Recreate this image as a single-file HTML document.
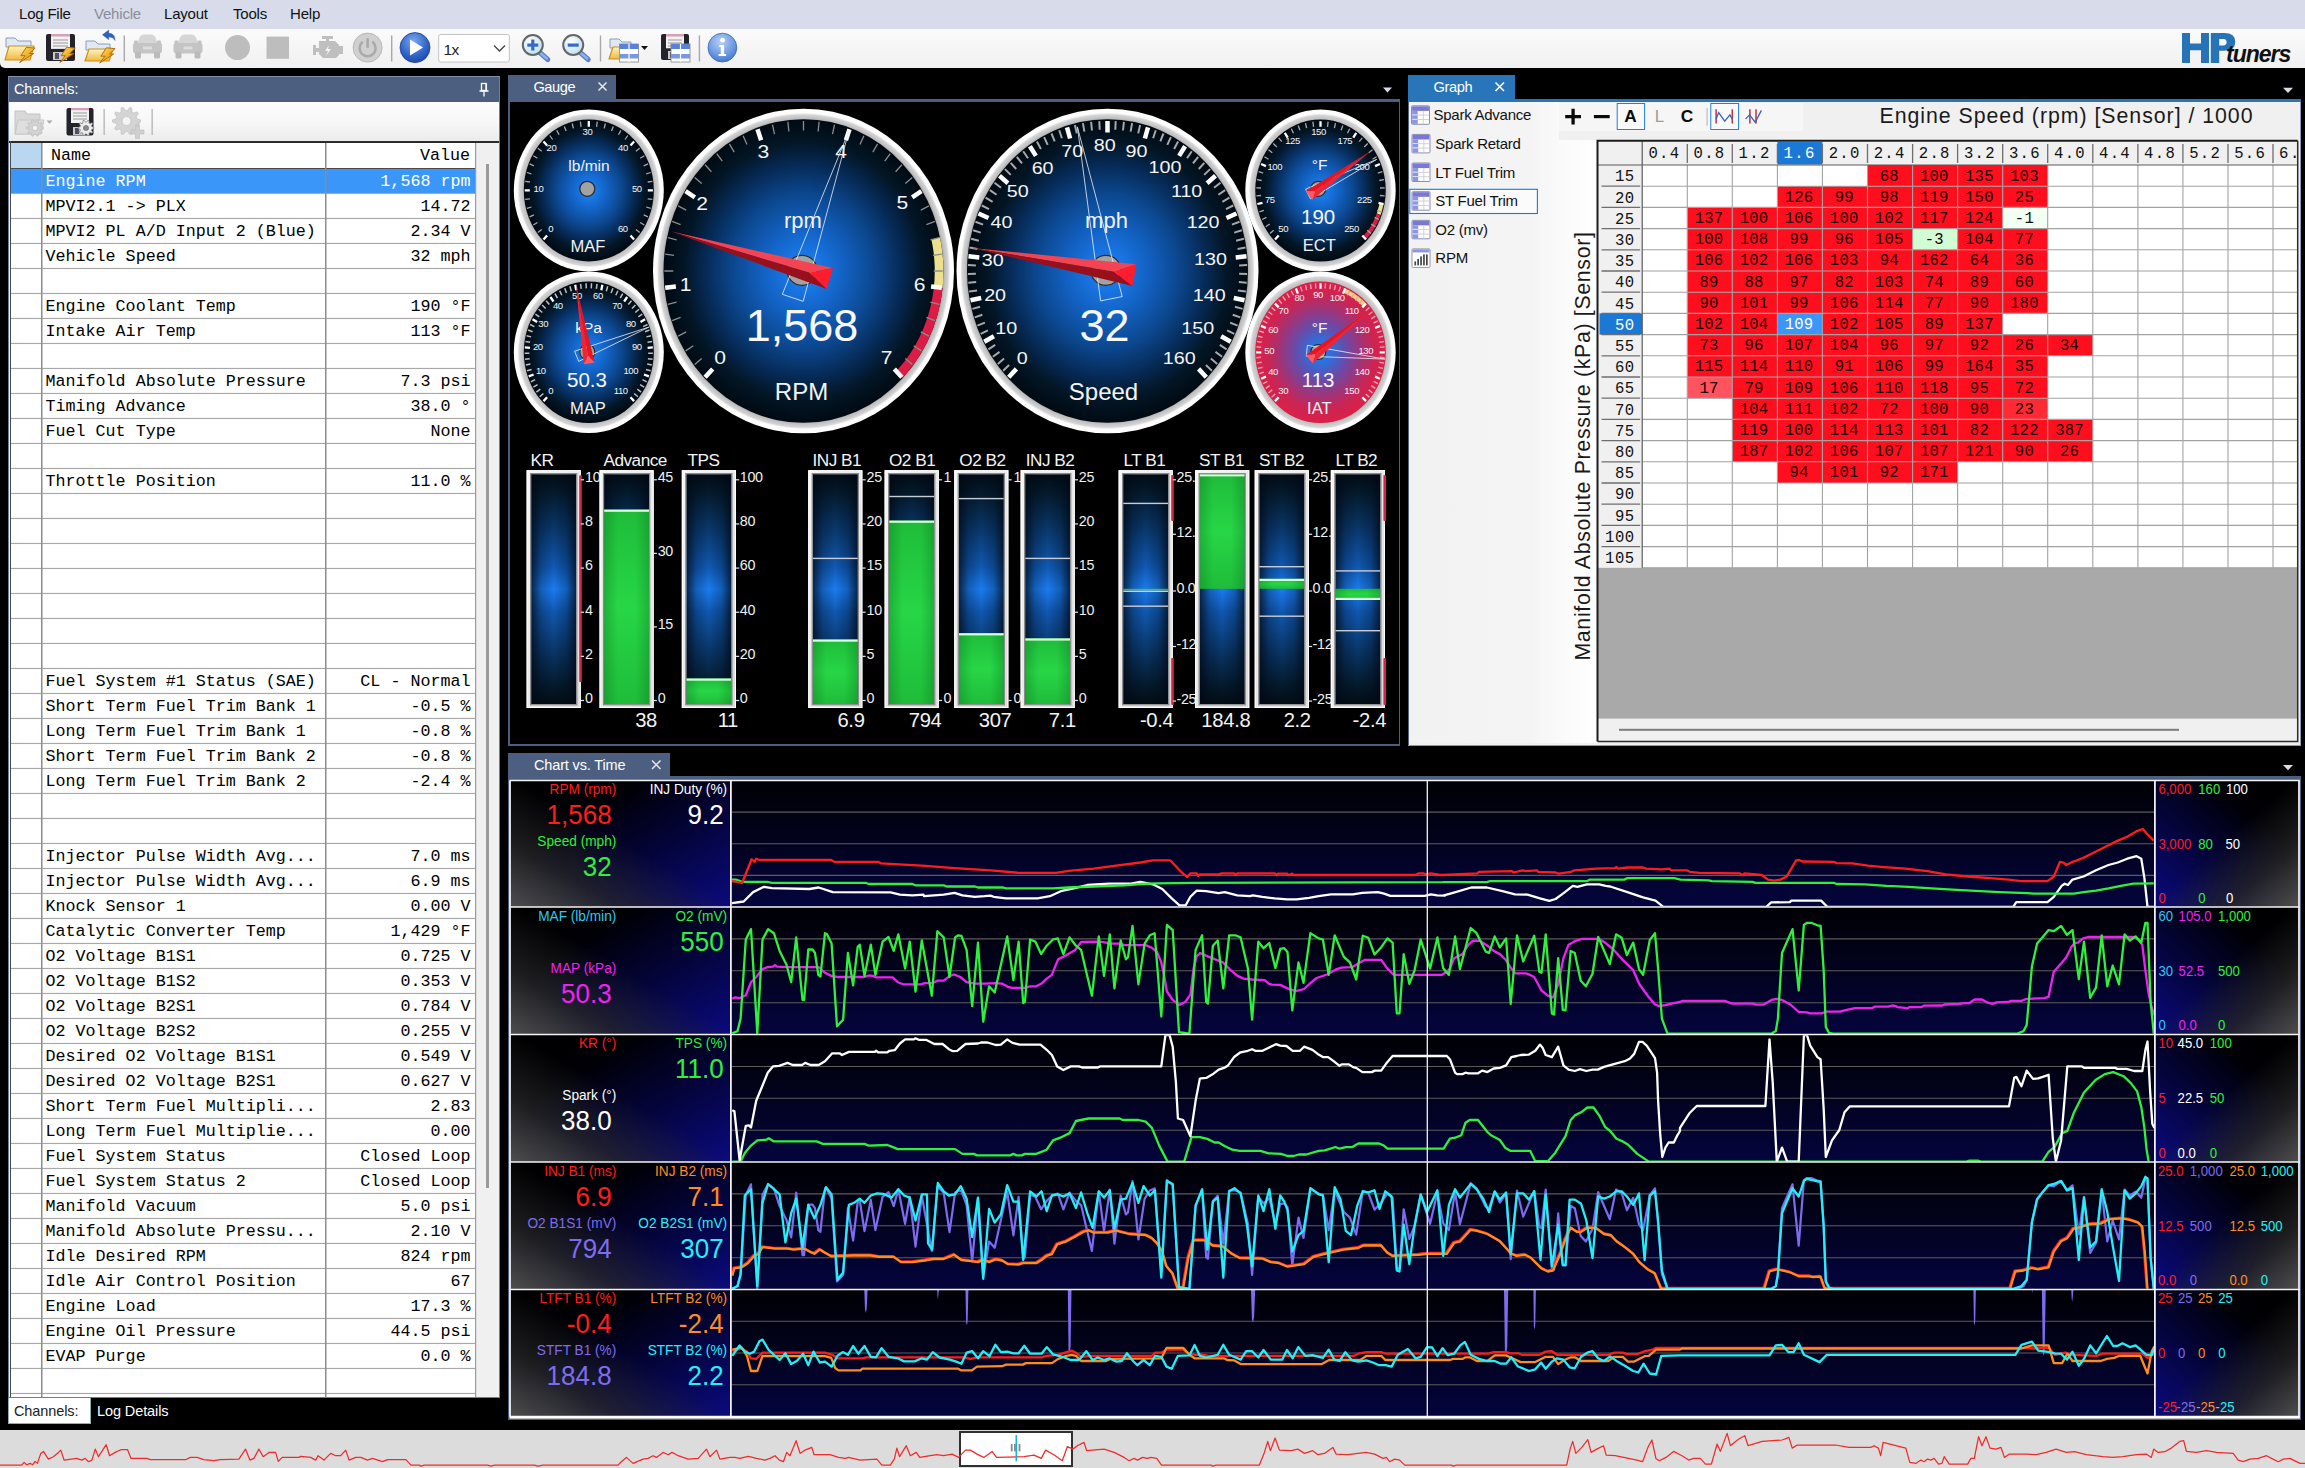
<!DOCTYPE html>
<html><head><meta charset='utf-8'><title>VCM Scanner</title><style>
*{box-sizing:border-box;margin:0;padding:0}
html,body{width:2305px;height:1468px;overflow:hidden;background:#000;}
body{position:relative;font-family:"Liberation Sans",sans-serif;color:#000;}
.abs{position:absolute}
.t{position:absolute;white-space:nowrap;line-height:1}
.mono{font-family:"Liberation Mono",monospace}
svg{position:absolute;left:0;top:0;overflow:visible}
</style></head><body>
<div class="abs" style="left:0;top:0;width:2305px;height:29px;background:#d8dcea"></div>
<div class="t" style="left:19px;top:6px;font-size:15px;color:#111;letter-spacing:-0.2px">Log File</div>
<div class="t" style="left:94px;top:6px;font-size:15px;color:#8a8d98;letter-spacing:-0.2px">Vehicle</div>
<div class="t" style="left:164px;top:6px;font-size:15px;color:#111;letter-spacing:-0.2px">Layout</div>
<div class="t" style="left:233px;top:6px;font-size:15px;color:#111;letter-spacing:-0.2px">Tools</div>
<div class="t" style="left:290px;top:6px;font-size:15px;color:#111;letter-spacing:-0.2px">Help</div>
<div class="abs" style="left:0;top:29px;width:2305px;height:38.6px;background:linear-gradient(#fbfbfb,#f0f0f0);border-bottom-left-radius:5px"></div>
<svg width="2305" height="70" viewBox="0 0 2305 70"><defs>
<linearGradient id="fold" x1="0" y1="0" x2="0" y2="1"><stop offset="0" stop-color="#fff3c0"/><stop offset="1" stop-color="#f0b840"/></linearGradient>
<linearGradient id="bolt" x1="0" y1="0" x2="1" y2="1"><stop offset="0" stop-color="#ffe060"/><stop offset="1" stop-color="#e08000"/></linearGradient>
<radialGradient id="bluebtn" cx="0.45" cy="0.3" r="0.8"><stop offset="0" stop-color="#7aa8f0"/><stop offset="0.6" stop-color="#2f62c8"/><stop offset="1" stop-color="#1c3f98"/></radialGradient>
<radialGradient id="infobtn" cx="0.45" cy="0.3" r="0.8"><stop offset="0" stop-color="#b8d0f8"/><stop offset="0.6" stop-color="#6a98e0"/><stop offset="1" stop-color="#3868c0"/></radialGradient>
<radialGradient id="lens" cx="0.4" cy="0.35" r="0.7"><stop offset="0" stop-color="#ffffff"/><stop offset="1" stop-color="#b8e0f4"/></radialGradient>
</defs><path d="M6,38 h9 l3,3 h13 v6 h-25 z" fill="#dfe9f5" stroke="#8aa0b8" stroke-width="1"/><path d="M9,46 h25 l-4,14 h-25 z" fill="url(#fold)" stroke="#c89020" stroke-width="1.2" stroke-linejoin="round"/><path d="M26.3,47.3 L35.1,48.099999999999994 L29.5,53.5 L33.7,53.5 L19.7,62.5 L25.1,55.699999999999996 L20.900000000000002,55.699999999999996 Z" fill="url(#bolt)" stroke="#b06400" stroke-width="0.9" stroke-linejoin="round"/><rect x="46" y="34" width="29" height="27" rx="2" fill="#23232b"/><rect x="51" y="34" width="19" height="14.9" fill="#f2f2f2"/><rect x="51" y="34" width="19" height="2.5" fill="#d8a0b8"/><path d="M53,40 h15 M53,43 h15 M53,46 h15" stroke="#999" stroke-width="1"/><rect x="53" y="52" width="14" height="8" fill="#c8c8d0"/><rect x="55" y="53" width="4" height="6" fill="#50505a"/><path d="M66.5,47.3 L75.3,48.099999999999994 L69.7,53.5 L73.9,53.5 L59.9,62.5 L65.3,55.699999999999996 L61.1,55.699999999999996 Z" fill="url(#bolt)" stroke="#b06400" stroke-width="0.9" stroke-linejoin="round"/><path d="M86,41 h9 l3,3 h12 v6 h-24 z" fill="#dfe9f5" stroke="#8aa0b8" stroke-width="1"/><path d="M89,49 h24 l-4,12 h-24 z" fill="url(#fold)" stroke="#c89020" stroke-width="1.2" stroke-linejoin="round"/><path d="M106.3,47.8 L115.1,48.599999999999994 L109.5,54.0 L113.7,54.0 L99.7,63.0 L105.1,56.199999999999996 L100.89999999999999,56.199999999999996 Z" fill="url(#bolt)" stroke="#b06400" stroke-width="0.9" stroke-linejoin="round"/><path d="M102.5,34.8 l6.2,-4.6 v3 q6.4,0.2 6.3,7.2 q-2,-3.6 -6.3,-3.6 v2.8 z" fill="#2b62bc" stroke="#20509c" stroke-width="0.5"/><rect x="123.6" y="35.5" width="1.4" height="26" fill="#a8a8a8"/><rect x="391.0" y="35.5" width="1.4" height="26" fill="#a8a8a8"/><rect x="599.8" y="35.5" width="1.4" height="26" fill="#a8a8a8"/><rect x="698.6999999999999" y="35.5" width="1.4" height="26" fill="#a8a8a8"/><path d="M138,42.5 q1,-7 5,-8 h9 q4,1 5,8 z" fill="#d6d6d6"/><rect x="133" y="42.5" width="29" height="11" rx="3" fill="#c4c4c4"/><rect x="134" y="40.5" width="4" height="3" rx="1" fill="#c4c4c4"/><rect x="157" y="40.5" width="4" height="3" rx="1" fill="#c4c4c4"/><rect x="135" y="51.5" width="6" height="7" rx="1.5" fill="#bbb"/><rect x="154" y="51.5" width="6" height="7" rx="1.5" fill="#bbb"/><rect x="143" y="46.5" width="9" height="3" fill="#dcdcdc"/><path d="M178.5,42.5 q1,-7 5,-8 h9 q4,1 5,8 z" fill="#d6d6d6"/><rect x="173.5" y="42.5" width="29" height="11" rx="3" fill="#c4c4c4"/><rect x="174.5" y="40.5" width="4" height="3" rx="1" fill="#c4c4c4"/><rect x="197.5" y="40.5" width="4" height="3" rx="1" fill="#c4c4c4"/><rect x="175.5" y="51.5" width="6" height="7" rx="1.5" fill="#bbb"/><rect x="194.5" y="51.5" width="6" height="7" rx="1.5" fill="#bbb"/><rect x="183.5" y="46.5" width="9" height="3" fill="#dcdcdc"/><circle cx="237.5" cy="47.6" r="12.5" fill="#bdbdbd"/><rect x="266.5" y="36.6" width="22.5" height="22.2" fill="#bdbdbd"/><g fill="#bfbfbf"><rect x="322" y="36" width="11" height="3"/><rect x="326" y="38" width="3" height="4"/><path d="M319,41 h16 l4,4 v10 l-3,3 h-13 l-4,-4 z"/><rect x="313" y="45" width="3" height="10"/><rect x="315" y="48" width="5" height="4"/><rect x="339" y="46" width="4" height="8"/></g><path d="M329,45 l-4,6 h3 l-2,5 l5,-7 h-3 z" fill="#f2f2f2"/><circle cx="367.6" cy="47.6" r="14.5" fill="#d0d0d0" stroke="#b8b8b8"/><path d="M362,42.5 a8,8 0 1 0 11.2,0" fill="none" stroke="#aaa" stroke-width="2.6" stroke-linecap="round"/><rect x="366.3" y="38" width="2.6" height="10" rx="1" fill="#aaa"/><circle cx="415" cy="47.6" r="15" fill="url(#bluebtn)" stroke="#1c3f98" stroke-width="0.8"/><path d="M410,39.5 l13,8 l-13,8 z" fill="#fff"/><rect x="438.7" y="34.5" width="70.6" height="27.5" rx="2" fill="#fff" stroke="#c4c4c4"/><path d="M494,45.5 l5.5,5.5 l5.5,-5.5" fill="none" stroke="#444" stroke-width="1.3"/><path d="M539.8,52.5 l8,7" stroke="#5a80c8" stroke-width="5" stroke-linecap="round"/><path d="M540.8,53.5 l6,5" stroke="#8fb0ec" stroke-width="2.5" stroke-linecap="round"/><circle cx="532.8" cy="45" r="10" fill="url(#lens)" stroke="#666" stroke-width="2"/><rect x="527.3" y="43.5" width="11" height="3.2" fill="#3a68c8"/><rect x="531.1999999999999" y="39.5" width="3.2" height="11" fill="#3a68c8"/><path d="M580.2,52.5 l8,7" stroke="#5a80c8" stroke-width="5" stroke-linecap="round"/><path d="M581.2,53.5 l6,5" stroke="#8fb0ec" stroke-width="2.5" stroke-linecap="round"/><circle cx="573.2" cy="45" r="10" fill="url(#lens)" stroke="#666" stroke-width="2"/><rect x="567.7" y="43.5" width="11" height="3.2" fill="#3a68c8"/><path d="M610,39 h9 l3,3 h9 v6 h-21 z" fill="#dfe9f5" stroke="#8aa0b8" stroke-width="1"/><path d="M613,47 h21 l-4,12 h-21 z" fill="url(#fold)" stroke="#c89020" stroke-width="1.2" stroke-linejoin="round"/><rect x="619.5" y="44" width="19" height="18" fill="#fff" stroke="#888" stroke-width="0.8"/><rect x="619.5" y="44" width="19" height="5" fill="#5a80d8"/><rect x="619.5" y="54" width="19" height="4.5" fill="#7898e0"/><path d="M629.0,44 v18" stroke="#fff" stroke-width="1.2"/><path d="M641,46 h7 l-3.5,4 z" fill="#111"/><rect x="661" y="34" width="28" height="26" rx="2" fill="#23232b"/><rect x="666" y="34" width="18" height="14.3" fill="#f2f2f2"/><rect x="666" y="34" width="18" height="2.5" fill="#d8a0b8"/><path d="M668,40 h14 M668,43 h14 M668,46 h14" stroke="#999" stroke-width="1"/><rect x="668" y="51" width="13" height="8" fill="#c8c8d0"/><rect x="670" y="52" width="4" height="6" fill="#50505a"/><rect x="671" y="44" width="19" height="18" fill="#fff" stroke="#888" stroke-width="0.8"/><rect x="671" y="44" width="19" height="5" fill="#5a80d8"/><rect x="671" y="54" width="19" height="4.5" fill="#7898e0"/><path d="M680.5,44 v18" stroke="#fff" stroke-width="1.2"/><circle cx="722.4" cy="47.6" r="14.4" fill="url(#infobtn)" stroke="#3a64b8" stroke-width="0.8"/><circle cx="722.6" cy="40.2" r="2.4" fill="#fff"/><path d="M719.5,45 h4.6 v9 h2 v2 h-7.5 v-2 h2.2 v-7 h-1.6 z" fill="#fff"/></svg>
<div class="t" style="left:443.5px;top:42px;font-size:15.5px;color:#222;letter-spacing:-0.6px">1x</div>
<svg width="2305" height="70"><g fill="#2773b7"><path d="M2182,32.9 h8 v10.7 h11 v-10.7 h8 v30.2 h-8 v-12.9 h-11 v12.9 h-8 z"/><path fill-rule="evenodd" d="M2210.8,32.9 h13.6 q10.9,0 10.9,8.9 q0,8.9 -10.9,8.9 h-5.2 v12.4 h-8.4 z M2219.2,39.1 v6.3 h4.2 q3.2,0 3.2,-3.15 q0,-3.15 -3.2,-3.15 z"/></g></svg>
<div class="t" style="left:2226px;top:43.2px;font-size:23px;font-weight:bold;font-style:italic;color:#111;letter-spacing:-1px">tuners</div>
<div class="abs" style="left:8px;top:76px;width:492px;height:1322px;background:#f0f0f0;border:1px solid #6c7ea0;border-top-color:#7f90b0"></div>
<div class="abs" style="left:9px;top:77px;width:490px;height:25px;background:#4d5f80"></div>
<div class="t" style="left:14px;top:82px;font-size:14.5px;color:#fff;letter-spacing:-0.1px">Channels:</div>
<svg width="2305" height="1468"><g stroke="#fff" stroke-width="1.3" fill="none"><rect x="481.5" y="83.5" width="4.6" height="7"/><path d="M486.4,83.5 v7.5 M479.5,91 h9 M484,91 v5.5"/></g></svg>
<div class="abs" style="left:9px;top:102px;width:490px;height:39px;background:linear-gradient(#fdfdfd,#f6f6f6 60%,#ebebeb)"></div>
<svg width="2305" height="1468"><path d="M15,111 h10 l2,3 h13 v20 h-25 z" fill="#d8d8d8" stroke="#c4c4c4"/><path d="M18,120 h26 l-3,14 h-26 z" fill="#dedede" stroke="#c8c8c8"/><polygon points="43.5,127.3 43.5,128.7 41.1,129.5 40.8,130.4 42.3,132.4 41.5,133.5 39.1,132.8 38.3,133.4 38.3,135.8 37.0,136.3 35.5,134.3 34.5,134.3 33.0,136.3 31.8,135.9 31.7,133.4 30.9,132.8 28.5,133.5 27.8,132.5 29.2,130.4 28.9,129.5 26.5,128.7 26.5,127.3 28.9,126.5 29.2,125.6 27.7,123.6 28.5,122.5 30.9,123.2 31.7,122.6 31.7,120.2 33.0,119.7 34.5,121.7 35.5,121.7 37.0,119.7 38.2,120.1 38.3,122.6 39.1,123.2 41.5,122.5 42.2,123.5 40.8,125.6 41.1,126.5" fill="#d2d2d2" stroke="#bcbcbc" stroke-width="0.7"/><circle cx="35" cy="128" r="2.7" fill="#f4f4f4" stroke="#bcbcbc" stroke-width="0.7"/><path d="M46.5,120.5 h6 l-3,3.2 z" fill="#aaa"/><rect x="66.5" y="108" width="27" height="27.5" rx="2" fill="#23232b"/><rect x="71" y="108" width="18" height="15" fill="#f2f2f2"/><rect x="71" y="108" width="18" height="2.2" fill="#d8a0b8"/><path d="M73,113 h14 M73,116 h14 M73,119 h14" stroke="#999" stroke-width="1"/><rect x="73" y="127" width="11" height="8" fill="#c8c8d0"/><rect x="75" y="128" width="4" height="6" fill="#50505a"/><polygon points="94.0,127.4 94.0,128.6 91.8,129.4 91.5,130.3 92.8,132.2 92.1,133.2 89.9,132.5 89.1,133.0 89.1,135.4 87.9,135.8 86.5,133.9 85.5,133.9 84.1,135.8 82.9,135.4 82.9,133.1 82.2,132.5 79.9,133.2 79.2,132.2 80.5,130.3 80.2,129.4 78.0,128.6 78.0,127.4 80.2,126.6 80.5,125.7 79.2,123.8 79.9,122.8 82.1,123.5 82.9,123.0 82.9,120.6 84.1,120.2 85.5,122.1 86.5,122.1 87.9,120.2 89.1,120.6 89.1,122.9 89.8,123.5 92.1,122.8 92.8,123.8 91.5,125.7 91.8,126.6" fill="#ececec" stroke="#777" stroke-width="0.7"/><circle cx="86" cy="128" r="2.6" fill="#888" stroke="#777" stroke-width="0.7"/><rect x="103.5" y="109" width="1.3" height="26" fill="#b4b4b4"/><rect x="151.5" y="109" width="1.3" height="26" fill="#b4b4b4"/><polygon points="140.5,119.9 140.5,122.1 136.6,123.4 136.1,125.0 138.4,128.3 137.2,130.1 133.2,128.9 131.9,129.8 131.9,133.9 129.8,134.6 127.3,131.3 125.7,131.3 123.3,134.6 121.2,133.9 121.1,129.8 119.8,128.9 115.9,130.1 114.6,128.3 116.9,125.0 116.4,123.4 112.5,122.1 112.5,119.9 116.4,118.6 116.9,117.0 114.6,113.7 115.8,111.9 119.8,113.1 121.1,112.2 121.1,108.1 123.2,107.4 125.7,110.7 127.3,110.7 129.7,107.4 131.8,108.1 131.9,112.2 133.2,113.1 137.1,111.9 138.4,113.7 136.1,117.0 136.6,118.6" fill="#d4d4d4" stroke="#c0c0c0" stroke-width="0.7"/><circle cx="126.5" cy="121" r="4.5" fill="#f4f4f4" stroke="#c0c0c0" stroke-width="0.7"/><path d="M135,126 h4 v-4 h0 M131,130 h4.5 v-4.5 h4 v4.5 h4.5 v4 h-4.5 v4.5 h-4 v-4.5 h-4.5 z" fill="#cfcfcf" stroke="#bdbdbd" stroke-width="0.6"/></svg>
<div class="abs" style="left:9px;top:141px;width:490px;height:2px;background:#2a2a2a"></div>
<div class="abs" style="left:9.6px;top:141px;width:1.3px;height:1256px;background:#4a4a4a"></div>
<div class="abs" style="left:10.8px;top:143px;width:487.2px;height:1254px;background:#fff"></div>
<div class="abs" style="left:476px;top:143px;width:22px;height:1254px;background:#f0f0f0"></div>
<div class="abs" style="left:486.3px;top:164px;width:2.4px;height:1024px;background:#9a9a9a"></div>
<div class="abs" style="left:11px;top:143px;width:30.5px;height:25px;background:#b9d7f0"></div>
<div class="abs" style="left:11px;top:167.5px;width:465px;height:1.6px;background:#4a4a4a"></div>
<div class="t mono" style="left:51px;top:148px;font-size:16.7px;color:#000">Name</div>
<div class="t mono" style="left:326px;top:148px;width:144px;text-align:right;font-size:16.7px;color:#000">Value</div>
<div class="abs" style="left:11px;top:169px;width:465px;height:24px;background:#3a96f8"></div>
<div class="t mono" style="left:45.5px;top:173.5px;font-size:16.7px;color:#fff">Engine RPM</div>
<div class="t mono" style="left:326px;top:173.5px;width:144.5px;text-align:right;font-size:16.7px;color:#fff;white-space:pre">1,568 rpm</div>
<div class="t mono" style="left:45.5px;top:198.5px;font-size:16.7px;color:#000">MPVI2.1 -> PLX</div>
<div class="t mono" style="left:326px;top:198.5px;width:144.5px;text-align:right;font-size:16.7px;color:#000;white-space:pre">14.72</div>
<div class="t mono" style="left:45.5px;top:223.5px;font-size:16.7px;color:#000">MPVI2 PL A/D Input 2 (Blue)</div>
<div class="t mono" style="left:326px;top:223.5px;width:144.5px;text-align:right;font-size:16.7px;color:#000;white-space:pre">2.34 V</div>
<div class="t mono" style="left:45.5px;top:248.5px;font-size:16.7px;color:#000">Vehicle Speed</div>
<div class="t mono" style="left:326px;top:248.5px;width:144.5px;text-align:right;font-size:16.7px;color:#000;white-space:pre">32 mph</div>
<div class="t mono" style="left:45.5px;top:298.5px;font-size:16.7px;color:#000">Engine Coolant Temp</div>
<div class="t mono" style="left:326px;top:298.5px;width:144.5px;text-align:right;font-size:16.7px;color:#000;white-space:pre">190 °F</div>
<div class="t mono" style="left:45.5px;top:323.5px;font-size:16.7px;color:#000">Intake Air Temp</div>
<div class="t mono" style="left:326px;top:323.5px;width:144.5px;text-align:right;font-size:16.7px;color:#000;white-space:pre">113 °F</div>
<div class="t mono" style="left:45.5px;top:373.5px;font-size:16.7px;color:#000">Manifold Absolute Pressure</div>
<div class="t mono" style="left:326px;top:373.5px;width:144.5px;text-align:right;font-size:16.7px;color:#000;white-space:pre">7.3 psi</div>
<div class="t mono" style="left:45.5px;top:398.5px;font-size:16.7px;color:#000">Timing Advance</div>
<div class="t mono" style="left:326px;top:398.5px;width:144.5px;text-align:right;font-size:16.7px;color:#000;white-space:pre">38.0 °</div>
<div class="t mono" style="left:45.5px;top:423.5px;font-size:16.7px;color:#000">Fuel Cut Type</div>
<div class="t mono" style="left:326px;top:423.5px;width:144.5px;text-align:right;font-size:16.7px;color:#000;white-space:pre">None</div>
<div class="t mono" style="left:45.5px;top:473.5px;font-size:16.7px;color:#000">Throttle Position</div>
<div class="t mono" style="left:326px;top:473.5px;width:144.5px;text-align:right;font-size:16.7px;color:#000;white-space:pre">11.0 %</div>
<div class="t mono" style="left:45.5px;top:673.5px;font-size:16.7px;color:#000">Fuel System #1 Status (SAE)</div>
<div class="t mono" style="left:326px;top:673.5px;width:144.5px;text-align:right;font-size:16.7px;color:#000;white-space:pre">CL - Normal</div>
<div class="t mono" style="left:45.5px;top:698.5px;font-size:16.7px;color:#000">Short Term Fuel Trim Bank 1</div>
<div class="t mono" style="left:326px;top:698.5px;width:144.5px;text-align:right;font-size:16.7px;color:#000;white-space:pre">-0.5 %</div>
<div class="t mono" style="left:45.5px;top:723.5px;font-size:16.7px;color:#000">Long Term Fuel Trim Bank 1</div>
<div class="t mono" style="left:326px;top:723.5px;width:144.5px;text-align:right;font-size:16.7px;color:#000;white-space:pre">-0.8 %</div>
<div class="t mono" style="left:45.5px;top:748.5px;font-size:16.7px;color:#000">Short Term Fuel Trim Bank 2</div>
<div class="t mono" style="left:326px;top:748.5px;width:144.5px;text-align:right;font-size:16.7px;color:#000;white-space:pre">-0.8 %</div>
<div class="t mono" style="left:45.5px;top:773.5px;font-size:16.7px;color:#000">Long Term Fuel Trim Bank 2</div>
<div class="t mono" style="left:326px;top:773.5px;width:144.5px;text-align:right;font-size:16.7px;color:#000;white-space:pre">-2.4 %</div>
<div class="t mono" style="left:45.5px;top:848.5px;font-size:16.7px;color:#000">Injector Pulse Width Avg...</div>
<div class="t mono" style="left:326px;top:848.5px;width:144.5px;text-align:right;font-size:16.7px;color:#000;white-space:pre">7.0 ms</div>
<div class="t mono" style="left:45.5px;top:873.5px;font-size:16.7px;color:#000">Injector Pulse Width Avg...</div>
<div class="t mono" style="left:326px;top:873.5px;width:144.5px;text-align:right;font-size:16.7px;color:#000;white-space:pre">6.9 ms</div>
<div class="t mono" style="left:45.5px;top:898.5px;font-size:16.7px;color:#000">Knock Sensor 1</div>
<div class="t mono" style="left:326px;top:898.5px;width:144.5px;text-align:right;font-size:16.7px;color:#000;white-space:pre">0.00 V</div>
<div class="t mono" style="left:45.5px;top:923.5px;font-size:16.7px;color:#000">Catalytic Converter Temp</div>
<div class="t mono" style="left:326px;top:923.5px;width:144.5px;text-align:right;font-size:16.7px;color:#000;white-space:pre">1,429 °F</div>
<div class="t mono" style="left:45.5px;top:948.5px;font-size:16.7px;color:#000">O2 Voltage B1S1</div>
<div class="t mono" style="left:326px;top:948.5px;width:144.5px;text-align:right;font-size:16.7px;color:#000;white-space:pre">0.725 V</div>
<div class="t mono" style="left:45.5px;top:973.5px;font-size:16.7px;color:#000">O2 Voltage B1S2</div>
<div class="t mono" style="left:326px;top:973.5px;width:144.5px;text-align:right;font-size:16.7px;color:#000;white-space:pre">0.353 V</div>
<div class="t mono" style="left:45.5px;top:998.5px;font-size:16.7px;color:#000">O2 Voltage B2S1</div>
<div class="t mono" style="left:326px;top:998.5px;width:144.5px;text-align:right;font-size:16.7px;color:#000;white-space:pre">0.784 V</div>
<div class="t mono" style="left:45.5px;top:1023.5px;font-size:16.7px;color:#000">O2 Voltage B2S2</div>
<div class="t mono" style="left:326px;top:1023.5px;width:144.5px;text-align:right;font-size:16.7px;color:#000;white-space:pre">0.255 V</div>
<div class="t mono" style="left:45.5px;top:1048.5px;font-size:16.7px;color:#000">Desired O2 Voltage B1S1</div>
<div class="t mono" style="left:326px;top:1048.5px;width:144.5px;text-align:right;font-size:16.7px;color:#000;white-space:pre">0.549 V</div>
<div class="t mono" style="left:45.5px;top:1073.5px;font-size:16.7px;color:#000">Desired O2 Voltage B2S1</div>
<div class="t mono" style="left:326px;top:1073.5px;width:144.5px;text-align:right;font-size:16.7px;color:#000;white-space:pre">0.627 V</div>
<div class="t mono" style="left:45.5px;top:1098.5px;font-size:16.7px;color:#000">Short Term Fuel Multipli...</div>
<div class="t mono" style="left:326px;top:1098.5px;width:144.5px;text-align:right;font-size:16.7px;color:#000;white-space:pre">2.83</div>
<div class="t mono" style="left:45.5px;top:1123.5px;font-size:16.7px;color:#000">Long Term Fuel Multiplie...</div>
<div class="t mono" style="left:326px;top:1123.5px;width:144.5px;text-align:right;font-size:16.7px;color:#000;white-space:pre">0.00</div>
<div class="t mono" style="left:45.5px;top:1148.5px;font-size:16.7px;color:#000">Fuel System Status</div>
<div class="t mono" style="left:326px;top:1148.5px;width:144.5px;text-align:right;font-size:16.7px;color:#000;white-space:pre">Closed Loop</div>
<div class="t mono" style="left:45.5px;top:1173.5px;font-size:16.7px;color:#000">Fuel System Status 2</div>
<div class="t mono" style="left:326px;top:1173.5px;width:144.5px;text-align:right;font-size:16.7px;color:#000;white-space:pre">Closed Loop</div>
<div class="t mono" style="left:45.5px;top:1198.5px;font-size:16.7px;color:#000">Manifold Vacuum</div>
<div class="t mono" style="left:326px;top:1198.5px;width:144.5px;text-align:right;font-size:16.7px;color:#000;white-space:pre">5.0 psi</div>
<div class="t mono" style="left:45.5px;top:1223.5px;font-size:16.7px;color:#000">Manifold Absolute Pressu...</div>
<div class="t mono" style="left:326px;top:1223.5px;width:144.5px;text-align:right;font-size:16.7px;color:#000;white-space:pre">2.10 V</div>
<div class="t mono" style="left:45.5px;top:1248.5px;font-size:16.7px;color:#000">Idle Desired RPM</div>
<div class="t mono" style="left:326px;top:1248.5px;width:144.5px;text-align:right;font-size:16.7px;color:#000;white-space:pre">824 rpm</div>
<div class="t mono" style="left:45.5px;top:1273.5px;font-size:16.7px;color:#000">Idle Air Control Position</div>
<div class="t mono" style="left:326px;top:1273.5px;width:144.5px;text-align:right;font-size:16.7px;color:#000;white-space:pre">67</div>
<div class="t mono" style="left:45.5px;top:1298.5px;font-size:16.7px;color:#000">Engine Load</div>
<div class="t mono" style="left:326px;top:1298.5px;width:144.5px;text-align:right;font-size:16.7px;color:#000;white-space:pre">17.3 %</div>
<div class="t mono" style="left:45.5px;top:1323.5px;font-size:16.7px;color:#000">Engine Oil Pressure</div>
<div class="t mono" style="left:326px;top:1323.5px;width:144.5px;text-align:right;font-size:16.7px;color:#000;white-space:pre">44.5 psi</div>
<div class="t mono" style="left:45.5px;top:1348.5px;font-size:16.7px;color:#000">EVAP Purge</div>
<div class="t mono" style="left:326px;top:1348.5px;width:144.5px;text-align:right;font-size:16.7px;color:#000;white-space:pre">0.0 %</div>
<svg width="2305" height="1468"><rect x="11" y="192.9" width="465" height="1.15" fill="#a8a8a8"/><rect x="11" y="217.9" width="465" height="1.15" fill="#a8a8a8"/><rect x="11" y="242.9" width="465" height="1.15" fill="#a8a8a8"/><rect x="11" y="267.9" width="465" height="1.15" fill="#a8a8a8"/><rect x="11" y="292.9" width="465" height="1.15" fill="#a8a8a8"/><rect x="11" y="317.9" width="465" height="1.15" fill="#a8a8a8"/><rect x="11" y="342.9" width="465" height="1.15" fill="#a8a8a8"/><rect x="11" y="367.9" width="465" height="1.15" fill="#a8a8a8"/><rect x="11" y="392.9" width="465" height="1.15" fill="#a8a8a8"/><rect x="11" y="417.9" width="465" height="1.15" fill="#a8a8a8"/><rect x="11" y="442.9" width="465" height="1.15" fill="#a8a8a8"/><rect x="11" y="467.9" width="465" height="1.15" fill="#a8a8a8"/><rect x="11" y="492.9" width="465" height="1.15" fill="#a8a8a8"/><rect x="11" y="517.9" width="465" height="1.15" fill="#a8a8a8"/><rect x="11" y="542.9" width="465" height="1.15" fill="#a8a8a8"/><rect x="11" y="567.9" width="465" height="1.15" fill="#a8a8a8"/><rect x="11" y="592.9" width="465" height="1.15" fill="#a8a8a8"/><rect x="11" y="617.9" width="465" height="1.15" fill="#a8a8a8"/><rect x="11" y="642.9" width="465" height="1.15" fill="#a8a8a8"/><rect x="11" y="667.9" width="465" height="1.15" fill="#a8a8a8"/><rect x="11" y="692.9" width="465" height="1.15" fill="#a8a8a8"/><rect x="11" y="717.9" width="465" height="1.15" fill="#a8a8a8"/><rect x="11" y="742.9" width="465" height="1.15" fill="#a8a8a8"/><rect x="11" y="767.9" width="465" height="1.15" fill="#a8a8a8"/><rect x="11" y="792.9" width="465" height="1.15" fill="#a8a8a8"/><rect x="11" y="817.9" width="465" height="1.15" fill="#a8a8a8"/><rect x="11" y="842.9" width="465" height="1.15" fill="#a8a8a8"/><rect x="11" y="867.9" width="465" height="1.15" fill="#a8a8a8"/><rect x="11" y="892.9" width="465" height="1.15" fill="#a8a8a8"/><rect x="11" y="917.9" width="465" height="1.15" fill="#a8a8a8"/><rect x="11" y="942.9" width="465" height="1.15" fill="#a8a8a8"/><rect x="11" y="967.9" width="465" height="1.15" fill="#a8a8a8"/><rect x="11" y="992.9" width="465" height="1.15" fill="#a8a8a8"/><rect x="11" y="1017.9" width="465" height="1.15" fill="#a8a8a8"/><rect x="11" y="1042.9" width="465" height="1.15" fill="#a8a8a8"/><rect x="11" y="1067.9" width="465" height="1.15" fill="#a8a8a8"/><rect x="11" y="1092.9" width="465" height="1.15" fill="#a8a8a8"/><rect x="11" y="1117.9" width="465" height="1.15" fill="#a8a8a8"/><rect x="11" y="1142.9" width="465" height="1.15" fill="#a8a8a8"/><rect x="11" y="1167.9" width="465" height="1.15" fill="#a8a8a8"/><rect x="11" y="1192.9" width="465" height="1.15" fill="#a8a8a8"/><rect x="11" y="1217.9" width="465" height="1.15" fill="#a8a8a8"/><rect x="11" y="1242.9" width="465" height="1.15" fill="#a8a8a8"/><rect x="11" y="1267.9" width="465" height="1.15" fill="#a8a8a8"/><rect x="11" y="1292.9" width="465" height="1.15" fill="#a8a8a8"/><rect x="11" y="1317.9" width="465" height="1.15" fill="#a8a8a8"/><rect x="11" y="1342.9" width="465" height="1.15" fill="#a8a8a8"/><rect x="11" y="1367.9" width="465" height="1.15" fill="#a8a8a8"/><rect x="11" y="1392.9" width="465" height="1.15" fill="#a8a8a8"/><rect x="41" y="143" width="1.5" height="1254" fill="#8c8c8c"/><rect x="325" y="143" width="1.5" height="1254" fill="#8c8c8c"/><rect x="475" y="143" width="1.2" height="1254" fill="#9c9c9c"/></svg>
<div class="abs" style="left:8px;top:1398px;width:83px;height:26px;background:#fff;border:1px solid #9aa;border-top:none"></div>
<div class="t" style="left:14px;top:1403.5px;font-size:14.5px;color:#222;letter-spacing:-0.1px">Channels:</div>
<div class="t" style="left:97px;top:1403.5px;font-size:14.5px;color:#fff;letter-spacing:-0.1px">Log Details</div>
<div class="abs" style="left:508px;top:75.2px;width:108.3px;height:24.8px;background:#4d5f80"></div>
<div class="t" style="left:533.4px;top:80.2px;font-size:14.6px;color:#fff;letter-spacing:-0.4px">Gauge</div>
<div class="abs" style="left:508px;top:99px;width:892px;height:647px;border:2px solid #4d5f80;border-top-width:3px;border-right-width:1.5px;border-left-width:2px;border-bottom-width:2px"></div>
<svg width="2305" height="1468" font-family="Liberation Sans, sans-serif"><path d="M598.5,82.5 l8,8 M606.5,82.5 l-8,8" stroke="#e8e8e8" stroke-width="1.5"/><path d="M1383,87.5 h9 l-4.5,5 z" fill="#d8dce8"/><defs><radialGradient id="bza"><stop offset="0.864" stop-color="#a0a0a0"/><stop offset="0.877" stop-color="#bebebe"/><stop offset="0.927" stop-color="#d4d4d4"/><stop offset="0.949" stop-color="#fbfbfb"/><stop offset="1" stop-color="#ffffff"/></radialGradient><radialGradient id="fca"><stop offset="0" stop-color="#1c80f4"/><stop offset="0.12" stop-color="#1976e4"/><stop offset="0.3" stop-color="#1260c0"/><stop offset="0.5" stop-color="#0c4890"/><stop offset="0.7" stop-color="#062a56"/><stop offset="0.85" stop-color="#031626"/><stop offset="1" stop-color="#000a12"/></radialGradient><radialGradient id="bzb"><stop offset="0.864" stop-color="#a0a0a0"/><stop offset="0.877" stop-color="#bebebe"/><stop offset="0.927" stop-color="#d4d4d4"/><stop offset="0.949" stop-color="#fbfbfb"/><stop offset="1" stop-color="#ffffff"/></radialGradient><radialGradient id="fcb"><stop offset="0" stop-color="#1c80f4"/><stop offset="0.12" stop-color="#1976e4"/><stop offset="0.3" stop-color="#1260c0"/><stop offset="0.5" stop-color="#0c4890"/><stop offset="0.7" stop-color="#062a56"/><stop offset="0.85" stop-color="#031626"/><stop offset="1" stop-color="#000a12"/></radialGradient><radialGradient id="bzc"><stop offset="0.927" stop-color="#a0a0a0"/><stop offset="0.940" stop-color="#bebebe"/><stop offset="0.962" stop-color="#d4d4d4"/><stop offset="0.973" stop-color="#fbfbfb"/><stop offset="1" stop-color="#ffffff"/></radialGradient><radialGradient id="fcc"><stop offset="0" stop-color="#1c80f4"/><stop offset="0.12" stop-color="#1976e4"/><stop offset="0.3" stop-color="#1260c0"/><stop offset="0.5" stop-color="#0c4890"/><stop offset="0.7" stop-color="#062a56"/><stop offset="0.85" stop-color="#031626"/><stop offset="1" stop-color="#000a12"/></radialGradient><radialGradient id="bzd"><stop offset="0.927" stop-color="#a0a0a0"/><stop offset="0.940" stop-color="#bebebe"/><stop offset="0.962" stop-color="#d4d4d4"/><stop offset="0.974" stop-color="#fbfbfb"/><stop offset="1" stop-color="#ffffff"/></radialGradient><radialGradient id="fcd"><stop offset="0" stop-color="#1c80f4"/><stop offset="0.12" stop-color="#1976e4"/><stop offset="0.3" stop-color="#1260c0"/><stop offset="0.5" stop-color="#0c4890"/><stop offset="0.7" stop-color="#062a56"/><stop offset="0.85" stop-color="#031626"/><stop offset="1" stop-color="#000a12"/></radialGradient><radialGradient id="bze"><stop offset="0.864" stop-color="#a0a0a0"/><stop offset="0.877" stop-color="#bebebe"/><stop offset="0.927" stop-color="#d4d4d4"/><stop offset="0.949" stop-color="#fbfbfb"/><stop offset="1" stop-color="#ffffff"/></radialGradient><radialGradient id="fce"><stop offset="0" stop-color="#1c80f4"/><stop offset="0.12" stop-color="#1976e4"/><stop offset="0.3" stop-color="#1260c0"/><stop offset="0.5" stop-color="#0c4890"/><stop offset="0.7" stop-color="#062a56"/><stop offset="0.85" stop-color="#031626"/><stop offset="1" stop-color="#000a12"/></radialGradient><radialGradient id="bzf"><stop offset="0.864" stop-color="#a0a0a0"/><stop offset="0.877" stop-color="#bebebe"/><stop offset="0.927" stop-color="#d4d4d4"/><stop offset="0.949" stop-color="#fbfbfb"/><stop offset="1" stop-color="#ffffff"/></radialGradient><radialGradient id="fcf"><stop offset="0" stop-color="#1c80f4"/><stop offset="0.15" stop-color="#2c70dc"/><stop offset="0.4" stop-color="#6a4aa8"/><stop offset="0.62" stop-color="#a03478"/><stop offset="0.82" stop-color="#cc2452"/><stop offset="1" stop-color="#dc2048"/></radialGradient></defs><ellipse cx="588.8" cy="190.4" rx="75" ry="81" fill="url(#bza)"/><ellipse cx="588.8" cy="190.4" rx="65" ry="71" fill="url(#fca)"/><path d="M537.9,232.6L541.7,229.5M533.3,225.0L537.4,222.5M529.6,216.9L533.9,214.9M526.9,208.3L531.4,207.0M525.2,199.4L529.9,198.8M525.2,181.4L529.9,182.0M526.9,172.5L531.4,173.8M529.6,163.9L533.9,165.9M533.3,155.8L537.4,158.3M537.9,148.2L541.7,151.3M549.8,135.5L552.6,139.5M556.7,130.4L559.1,134.8M564.3,126.4L566.1,131.1M572.2,123.5L573.4,128.4M580.4,121.7L581.0,126.8M597.2,121.7L596.6,126.8M605.4,123.5L604.2,128.4M613.3,126.4L611.5,131.1M620.9,130.4L618.5,134.8M627.8,135.5L625.0,139.5M639.7,148.2L635.9,151.3M644.3,155.8L640.2,158.3M648.0,163.9L643.7,165.9M650.7,172.5L646.2,173.8M652.4,181.4L647.7,182.0M652.4,199.4L647.7,198.8M650.7,208.3L646.2,207.0M648.0,216.9L643.7,214.9M644.3,225.0L640.2,222.5M639.7,232.6L635.9,229.5" stroke="#a8a8a8" stroke-width="1.3" fill="none"/><path d="M543.5,239.4L547.1,235.4M524.7,190.4L529.8,190.4M543.5,141.4L547.1,145.4M588.8,121.1L588.8,126.7M634.1,141.4L630.5,145.4M652.9,190.4L647.8,190.4M634.1,239.4L630.5,235.4" stroke="#fff" stroke-width="2.3" fill="none"/><text x="550.7" y="228.2" dy="0.36em" text-anchor="middle" font-size="9.5" fill="#f4f4f4" letter-spacing="-0.4">0</text><text x="538.4" y="188.2" dy="0.36em" text-anchor="middle" font-size="9.5" fill="#f4f4f4" letter-spacing="-0.4">10</text><text x="551.5" y="148.0" dy="0.36em" text-anchor="middle" font-size="9.5" fill="#f4f4f4" letter-spacing="-0.4">20</text><text x="587.5" y="132.0" dy="0.36em" text-anchor="middle" font-size="9.5" fill="#f4f4f4" letter-spacing="-0.4">30</text><text x="623.0" y="148.0" dy="0.36em" text-anchor="middle" font-size="9.5" fill="#f4f4f4" letter-spacing="-0.4">40</text><text x="636.8" y="188.2" dy="0.36em" text-anchor="middle" font-size="9.5" fill="#f4f4f4" letter-spacing="-0.4">50</text><text x="622.8" y="228.2" dy="0.36em" text-anchor="middle" font-size="9.5" fill="#f4f4f4" letter-spacing="-0.4">60</text><text x="589" y="165.3" dy="0.36em" text-anchor="middle" font-size="15.5" fill="#f4f4f4">lb/min</text><text x="588" y="245.7" dy="0.36em" text-anchor="middle" font-size="16.5" fill="#f4f4f4">MAF</text><circle cx="587.3" cy="188.8" r="7.5" fill="#a2a2a2" stroke="#2a2a2a" stroke-width="1.2"/><ellipse cx="588.8" cy="352.3" rx="75" ry="80.8" fill="url(#bzb)"/><ellipse cx="588.8" cy="352.3" rx="65" ry="70.8" fill="url(#fcb)"/><path d="M539.7,396.8L543.4,393.5M536.4,392.1L540.3,389.2M533.4,387.1L537.5,384.6M530.9,381.9L535.1,379.7M527.0,370.8L531.6,369.5M525.8,365.1L530.4,364.1M525.0,359.2L529.7,358.7M524.7,353.3L529.4,353.2M525.5,341.5L530.1,342.3M526.6,335.7L531.1,336.9M528.1,330.0L532.6,331.7M530.1,324.5L534.4,326.6M535.4,314.1L539.3,316.9M538.6,309.3L542.3,312.5M542.2,304.9L545.6,308.4M546.1,300.7L549.3,304.5M554.9,293.7L557.4,298.0M559.7,290.7L561.8,295.3M564.7,288.3L566.5,293.0M569.9,286.3L571.3,291.2M580.6,283.8L581.2,288.8M586.1,283.3L586.3,288.4M591.5,283.3L591.3,288.4M597.0,283.8L596.4,288.8M607.7,286.3L606.3,291.2M612.9,288.3L611.1,293.0M617.9,290.7L615.8,295.3M622.7,293.7L620.2,298.0M631.5,300.7L628.3,304.5M635.4,304.9L632.0,308.4M639.0,309.3L635.3,312.5M642.2,314.1L638.3,316.9M647.5,324.5L643.2,326.6M649.5,330.0L645.0,331.7M651.0,335.7L646.5,336.9M652.1,341.5L647.5,342.3M652.9,353.3L648.2,353.2M652.6,359.2L647.9,358.7M651.8,365.1L647.2,364.1M650.6,370.8L646.0,369.5M646.7,381.9L642.5,379.7M644.2,387.1L640.1,384.6M641.2,392.1L637.3,389.2M637.9,396.8L634.2,393.5" stroke="#c0c0c0" stroke-width="1.5" fill="none"/><path d="M543.5,401.1L547.1,397.2M528.7,376.4L533.6,374.5M524.8,347.4L530.0,347.8M532.5,319.2L537.1,321.9M550.4,297.0L553.5,301.5M575.2,284.8L576.3,290.2M602.4,284.8L601.3,290.2M627.2,297.0L624.1,301.5M645.1,319.2L640.5,321.9M652.8,347.4L647.6,347.8M648.9,376.4L644.0,374.5M634.1,401.1L630.5,397.2" stroke="#fff" stroke-width="2.3" fill="none"/><text x="550.7" y="390.4" dy="0.36em" text-anchor="middle" font-size="9.5" fill="#f4f4f4" letter-spacing="-0.4">0</text><text x="540.8" y="370.5" dy="0.36em" text-anchor="middle" font-size="9.5" fill="#f4f4f4" letter-spacing="-0.4">10</text><text x="537.8" y="347.0" dy="0.36em" text-anchor="middle" font-size="9.5" fill="#f4f4f4" letter-spacing="-0.4">20</text><text x="543.2" y="323.4" dy="0.36em" text-anchor="middle" font-size="9.5" fill="#f4f4f4" letter-spacing="-0.4">30</text><text x="557.8" y="305.5" dy="0.36em" text-anchor="middle" font-size="9.5" fill="#f4f4f4" letter-spacing="-0.4">40</text><text x="576.9" y="295.4" dy="0.36em" text-anchor="middle" font-size="9.5" fill="#f4f4f4" letter-spacing="-0.4">50</text><text x="598.0" y="295.4" dy="0.36em" text-anchor="middle" font-size="9.5" fill="#f4f4f4" letter-spacing="-0.4">60</text><text x="617.1" y="305.5" dy="0.36em" text-anchor="middle" font-size="9.5" fill="#f4f4f4" letter-spacing="-0.4">70</text><text x="630.8" y="323.4" dy="0.36em" text-anchor="middle" font-size="9.5" fill="#f4f4f4" letter-spacing="-0.4">80</text><text x="636.8" y="347.0" dy="0.36em" text-anchor="middle" font-size="9.5" fill="#f4f4f4" letter-spacing="-0.4">90</text><text x="630.8" y="370.5" dy="0.36em" text-anchor="middle" font-size="9.5" fill="#f4f4f4" letter-spacing="-0.4">100</text><text x="620.7" y="390.4" dy="0.36em" text-anchor="middle" font-size="9.5" fill="#f4f4f4" letter-spacing="-0.4">110</text><text x="588.5" y="327" dy="0.36em" text-anchor="middle" font-size="15.5" fill="#f4f4f4">kPa</text><text x="588" y="408" dy="0.36em" text-anchor="middle" font-size="16.5" fill="#f4f4f4">MAP</text><text x="587" y="379.4" dy="0.36em" text-anchor="middle" font-size="20.5" fill="#f8f8f8">50.3</text><circle cx="587.3" cy="352" r="7.5" fill="#a2a2a2" stroke="#2a2a2a" stroke-width="1.2"/><polygon points="648.9,327.1 578.7,361.4 574.6,351.2" fill="none" stroke="rgba(235,240,250,0.8)" stroke-width="1"/><polygon points="575.9,284.2 594.6,362.4 588.0,355.9" fill="#e81420"/><polygon points="575.9,284.2 588.0,355.9 583.8,364.3" fill="#f02432"/><polygon points="588.0,355.9 594.6,362.4 583.8,364.3" fill="#ff5a62"/><ellipse cx="803.5" cy="271" rx="150.5" ry="162.3" fill="url(#bzc)"/><ellipse cx="803.5" cy="271" rx="140.0" ry="151.8" fill="url(#fcc)"/><polygon points="940.0,237.4 941.3,244.5 942.3,251.7 943.0,258.9 943.4,266.2 943.4,273.4 943.2,280.7 942.6,287.9 933.9,286.8 934.5,280.1 934.7,273.3 934.7,266.5 934.3,259.7 933.7,252.9 932.7,246.2 931.4,239.5" fill="#ece08c"/><polygon points="942.6,287.9 941.6,295.6 940.2,303.3 938.5,310.9 936.4,318.4 933.9,325.7 931.1,332.9 928.0,340.0 924.5,346.8 920.7,353.5 916.6,359.9 912.2,366.1 907.5,372.1 902.5,377.7 896.3,371.1 901.0,365.8 905.4,360.2 909.5,354.4 913.4,348.4 917.0,342.1 920.2,335.7 923.2,329.1 925.8,322.3 928.1,315.4 930.1,308.4 931.7,301.3 933.0,294.1 933.9,286.8" fill="#dc1c44"/><path d="M694.7,364.6L701.7,358.5M685.6,350.9L693.3,345.7M678.1,336.1L686.2,331.9M672.1,320.6L680.6,317.4M667.8,304.4L676.6,302.2M664.3,271.0L673.3,271.0M665.2,254.2L674.1,255.3M667.8,237.6L676.6,239.8M672.1,221.4L680.6,224.6M678.1,205.9L686.2,210.1M694.7,177.4L701.7,183.5M705.1,164.8L711.4,171.7M716.7,153.6L722.3,161.2M729.4,143.9L734.2,152.1M743.1,135.7L747.0,144.5M772.5,124.6L774.5,134.1M787.9,121.8L788.9,131.5M803.5,120.9L803.5,130.6M819.1,121.8L818.1,131.5M834.5,124.6L832.5,134.1M863.9,135.7L860.0,144.5M877.6,143.9L872.8,152.1M890.3,153.6L884.7,161.2M901.9,164.8L895.6,171.7M912.3,177.4L905.3,183.5M928.9,205.9L920.8,210.1M934.9,221.4L926.4,224.6M939.2,237.6L930.4,239.8M941.8,254.2L932.9,255.3M942.7,271.0L933.7,271.0M939.2,304.4L930.4,302.2M934.9,320.6L926.4,317.4M928.9,336.1L920.8,331.9M921.4,350.9L913.7,345.7M912.3,364.6L905.3,358.5" stroke="#8c8c8c" stroke-width="1.3" fill="none"/><path d="M705.1,377.2L712.7,368.9M665.2,287.8L675.9,286.5M685.6,191.1L694.8,197.3M757.5,129.3L761.1,140.3M849.5,129.3L845.9,140.3M921.4,191.1L912.2,197.3M941.8,287.8L931.1,286.5M901.9,377.2L894.3,368.9" stroke="#fff" stroke-width="4.5" fill="none"/><text transform="translate(720.0,357.7) scale(1.14,1)" dy="0.36em" text-anchor="middle" font-size="18.5" fill="#f4f4f4">0</text><text transform="translate(685.6,284.0) scale(1.14,1)" dy="0.36em" text-anchor="middle" font-size="18.5" fill="#f4f4f4">1</text><text transform="translate(702.0,203.0) scale(1.14,1)" dy="0.36em" text-anchor="middle" font-size="18.5" fill="#f4f4f4">2</text><text transform="translate(763.4,151.4) scale(1.14,1)" dy="0.36em" text-anchor="middle" font-size="18.5" fill="#f4f4f4">3</text><text transform="translate(841.0,151.4) scale(1.14,1)" dy="0.36em" text-anchor="middle" font-size="18.5" fill="#f4f4f4">4</text><text transform="translate(902.3,202.6) scale(1.14,1)" dy="0.36em" text-anchor="middle" font-size="18.5" fill="#f4f4f4">5</text><text transform="translate(919.7,284.5) scale(1.14,1)" dy="0.36em" text-anchor="middle" font-size="18.5" fill="#f4f4f4">6</text><text transform="translate(886.6,357.7) scale(1.14,1)" dy="0.36em" text-anchor="middle" font-size="18.5" fill="#f4f4f4">7</text><text x="803" y="220" dy="0.36em" text-anchor="middle" font-size="22" fill="#f4f4f4">rpm</text><text x="801.5" y="391.7" dy="0.36em" text-anchor="middle" font-size="24" fill="#f4f4f4">RPM</text><text x="802" y="324.6" dy="0.36em" text-anchor="middle" font-size="45" fill="#f8f8f8">1,568</text><circle cx="802" cy="270.3" r="15" fill="#a2a2a2" stroke="#2a2a2a" stroke-width="1.2"/><polygon points="848.7,131.6 803.2,301.3 782.3,294.3" fill="none" stroke="rgba(235,240,250,0.8)" stroke-width="1"/><polygon points="671.5,231.6 832.9,268.0 809.7,272.6" fill="#f24452"/><polygon points="671.5,231.6 809.7,272.6 826.7,289.1" fill="#98101c"/><polygon points="809.7,272.6 832.9,268.0 826.7,289.1" fill="#ff1c2c"/><ellipse cx="1107.5" cy="271" rx="151" ry="162.3" fill="url(#bzd)"/><ellipse cx="1107.5" cy="271" rx="140.5" ry="151.8" fill="url(#fcd)"/><path d="M1003.1,370.7L1009.1,365.0M997.8,363.9L1004.1,358.6M992.9,356.8L999.5,351.9M988.4,349.4L995.2,344.9M980.7,333.9L987.9,330.3M977.4,325.7L984.9,322.6M974.7,317.4L982.3,314.7M972.4,308.9L980.1,306.7M969.1,291.6L977.1,290.4M968.3,282.8L976.2,282.1M967.9,273.9L975.9,273.8M967.9,265.1L975.9,265.4M969.5,247.5L977.4,248.9M971.1,238.8L978.9,240.7M973.1,230.2L980.8,232.6M975.5,221.8L983.1,224.6M981.8,205.5L989.0,209.2M985.6,197.6L992.6,201.8M989.9,190.1L996.6,194.7M994.5,182.8L1001.0,187.8M1004.9,169.1L1010.8,174.9M1010.7,162.8L1016.2,169.0M1016.8,156.8L1022.0,163.4M1023.2,151.3L1028.0,158.2M1036.9,141.5L1040.9,148.9M1044.1,137.2L1047.7,144.9M1051.5,133.5L1054.7,141.3M1059.2,130.2L1061.9,138.2M1074.9,125.0L1076.8,133.4M1082.9,123.2L1084.4,131.7M1091.1,121.9L1092.0,130.5M1099.3,121.1L1099.7,129.7M1115.7,121.1L1115.3,129.7M1123.9,121.9L1123.0,130.5M1132.1,123.2L1130.6,131.7M1140.1,125.0L1138.2,133.4M1155.8,130.2L1153.1,138.2M1163.5,133.5L1160.3,141.3M1170.9,137.2L1167.3,144.9M1178.1,141.5L1174.1,148.9M1191.8,151.3L1187.0,158.2M1198.2,156.8L1193.0,163.4M1204.3,162.8L1198.8,169.0M1210.1,169.1L1204.2,174.9M1220.5,182.8L1214.0,187.8M1225.1,190.1L1218.4,194.7M1229.4,197.6L1222.4,201.8M1233.2,205.5L1226.0,209.2M1239.5,221.8L1231.9,224.6M1241.9,230.2L1234.2,232.6M1243.9,238.8L1236.1,240.7M1245.5,247.5L1237.6,248.9M1247.1,265.1L1239.1,265.4M1247.1,273.9L1239.1,273.8M1246.7,282.8L1238.8,282.1M1245.9,291.6L1237.9,290.4M1242.6,308.9L1234.9,306.7M1240.3,317.4L1232.7,314.7M1237.6,325.7L1230.1,322.6M1234.3,333.9L1227.1,330.3M1226.6,349.4L1219.8,344.9M1222.1,356.8L1215.5,351.9M1217.2,363.9L1210.9,358.6M1211.9,370.7L1205.9,365.0" stroke="#a8a8a8" stroke-width="2" fill="none"/><path d="M1008.7,377.2L1016.4,368.9M984.3,341.8L993.9,336.3M970.5,300.3L981.2,298.0M968.5,256.3L979.3,257.4M978.5,213.5L988.5,218.0M999.5,175.8L1007.9,183.2M1029.9,146.2L1035.9,155.9M1067.0,127.3L1070.1,138.5M1107.5,120.9L1107.5,132.6M1148.0,127.3L1144.9,138.5M1185.1,146.2L1179.1,155.9M1215.5,175.8L1207.1,183.2M1236.5,213.5L1226.5,218.0M1246.5,256.3L1235.7,257.4M1244.5,300.3L1233.8,298.0M1230.7,341.8L1221.1,336.3M1206.3,377.2L1198.6,368.9" stroke="#fff" stroke-width="4.5" fill="none"/><text transform="translate(1022.2,357.7) scale(1.14,1)" dy="0.36em" text-anchor="middle" font-size="17.3" fill="#f4f4f4">0</text><text transform="translate(1006.3,328.1) scale(1.14,1)" dy="0.36em" text-anchor="middle" font-size="17.3" fill="#f4f4f4">10</text><text transform="translate(995.1,294.5) scale(1.14,1)" dy="0.36em" text-anchor="middle" font-size="17.3" fill="#f4f4f4">20</text><text transform="translate(992.8,259.8) scale(1.14,1)" dy="0.36em" text-anchor="middle" font-size="17.3" fill="#f4f4f4">30</text><text transform="translate(1001.4,222.0) scale(1.14,1)" dy="0.36em" text-anchor="middle" font-size="17.3" fill="#f4f4f4">40</text><text transform="translate(1017.8,190.3) scale(1.14,1)" dy="0.36em" text-anchor="middle" font-size="17.3" fill="#f4f4f4">50</text><text transform="translate(1042.6,167.6) scale(1.14,1)" dy="0.36em" text-anchor="middle" font-size="17.3" fill="#f4f4f4">60</text><text transform="translate(1072.3,150.5) scale(1.14,1)" dy="0.36em" text-anchor="middle" font-size="17.3" fill="#f4f4f4">70</text><text transform="translate(1104.7,145.1) scale(1.14,1)" dy="0.36em" text-anchor="middle" font-size="17.3" fill="#f4f4f4">80</text><text transform="translate(1136.4,150.5) scale(1.14,1)" dy="0.36em" text-anchor="middle" font-size="17.3" fill="#f4f4f4">90</text><text transform="translate(1164.9,167.1) scale(1.14,1)" dy="0.36em" text-anchor="middle" font-size="17.3" fill="#f4f4f4">100</text><text transform="translate(1186.6,190.3) scale(1.14,1)" dy="0.36em" text-anchor="middle" font-size="17.3" fill="#f4f4f4">110</text><text transform="translate(1203.1,222.0) scale(1.14,1)" dy="0.36em" text-anchor="middle" font-size="17.3" fill="#f4f4f4">120</text><text transform="translate(1210.5,258.6) scale(1.14,1)" dy="0.36em" text-anchor="middle" font-size="17.3" fill="#f4f4f4">130</text><text transform="translate(1209.3,294.5) scale(1.14,1)" dy="0.36em" text-anchor="middle" font-size="17.3" fill="#f4f4f4">140</text><text transform="translate(1197.7,328.1) scale(1.14,1)" dy="0.36em" text-anchor="middle" font-size="17.3" fill="#f4f4f4">150</text><text transform="translate(1179.2,357.7) scale(1.14,1)" dy="0.36em" text-anchor="middle" font-size="17.3" fill="#f4f4f4">160</text><text x="1106.5" y="220" dy="0.36em" text-anchor="middle" font-size="22" fill="#f4f4f4">mph</text><text x="1103.5" y="391.7" dy="0.36em" text-anchor="middle" font-size="24" fill="#f4f4f4">Speed</text><text x="1104.5" y="324.6" dy="0.36em" text-anchor="middle" font-size="45" fill="#f8f8f8">32</text><circle cx="1105.8" cy="270.3" r="15" fill="#a2a2a2" stroke="#2a2a2a" stroke-width="1.2"/><polygon points="1077.4,126.9 1122.2,296.6 1100.6,300.9" fill="none" stroke="rgba(235,240,250,0.8)" stroke-width="1"/><polygon points="971.8,247.9 1136.2,264.2 1113.7,271.6" fill="#f24452"/><polygon points="971.8,247.9 1113.7,271.6 1132.6,285.9" fill="#98101c"/><polygon points="1113.7,271.6 1136.2,264.2 1132.6,285.9" fill="#ff1c2c"/><ellipse cx="1320.5" cy="190.5" rx="75.2" ry="81" fill="url(#bze)"/><ellipse cx="1320.5" cy="190.5" rx="65.2" ry="71" fill="url(#fce)"/><polygon points="1383.6,204.0 1383.0,206.8 1382.3,209.6 1381.5,212.3 1380.6,215.0 1376.8,213.4 1377.6,210.9 1378.3,208.3 1379.0,205.8 1379.5,203.1" fill="#ece08c"/><polygon points="1380.6,215.0 1379.5,218.0 1378.2,221.0 1376.8,223.9 1375.3,226.7 1373.7,229.4 1371.9,232.1 1370.0,234.6 1368.1,237.1 1366.0,239.5 1363.0,236.3 1365.0,234.1 1366.9,231.8 1368.6,229.4 1370.3,226.9 1371.8,224.4 1373.2,221.7 1374.5,219.0 1375.7,216.2 1376.8,213.4" fill="#dc1c44"/><path d="M1270.0,233.4L1273.7,230.2M1265.7,226.7L1269.7,224.0M1262.1,219.5L1266.4,217.4M1259.4,211.9L1263.9,210.3M1256.4,195.9L1261.1,195.5M1256.3,187.8L1261.0,188.0M1257.0,179.7L1261.7,180.5M1258.6,171.7L1263.2,173.1M1264.4,156.7L1268.5,159.2M1268.5,149.8L1272.3,152.8M1273.3,143.5L1276.8,147.0M1278.7,137.8L1281.8,141.7M1291.3,128.8L1293.5,133.3M1298.2,125.5L1299.9,130.3M1305.5,123.2L1306.6,128.1M1312.9,121.7L1313.5,126.8M1328.1,121.7L1327.5,126.8M1335.5,123.2L1334.4,128.1M1342.8,125.5L1341.1,130.3M1349.7,128.8L1347.5,133.3M1362.3,137.8L1359.2,141.7M1367.7,143.5L1364.2,147.0M1372.5,149.8L1368.7,152.8M1376.6,156.7L1372.5,159.2M1382.4,171.7L1377.8,173.1M1384.0,179.7L1379.3,180.5M1384.7,187.8L1380.0,188.0M1384.6,195.9L1379.9,195.5M1381.6,211.9L1377.1,210.3M1378.9,219.5L1374.6,217.4M1375.3,226.7L1371.3,224.0M1371.0,233.4L1367.3,230.2" stroke="#a8a8a8" stroke-width="1.3" fill="none"/><path d="M1275.0,239.5L1278.7,235.5M1257.4,204.0L1262.5,202.9M1261.1,164.0L1265.9,166.1M1284.8,132.9L1287.7,137.6M1320.5,121.2L1320.5,126.8M1356.2,132.9L1353.3,137.6M1379.9,164.0L1375.1,166.1M1383.6,204.0L1378.5,202.9M1366.0,239.5L1362.3,235.5" stroke="#fff" stroke-width="2.3" fill="none"/><text x="1283.2" y="228.2" dy="0.36em" text-anchor="middle" font-size="9.5" fill="#f4f4f4" letter-spacing="-0.4">50</text><text x="1269.8" y="199.2" dy="0.36em" text-anchor="middle" font-size="9.5" fill="#f4f4f4" letter-spacing="-0.4">75</text><text x="1274.8" y="166.5" dy="0.36em" text-anchor="middle" font-size="9.5" fill="#f4f4f4" letter-spacing="-0.4">100</text><text x="1292.5" y="140.3" dy="0.36em" text-anchor="middle" font-size="9.5" fill="#f4f4f4" letter-spacing="-0.4">125</text><text x="1318.5" y="132.0" dy="0.36em" text-anchor="middle" font-size="9.5" fill="#f4f4f4" letter-spacing="-0.4">150</text><text x="1344.9" y="140.3" dy="0.36em" text-anchor="middle" font-size="9.5" fill="#f4f4f4" letter-spacing="-0.4">175</text><text x="1362.0" y="166.5" dy="0.36em" text-anchor="middle" font-size="9.5" fill="#f4f4f4" letter-spacing="-0.4">200</text><text x="1364.4" y="199.2" dy="0.36em" text-anchor="middle" font-size="9.5" fill="#f4f4f4" letter-spacing="-0.4">225</text><text x="1351.5" y="228.2" dy="0.36em" text-anchor="middle" font-size="9.5" fill="#f4f4f4" letter-spacing="-0.4">250</text><text x="1319.6" y="164.4" dy="0.36em" text-anchor="middle" font-size="15.5" fill="#f4f4f4">°F</text><text x="1319.3" y="245.4" dy="0.36em" text-anchor="middle" font-size="16.5" fill="#f4f4f4">ECT</text><text x="1318.1" y="216.2" dy="0.36em" text-anchor="middle" font-size="20.5" fill="#f8f8f8">190</text><circle cx="1318.3" cy="188.8" r="7.5" fill="#a2a2a2" stroke="#2a2a2a" stroke-width="1.2"/><polygon points="1376.7,159.4 1310.5,198.9 1305.6,189.1" fill="none" stroke="rgba(235,240,250,0.8)" stroke-width="1"/><polygon points="1371.6,150.5 1305.8,191.0 1315.1,191.1" fill="#e81420"/><polygon points="1371.6,150.5 1315.1,191.1 1312.2,200.0" fill="#f02432"/><polygon points="1315.1,191.1 1305.8,191.0 1312.2,200.0" fill="#ff5a62"/><ellipse cx="1320.5" cy="352.3" rx="75.2" ry="80.8" fill="url(#bzf)"/><ellipse cx="1320.5" cy="352.3" rx="65.2" ry="70.8" fill="url(#fcf)"/><polygon points="1345.1,288.5 1348.0,289.8 1350.8,291.4 1353.6,293.0 1356.2,294.9 1358.8,296.8 1361.3,298.9 1363.7,301.1 1366.0,303.5 1363.0,306.6 1360.9,304.4 1358.7,302.3 1356.3,300.4 1353.9,298.6 1351.4,296.9 1348.9,295.3 1346.2,293.9 1343.5,292.6" fill="#e8d47c"/><path d="M1271.6,397.2L1275.2,393.9M1268.5,392.9L1272.3,389.9M1265.7,388.4L1269.7,385.7M1263.2,383.7L1267.4,381.4M1259.4,373.6L1263.9,372.1M1258.0,368.4L1262.6,367.2M1257.0,363.1L1261.7,362.3M1256.4,357.7L1261.1,357.3M1256.4,346.9L1261.1,347.3M1257.0,341.5L1261.7,342.3M1258.0,336.2L1262.6,337.4M1259.4,331.0L1263.9,332.5M1263.2,320.9L1267.4,323.2M1265.7,316.2L1269.7,318.9M1268.5,311.7L1272.3,314.7M1271.6,307.4L1275.2,310.7M1278.7,299.8L1281.8,303.6M1282.7,296.4L1285.5,300.5M1286.9,293.4L1289.4,297.7M1291.3,290.7L1293.5,295.3M1300.6,286.6L1302.1,291.4M1305.5,285.1L1306.6,290.1M1310.4,284.1L1311.2,289.1M1315.5,283.4L1315.8,288.5M1325.5,283.4L1325.2,288.5M1330.6,284.1L1329.8,289.1M1335.5,285.1L1334.4,290.1M1340.4,286.6L1338.9,291.4M1349.7,290.7L1347.5,295.3M1354.1,293.4L1351.6,297.7M1358.3,296.4L1355.5,300.5M1362.3,299.8L1359.2,303.6M1369.4,307.4L1365.8,310.7M1372.5,311.7L1368.7,314.7M1375.3,316.2L1371.3,318.9M1377.8,320.9L1373.6,323.2M1381.6,331.0L1377.1,332.5M1383.0,336.2L1378.4,337.4M1384.0,341.5L1379.3,342.3M1384.6,346.9L1379.9,347.3M1384.6,357.7L1379.9,357.3M1384.0,363.1L1379.3,362.3M1383.0,368.4L1378.4,367.2M1381.6,373.6L1377.1,372.1M1377.8,383.7L1373.6,381.4M1375.3,388.4L1371.3,385.7M1372.5,392.9L1368.7,389.9M1369.4,397.2L1365.8,393.9" stroke="#f0a0b0" stroke-width="1.4" fill="none"/><path d="M1275.0,401.1L1278.7,397.2M1261.1,378.7L1265.9,376.6M1256.2,352.3L1261.4,352.3M1261.1,325.9L1265.9,328.0M1275.0,303.5L1278.7,307.4M1295.9,288.5L1297.9,293.6M1320.5,283.2L1320.5,288.8M1345.1,288.5L1343.1,293.6M1366.0,303.5L1362.3,307.4M1379.9,325.9L1375.1,328.0M1384.8,352.3L1379.6,352.3M1379.9,378.7L1375.1,376.6M1366.0,401.1L1362.3,397.2" stroke="#fff" stroke-width="2.3" fill="none"/><text x="1283.2" y="390.4" dy="0.36em" text-anchor="middle" font-size="9.5" fill="#f4f4f4" letter-spacing="-0.4">30</text><text x="1273.1" y="371.3" dy="0.36em" text-anchor="middle" font-size="9.5" fill="#f4f4f4" letter-spacing="-0.4">40</text><text x="1269.2" y="350.6" dy="0.36em" text-anchor="middle" font-size="9.5" fill="#f4f4f4" letter-spacing="-0.4">50</text><text x="1273.1" y="329.4" dy="0.36em" text-anchor="middle" font-size="9.5" fill="#f4f4f4" letter-spacing="-0.4">60</text><text x="1283.5" y="310.7" dy="0.36em" text-anchor="middle" font-size="9.5" fill="#f4f4f4" letter-spacing="-0.4">70</text><text x="1299.3" y="297.8" dy="0.36em" text-anchor="middle" font-size="9.5" fill="#f4f4f4" letter-spacing="-0.4">80</text><text x="1318.1" y="294.6" dy="0.36em" text-anchor="middle" font-size="9.5" fill="#f4f4f4" letter-spacing="-0.4">90</text><text x="1337.2" y="297.8" dy="0.36em" text-anchor="middle" font-size="9.5" fill="#f4f4f4" letter-spacing="-0.4">100</text><text x="1351.7" y="310.7" dy="0.36em" text-anchor="middle" font-size="9.5" fill="#f4f4f4" letter-spacing="-0.4">110</text><text x="1362.0" y="329.4" dy="0.36em" text-anchor="middle" font-size="9.5" fill="#f4f4f4" letter-spacing="-0.4">120</text><text x="1365.8" y="350.6" dy="0.36em" text-anchor="middle" font-size="9.5" fill="#f4f4f4" letter-spacing="-0.4">130</text><text x="1362.0" y="371.3" dy="0.36em" text-anchor="middle" font-size="9.5" fill="#f4f4f4" letter-spacing="-0.4">140</text><text x="1351.7" y="390.4" dy="0.36em" text-anchor="middle" font-size="9.5" fill="#f4f4f4" letter-spacing="-0.4">150</text><text x="1319.6" y="327" dy="0.36em" text-anchor="middle" font-size="15.5" fill="#f4f4f4">°F</text><text x="1319.3" y="408" dy="0.36em" text-anchor="middle" font-size="16.5" fill="#f4f4f4">IAT</text><text x="1318.1" y="379.4" dy="0.36em" text-anchor="middle" font-size="20.5" fill="#f8f8f8">113</text><circle cx="1318.3" cy="352" r="7.5" fill="#a2a2a2" stroke="#2a2a2a" stroke-width="1.2"/><polygon points="1384.9,359.1 1306.3,356.2 1307.4,345.3" fill="none" stroke="rgba(235,240,250,0.8)" stroke-width="1"/><polygon points="1371.3,309.3 1305.9,354.9 1315.2,354.5" fill="#e81420"/><polygon points="1371.3,309.3 1315.2,354.5 1312.8,363.5" fill="#f02432"/><polygon points="1315.2,354.5 1305.9,354.9 1312.8,363.5" fill="#ff5a62"/></svg>
<svg width="2305" height="1468" font-family="Liberation Sans, sans-serif"><defs>
<linearGradient id="frm" x1="0" y1="0" x2="1" y2="1"><stop offset="0" stop-color="#f6f6f6"/><stop offset="1" stop-color="#dcdcdc"/></linearGradient>
<linearGradient id="barv" x1="0" y1="0" x2="0" y2="1"><stop offset="0" stop-color="#020c14"/><stop offset="0.08" stop-color="#041a2c"/><stop offset="0.25" stop-color="#0a3a70"/><stop offset="0.4" stop-color="#1058b0"/><stop offset="0.5" stop-color="#1a7cf0"/><stop offset="0.6" stop-color="#1058b0"/><stop offset="0.75" stop-color="#0a3a70"/><stop offset="0.92" stop-color="#041a2c"/><stop offset="1" stop-color="#020c14"/></linearGradient>
<linearGradient id="barh" x1="0" y1="0" x2="1" y2="0"><stop offset="0" stop-color="#000814" stop-opacity="0.75"/><stop offset="0.22" stop-color="#000814" stop-opacity="0.25"/><stop offset="0.5" stop-color="#000814" stop-opacity="0"/><stop offset="0.78" stop-color="#000814" stop-opacity="0.25"/><stop offset="1" stop-color="#000814" stop-opacity="0.75"/></linearGradient>
<linearGradient id="grn" x1="0" y1="0" x2="0" y2="1"><stop offset="0" stop-color="#1fbc3a"/><stop offset="0.5" stop-color="#27d646"/><stop offset="1" stop-color="#1fbc3a"/></linearGradient>
<linearGradient id="grnh" x1="0" y1="0" x2="1" y2="0"><stop offset="0" stop-color="#0a7020" stop-opacity="0.35"/><stop offset="0.3" stop-color="#0a7020" stop-opacity="0"/><stop offset="0.7" stop-color="#0a7020" stop-opacity="0"/><stop offset="1" stop-color="#0a7020" stop-opacity="0.35"/></linearGradient>
<clipPath id="clpA"><rect x="1170" y="460" width="25.5" height="260"/></clipPath>
<clipPath id="clpB"><rect x="1305" y="460" width="26" height="260"/></clipPath>
</defs><rect x="526.6" y="470.2" width="54.2" height="237.8" fill="url(#frm)"/><rect x="527.1" y="470.7" width="53.2" height="236.8" fill="none" stroke="#fff" stroke-width="1"/><rect x="531.2" y="474.2" width="45.0" height="230.00000000000006" fill="url(#barv)"/><rect x="531.2" y="474.2" width="45.0" height="230.00000000000006" fill="url(#barh)"/><rect x="530.6" y="473.59999999999997" width="46.2" height="231.20000000000005" fill="none" stroke="#8c8c8c" stroke-width="1.2"/><rect x="579.2" y="475.3" width="2.6" height="206.7" rx="1" fill="#e0204c"/><text x="530.5" y="466.3" font-size="17.2" fill="#f4f4f4" letter-spacing="-0.5">KR</text><rect x="580.8000000000001" y="479.2" width="3.2" height="1.2" fill="#e8e8e8"/><text x="585" y="482.2" font-size="14.3" fill="#f0f0f0" letter-spacing="-0.3">10</text><rect x="580.8000000000001" y="523.34" width="3.2" height="1.2" fill="#e8e8e8"/><text x="585" y="526.34" font-size="14.3" fill="#f0f0f0" letter-spacing="-0.3">8</text><rect x="580.8000000000001" y="567.48" width="3.2" height="1.2" fill="#e8e8e8"/><text x="585" y="570.48" font-size="14.3" fill="#f0f0f0" letter-spacing="-0.3">6</text><rect x="580.8000000000001" y="611.6200000000001" width="3.2" height="1.2" fill="#e8e8e8"/><text x="585" y="614.6200000000001" font-size="14.3" fill="#f0f0f0" letter-spacing="-0.3">4</text><rect x="580.8000000000001" y="655.7600000000001" width="3.2" height="1.2" fill="#e8e8e8"/><text x="585" y="658.7600000000001" font-size="14.3" fill="#f0f0f0" letter-spacing="-0.3">2</text><rect x="580.8000000000001" y="699.9000000000001" width="3.2" height="1.2" fill="#e8e8e8"/><text x="585" y="702.9000000000001" font-size="14.3" fill="#f0f0f0" letter-spacing="-0.3">0</text><rect x="599.5" y="470.2" width="54.2" height="237.8" fill="url(#frm)"/><rect x="600.0" y="470.7" width="53.2" height="236.8" fill="none" stroke="#fff" stroke-width="1"/><rect x="604.1" y="474.2" width="45.0" height="230.00000000000006" fill="url(#barv)"/><rect x="604.1" y="474.2" width="45.0" height="230.00000000000006" fill="url(#barh)"/><rect x="604.1" y="509.6" width="45.0" height="194.60000000000002" fill="url(#grn)"/><rect x="604.1" y="509.6" width="45.0" height="194.60000000000002" fill="url(#grnh)"/><rect x="604.1" y="509.6" width="45.0" height="2.2" fill="#d4ffd8"/><rect x="603.5" y="473.59999999999997" width="46.2" height="231.20000000000005" fill="none" stroke="#8c8c8c" stroke-width="1.2"/><text x="603.5" y="466.3" font-size="17.2" fill="#f4f4f4" letter-spacing="-0.5">Advance</text><rect x="653.7" y="479.2" width="3.2" height="1.2" fill="#e8e8e8"/><text x="657.7" y="482.2" font-size="14.3" fill="#f0f0f0" letter-spacing="-0.3">45</text><rect x="653.7" y="552.7666666666668" width="3.2" height="1.2" fill="#e8e8e8"/><text x="657.7" y="555.7666666666668" font-size="14.3" fill="#f0f0f0" letter-spacing="-0.3">30</text><rect x="653.7" y="626.3333333333334" width="3.2" height="1.2" fill="#e8e8e8"/><text x="657.7" y="629.3333333333334" font-size="14.3" fill="#f0f0f0" letter-spacing="-0.3">15</text><rect x="653.7" y="699.9000000000001" width="3.2" height="1.2" fill="#e8e8e8"/><text x="657.7" y="702.9000000000001" font-size="14.3" fill="#f0f0f0" letter-spacing="-0.3">0</text><text x="657" y="726.6" text-anchor="end" font-size="20.2" fill="#f4f4f4" letter-spacing="-0.3">38</text><rect x="681.8" y="470.2" width="54.2" height="237.8" fill="url(#frm)"/><rect x="682.3" y="470.7" width="53.2" height="236.8" fill="none" stroke="#fff" stroke-width="1"/><rect x="686.4" y="474.2" width="45.0" height="230.00000000000006" fill="url(#barv)"/><rect x="686.4" y="474.2" width="45.0" height="230.00000000000006" fill="url(#barh)"/><rect x="686.4" y="678.5" width="45.0" height="25.700000000000045" fill="url(#grn)"/><rect x="686.4" y="678.5" width="45.0" height="25.700000000000045" fill="url(#grnh)"/><rect x="686.4" y="678.5" width="45.0" height="2.2" fill="#d4ffd8"/><rect x="685.8" y="473.59999999999997" width="46.2" height="231.20000000000005" fill="none" stroke="#8c8c8c" stroke-width="1.2"/><text x="687.5" y="466.3" font-size="17.2" fill="#f4f4f4" letter-spacing="-0.5">TPS</text><rect x="736.0" y="479.2" width="3.2" height="1.2" fill="#e8e8e8"/><text x="739.8" y="482.2" font-size="14.3" fill="#f0f0f0" letter-spacing="-0.3">100</text><rect x="736.0" y="523.34" width="3.2" height="1.2" fill="#e8e8e8"/><text x="739.8" y="526.34" font-size="14.3" fill="#f0f0f0" letter-spacing="-0.3">80</text><rect x="736.0" y="567.48" width="3.2" height="1.2" fill="#e8e8e8"/><text x="739.8" y="570.48" font-size="14.3" fill="#f0f0f0" letter-spacing="-0.3">60</text><rect x="736.0" y="611.6200000000001" width="3.2" height="1.2" fill="#e8e8e8"/><text x="739.8" y="614.6200000000001" font-size="14.3" fill="#f0f0f0" letter-spacing="-0.3">40</text><rect x="736.0" y="655.7600000000001" width="3.2" height="1.2" fill="#e8e8e8"/><text x="739.8" y="658.7600000000001" font-size="14.3" fill="#f0f0f0" letter-spacing="-0.3">20</text><rect x="736.0" y="699.9000000000001" width="3.2" height="1.2" fill="#e8e8e8"/><text x="739.8" y="702.9000000000001" font-size="14.3" fill="#f0f0f0" letter-spacing="-0.3">0</text><text x="738" y="726.6" text-anchor="end" font-size="20.2" fill="#f4f4f4" letter-spacing="-0.3">11</text><rect x="808.2" y="470.2" width="54.2" height="237.8" fill="url(#frm)"/><rect x="808.7" y="470.7" width="53.2" height="236.8" fill="none" stroke="#fff" stroke-width="1"/><rect x="812.8000000000001" y="474.2" width="45.0" height="230.00000000000006" fill="url(#barv)"/><rect x="812.8000000000001" y="474.2" width="45.0" height="230.00000000000006" fill="url(#barh)"/><rect x="812.8000000000001" y="639.5" width="45.0" height="64.70000000000005" fill="url(#grn)"/><rect x="812.8000000000001" y="639.5" width="45.0" height="64.70000000000005" fill="url(#grnh)"/><rect x="812.8000000000001" y="639.5" width="45.0" height="2.2" fill="#d4ffd8"/><rect x="812.8000000000001" y="557.6999999999999" width="45.0" height="1.4" fill="#c8ccd4"/><rect x="812.2" y="473.59999999999997" width="46.2" height="231.20000000000005" fill="none" stroke="#8c8c8c" stroke-width="1.2"/><text x="812.5" y="466.3" font-size="17.2" fill="#f4f4f4" letter-spacing="-0.5">INJ B1</text><rect x="862.4000000000001" y="479.2" width="3.2" height="1.2" fill="#e8e8e8"/><text x="866.5" y="482.2" font-size="14.3" fill="#f0f0f0" letter-spacing="-0.3">25</text><rect x="862.4000000000001" y="523.34" width="3.2" height="1.2" fill="#e8e8e8"/><text x="866.5" y="526.34" font-size="14.3" fill="#f0f0f0" letter-spacing="-0.3">20</text><rect x="862.4000000000001" y="567.48" width="3.2" height="1.2" fill="#e8e8e8"/><text x="866.5" y="570.48" font-size="14.3" fill="#f0f0f0" letter-spacing="-0.3">15</text><rect x="862.4000000000001" y="611.6200000000001" width="3.2" height="1.2" fill="#e8e8e8"/><text x="866.5" y="614.6200000000001" font-size="14.3" fill="#f0f0f0" letter-spacing="-0.3">10</text><rect x="862.4000000000001" y="655.7600000000001" width="3.2" height="1.2" fill="#e8e8e8"/><text x="866.5" y="658.7600000000001" font-size="14.3" fill="#f0f0f0" letter-spacing="-0.3">5</text><rect x="862.4000000000001" y="699.9000000000001" width="3.2" height="1.2" fill="#e8e8e8"/><text x="866.5" y="702.9000000000001" font-size="14.3" fill="#f0f0f0" letter-spacing="-0.3">0</text><text x="864.6" y="726.6" text-anchor="end" font-size="20.2" fill="#f4f4f4" letter-spacing="-0.3">6.9</text><rect x="884.6" y="470.2" width="54.2" height="237.8" fill="url(#frm)"/><rect x="885.1" y="470.7" width="53.2" height="236.8" fill="none" stroke="#fff" stroke-width="1"/><rect x="889.2" y="474.2" width="45.0" height="230.00000000000006" fill="url(#barv)"/><rect x="889.2" y="474.2" width="45.0" height="230.00000000000006" fill="url(#barh)"/><rect x="889.2" y="520.6" width="45.0" height="183.60000000000002" fill="url(#grn)"/><rect x="889.2" y="520.6" width="45.0" height="183.60000000000002" fill="url(#grnh)"/><rect x="889.2" y="520.6" width="45.0" height="2.2" fill="#d4ffd8"/><rect x="889.2" y="495.8" width="45.0" height="1.4" fill="#c8ccd4"/><rect x="888.6" y="473.59999999999997" width="46.2" height="231.20000000000005" fill="none" stroke="#8c8c8c" stroke-width="1.2"/><text x="889" y="466.3" font-size="17.2" fill="#f4f4f4" letter-spacing="-0.5">O2 B1</text><rect x="938.8000000000001" y="479.2" width="3.2" height="1.2" fill="#e8e8e8"/><text x="943.4" y="482.2" font-size="14.3" fill="#f0f0f0" letter-spacing="-0.3">1</text><rect x="938.8000000000001" y="699.9000000000001" width="3.2" height="1.2" fill="#e8e8e8"/><text x="943.4" y="702.9000000000001" font-size="14.3" fill="#f0f0f0" letter-spacing="-0.3">0</text><text x="941.5" y="726.6" text-anchor="end" font-size="20.2" fill="#f4f4f4" letter-spacing="-0.3">794</text><rect x="954.2" y="470.2" width="54.2" height="237.8" fill="url(#frm)"/><rect x="954.7" y="470.7" width="53.2" height="236.8" fill="none" stroke="#fff" stroke-width="1"/><rect x="958.8000000000001" y="474.2" width="45.0" height="230.00000000000006" fill="url(#barv)"/><rect x="958.8000000000001" y="474.2" width="45.0" height="230.00000000000006" fill="url(#barh)"/><rect x="958.8000000000001" y="633.2" width="45.0" height="71.0" fill="url(#grn)"/><rect x="958.8000000000001" y="633.2" width="45.0" height="71.0" fill="url(#grnh)"/><rect x="958.8000000000001" y="633.2" width="45.0" height="2.2" fill="#d4ffd8"/><rect x="958.8000000000001" y="497.90000000000003" width="45.0" height="1.4" fill="#c8ccd4"/><rect x="958.2" y="473.59999999999997" width="46.2" height="231.20000000000005" fill="none" stroke="#8c8c8c" stroke-width="1.2"/><text x="959.3" y="466.3" font-size="17.2" fill="#f4f4f4" letter-spacing="-0.5">O2 B2</text><rect x="1008.4000000000001" y="479.2" width="3.2" height="1.2" fill="#e8e8e8"/><text x="1013.4" y="482.2" font-size="14.3" fill="#f0f0f0" letter-spacing="-0.3">1</text><rect x="1008.4000000000001" y="699.9000000000001" width="3.2" height="1.2" fill="#e8e8e8"/><text x="1013.4" y="702.9000000000001" font-size="14.3" fill="#f0f0f0" letter-spacing="-0.3">0</text><text x="1011.5" y="726.6" text-anchor="end" font-size="20.2" fill="#f4f4f4" letter-spacing="-0.3">307</text><rect x="1020.6" y="470.2" width="54.2" height="237.8" fill="url(#frm)"/><rect x="1021.1" y="470.7" width="53.2" height="236.8" fill="none" stroke="#fff" stroke-width="1"/><rect x="1025.2" y="474.2" width="45.0" height="230.00000000000006" fill="url(#barv)"/><rect x="1025.2" y="474.2" width="45.0" height="230.00000000000006" fill="url(#barh)"/><rect x="1025.2" y="638.4" width="45.0" height="65.80000000000007" fill="url(#grn)"/><rect x="1025.2" y="638.4" width="45.0" height="65.80000000000007" fill="url(#grnh)"/><rect x="1025.2" y="638.4" width="45.0" height="2.2" fill="#d4ffd8"/><rect x="1025.2" y="557.6999999999999" width="45.0" height="1.4" fill="#c8ccd4"/><rect x="1024.6000000000001" y="473.59999999999997" width="46.2" height="231.20000000000005" fill="none" stroke="#8c8c8c" stroke-width="1.2"/><text x="1025.8" y="466.3" font-size="17.2" fill="#f4f4f4" letter-spacing="-0.5">INJ B2</text><rect x="1074.8" y="479.2" width="3.2" height="1.2" fill="#e8e8e8"/><text x="1078.8" y="482.2" font-size="14.3" fill="#f0f0f0" letter-spacing="-0.3">25</text><rect x="1074.8" y="523.34" width="3.2" height="1.2" fill="#e8e8e8"/><text x="1078.8" y="526.34" font-size="14.3" fill="#f0f0f0" letter-spacing="-0.3">20</text><rect x="1074.8" y="567.48" width="3.2" height="1.2" fill="#e8e8e8"/><text x="1078.8" y="570.48" font-size="14.3" fill="#f0f0f0" letter-spacing="-0.3">15</text><rect x="1074.8" y="611.6200000000001" width="3.2" height="1.2" fill="#e8e8e8"/><text x="1078.8" y="614.6200000000001" font-size="14.3" fill="#f0f0f0" letter-spacing="-0.3">10</text><rect x="1074.8" y="655.7600000000001" width="3.2" height="1.2" fill="#e8e8e8"/><text x="1078.8" y="658.7600000000001" font-size="14.3" fill="#f0f0f0" letter-spacing="-0.3">5</text><rect x="1074.8" y="699.9000000000001" width="3.2" height="1.2" fill="#e8e8e8"/><text x="1078.8" y="702.9000000000001" font-size="14.3" fill="#f0f0f0" letter-spacing="-0.3">0</text><text x="1076" y="726.6" text-anchor="end" font-size="20.2" fill="#f4f4f4" letter-spacing="-0.3">7.1</text><rect x="1118.6" y="470.2" width="54.2" height="237.8" fill="url(#frm)"/><rect x="1119.1" y="470.7" width="53.2" height="236.8" fill="none" stroke="#fff" stroke-width="1"/><rect x="1123.1999999999998" y="474.2" width="45.0" height="230.00000000000006" fill="url(#barv)"/><rect x="1123.1999999999998" y="474.2" width="45.0" height="230.00000000000006" fill="url(#barh)"/><rect x="1123.1999999999998" y="588.8" width="45.0" height="1.5" fill="url(#grn)"/><rect x="1123.1999999999998" y="588.8" width="45.0" height="1.5" fill="url(#grnh)"/><rect x="1123.1999999999998" y="502.7" width="45.0" height="1.4" fill="#c8ccd4"/><rect x="1123.1999999999998" y="590.5999999999999" width="45.0" height="1.4" fill="#c8ccd4"/><rect x="1123.1999999999998" y="605.5" width="45.0" height="1.4" fill="#c8ccd4"/><rect x="1122.6" y="473.59999999999997" width="46.2" height="231.20000000000005" fill="none" stroke="#8c8c8c" stroke-width="1.2"/><rect x="1171.2" y="475" width="2.6" height="46" rx="1" fill="#e0204c"/><rect x="1171.2" y="658" width="2.6" height="47" rx="1" fill="#e0204c"/><text x="1123.5" y="466.3" font-size="17.2" fill="#f4f4f4" letter-spacing="-0.5">LT B1</text><g clip-path="url(#clpA)"><rect x="1172.8" y="479.2" width="3.2" height="1.2" fill="#e8e8e8"/><text x="1176.5" y="482.2" font-size="14.3" fill="#f0f0f0" letter-spacing="-0.3">25.</text><rect x="1172.8" y="533.7" width="3.2" height="1.2" fill="#e8e8e8"/><text x="1176.5" y="536.7" font-size="14.3" fill="#f0f0f0" letter-spacing="-0.3">12.</text><rect x="1172.8" y="590.4000000000001" width="3.2" height="1.2" fill="#e8e8e8"/><text x="1176.5" y="593.4000000000001" font-size="14.3" fill="#f0f0f0" letter-spacing="-0.3">0.0</text><rect x="1172.8" y="645.9000000000001" width="3.2" height="1.2" fill="#e8e8e8"/><text x="1176.5" y="648.9000000000001" font-size="14.3" fill="#f0f0f0" letter-spacing="-0.3">-12</text><rect x="1172.8" y="700.5" width="3.2" height="1.2" fill="#e8e8e8"/><text x="1176.5" y="703.5" font-size="14.3" fill="#f0f0f0" letter-spacing="-0.3">-25</text></g><text x="1173.5" y="726.6" text-anchor="end" font-size="20.2" fill="#f4f4f4" letter-spacing="-0.3">-0.4</text><rect x="1254.7" y="470.2" width="54.2" height="237.8" fill="url(#frm)"/><rect x="1255.2" y="470.7" width="53.2" height="236.8" fill="none" stroke="#fff" stroke-width="1"/><rect x="1259.3" y="474.2" width="45.0" height="230.00000000000006" fill="url(#barv)"/><rect x="1259.3" y="474.2" width="45.0" height="230.00000000000006" fill="url(#barh)"/><rect x="1259.3" y="578.8" width="45.0" height="10.0" fill="url(#grn)"/><rect x="1259.3" y="578.8" width="45.0" height="10.0" fill="url(#grnh)"/><rect x="1259.3" y="578.8" width="45.0" height="2.2" fill="#d4ffd8"/><rect x="1259.3" y="566.0" width="45.0" height="1.4" fill="#c8ccd4"/><rect x="1259.3" y="615.5" width="45.0" height="1.4" fill="#c8ccd4"/><rect x="1258.7" y="473.59999999999997" width="46.2" height="231.20000000000005" fill="none" stroke="#8c8c8c" stroke-width="1.2"/><text x="1259" y="466.3" font-size="17.2" fill="#f4f4f4" letter-spacing="-0.5">ST B2</text><g clip-path="url(#clpB)"><rect x="1308.9" y="479.2" width="3.2" height="1.2" fill="#e8e8e8"/><text x="1312.6" y="482.2" font-size="14.3" fill="#f0f0f0" letter-spacing="-0.3">25.</text><rect x="1308.9" y="533.7" width="3.2" height="1.2" fill="#e8e8e8"/><text x="1312.6" y="536.7" font-size="14.3" fill="#f0f0f0" letter-spacing="-0.3">12.</text><rect x="1308.9" y="590.4000000000001" width="3.2" height="1.2" fill="#e8e8e8"/><text x="1312.6" y="593.4000000000001" font-size="14.3" fill="#f0f0f0" letter-spacing="-0.3">0.0</text><rect x="1308.9" y="645.9000000000001" width="3.2" height="1.2" fill="#e8e8e8"/><text x="1312.6" y="648.9000000000001" font-size="14.3" fill="#f0f0f0" letter-spacing="-0.3">-12</text><rect x="1308.9" y="700.5" width="3.2" height="1.2" fill="#e8e8e8"/><text x="1312.6" y="703.5" font-size="14.3" fill="#f0f0f0" letter-spacing="-0.3">-25</text></g><text x="1310.8" y="726.6" text-anchor="end" font-size="20.2" fill="#f4f4f4" letter-spacing="-0.3">2.2</text><rect x="1195.1" y="470.2" width="54.2" height="237.8" fill="url(#frm)"/><rect x="1195.6" y="470.7" width="53.2" height="236.8" fill="none" stroke="#fff" stroke-width="1"/><rect x="1199.6999999999998" y="474.2" width="45.0" height="230.00000000000006" fill="url(#barv)"/><rect x="1199.6999999999998" y="474.2" width="45.0" height="230.00000000000006" fill="url(#barh)"/><rect x="1199.6999999999998" y="474.2" width="45.0" height="114.59999999999997" fill="url(#grn)"/><rect x="1199.6999999999998" y="474.2" width="45.0" height="114.59999999999997" fill="url(#grnh)"/><rect x="1199.6999999999998" y="474.2" width="45.0" height="2.2" fill="#d4ffd8"/><rect x="1199.1" y="473.59999999999997" width="46.2" height="231.20000000000005" fill="none" stroke="#8c8c8c" stroke-width="1.2"/><text x="1199" y="466.3" font-size="17.2" fill="#f4f4f4" letter-spacing="-0.5">ST B1</text><text x="1250.4" y="726.6" text-anchor="end" font-size="20.2" fill="#f4f4f4" letter-spacing="-0.3">184.8</text><rect x="1330.8" y="470.2" width="54.2" height="237.8" fill="url(#frm)"/><rect x="1331.3" y="470.7" width="53.2" height="236.8" fill="none" stroke="#fff" stroke-width="1"/><rect x="1335.3999999999999" y="474.2" width="45.0" height="230.00000000000006" fill="url(#barv)"/><rect x="1335.3999999999999" y="474.2" width="45.0" height="230.00000000000006" fill="url(#barh)"/><rect x="1335.3999999999999" y="588.8" width="45.0" height="11.200000000000045" fill="url(#grn)"/><rect x="1335.3999999999999" y="588.8" width="45.0" height="11.200000000000045" fill="url(#grnh)"/><rect x="1335.3999999999999" y="597.8" width="45.0" height="2.2" fill="#d4ffd8"/><rect x="1335.3999999999999" y="570.1999999999999" width="45.0" height="1.4" fill="#c8ccd4"/><rect x="1335.3999999999999" y="630.0" width="45.0" height="1.4" fill="#c8ccd4"/><rect x="1334.8" y="473.59999999999997" width="46.2" height="231.20000000000005" fill="none" stroke="#8c8c8c" stroke-width="1.2"/><rect x="1383.4" y="475" width="2.6" height="46" rx="1" fill="#e0204c"/><rect x="1383.4" y="658" width="2.6" height="47" rx="1" fill="#e0204c"/><text x="1335.4" y="466.3" font-size="17.2" fill="#f4f4f4" letter-spacing="-0.5">LT B2</text><text x="1386.2" y="726.6" text-anchor="end" font-size="20.2" fill="#f4f4f4" letter-spacing="-0.3">-2.4</text></svg>
<div class="abs" style="left:1408px;top:75px;width:106.5px;height:25px;background:#2875b9"></div>
<div class="t" style="left:1433.4px;top:80.2px;font-size:14.6px;color:#fff;letter-spacing:-0.35px">Graph</div>
<div class="abs" style="left:1408px;top:99px;width:893px;height:646.5px;background:#f0f0f0"></div>
<div class="abs" style="left:1408px;top:99px;width:893px;height:2.6px;background:#2875b9"></div>
<div class="abs" style="left:1408px;top:102px;width:1px;height:643px;background:#566480"></div>
<div class="abs" style="left:1408px;top:744.6px;width:893px;height:1px;background:#8a9ab8"></div>
<div class="abs" style="left:2300.2px;top:101.6px;width:0.9px;height:644px;background:#8a9ab8"></div>
<div class="abs" style="left:1409.5px;top:102px;width:150px;height:641px;background:linear-gradient(90deg,#f2f2f2 0,#f4f4f4 80%,#fafafa 100%)"></div>
<div class="abs" style="left:1559px;top:101.6px;width:741px;height:38px;background:#f0f0f0"></div>
<div class="abs" style="left:1559px;top:102.5px;width:244px;height:28.2px;background:#f6f6f6"></div>
<div class="abs" style="left:1559px;top:140px;width:39px;height:603px;background:linear-gradient(90deg,#fafafa,#fff)"></div>
<svg width="2305" height="1468" font-family="Liberation Sans, sans-serif"><path d="M1495.5,82.5 l8.5,8.5 M1504,82.5 l-8.5,8.5" stroke="#fff" stroke-width="1.6"/><path d="M2283,87.8 h10 l-5,5.2 z" fill="#d8dce8"/><rect x="1411.5" y="105.8" width="18" height="18.5" rx="1" fill="#fff" stroke="#8c8cb4" stroke-width="1"/><rect x="1412.1" y="106.3" width="16.8" height="4.6" fill="#7a78d4"/><rect x="1412.1" y="110.89999999999999" width="5.6" height="13" fill="#8a96e0"/><path d="M1412.1,114.89999999999999 h5.6 M1412.1,119.3 h5.6" stroke="#d8dcf8" stroke-width="1.2"/><path d="M1417.7,115.1 h11.4 M1417.7,119.5 h11.4 M1423.3,110.89999999999999 v13" stroke="#d0d0d8" stroke-width="1"/><text x="1433.5" y="120.3" font-size="15" fill="#111" letter-spacing="-0.25">Spark Advance</text><rect x="1412" y="134.4" width="18" height="18.5" rx="1" fill="#fff" stroke="#8c8cb4" stroke-width="1"/><rect x="1412.6" y="134.9" width="16.8" height="4.6" fill="#7a78d4"/><rect x="1412.6" y="139.5" width="5.6" height="13" fill="#8a96e0"/><path d="M1412.6,143.5 h5.6 M1412.6,147.9 h5.6" stroke="#d8dcf8" stroke-width="1.2"/><path d="M1418.2,143.70000000000002 h11.4 M1418.2,148.1 h11.4 M1423.8,139.5 v13" stroke="#d0d0d8" stroke-width="1"/><text x="1435.3" y="148.9" font-size="15" fill="#111" letter-spacing="-0.25">Spark Retard</text><rect x="1412" y="163.0" width="18" height="18.5" rx="1" fill="#fff" stroke="#8c8cb4" stroke-width="1"/><rect x="1412.6" y="163.5" width="16.8" height="4.6" fill="#7a78d4"/><rect x="1412.6" y="168.1" width="5.6" height="13" fill="#8a96e0"/><path d="M1412.6,172.1 h5.6 M1412.6,176.5 h5.6" stroke="#d8dcf8" stroke-width="1.2"/><path d="M1418.2,172.3 h11.4 M1418.2,176.7 h11.4 M1423.8,168.1 v13" stroke="#d0d0d8" stroke-width="1"/><text x="1435.3" y="177.5" font-size="15" fill="#111" letter-spacing="-0.25">LT Fuel Trim</text><rect x="1409.8" y="189.3" width="127.6" height="24.2" fill="#fbfbfb" stroke="#1b78d8" stroke-width="1.1"/><rect x="1412" y="191.7" width="18" height="18.5" rx="1" fill="#fff" stroke="#8c8cb4" stroke-width="1"/><rect x="1412.6" y="192.2" width="16.8" height="4.6" fill="#7a78d4"/><rect x="1412.6" y="196.79999999999998" width="5.6" height="13" fill="#8a96e0"/><path d="M1412.6,200.79999999999998 h5.6 M1412.6,205.2 h5.6" stroke="#d8dcf8" stroke-width="1.2"/><path d="M1418.2,201.0 h11.4 M1418.2,205.39999999999998 h11.4 M1423.8,196.79999999999998 v13" stroke="#d0d0d8" stroke-width="1"/><text x="1435.3" y="206.2" font-size="15" fill="#111" letter-spacing="-0.25">ST Fuel Trim</text><rect x="1412" y="220.3" width="18" height="18.5" rx="1" fill="#fff" stroke="#8c8cb4" stroke-width="1"/><rect x="1412.6" y="220.8" width="16.8" height="4.6" fill="#7a78d4"/><rect x="1412.6" y="225.4" width="5.6" height="13" fill="#8a96e0"/><path d="M1412.6,229.4 h5.6 M1412.6,233.8 h5.6" stroke="#d8dcf8" stroke-width="1.2"/><path d="M1418.2,229.60000000000002 h11.4 M1418.2,234.0 h11.4 M1423.8,225.4 v13" stroke="#d0d0d8" stroke-width="1"/><text x="1435.3" y="234.8" font-size="15" fill="#111" letter-spacing="-0.25">O2 (mv)</text><rect x="1412" y="248.89999999999998" width="18" height="18.5" rx="1" fill="#fff" stroke="#9898a8" stroke-width="1"/><rect x="1412.6" y="249.39999999999998" width="16.8" height="3" fill="#8a96e0"/><rect x="1414.4" y="261.4" width="1.7" height="4" fill="#444"/><rect x="1417.3000000000002" y="258.9" width="1.7" height="6.5" fill="#444"/><rect x="1420.2" y="256.4" width="1.7" height="9" fill="#444"/><rect x="1423.1000000000001" y="254.39999999999998" width="1.7" height="11" fill="#444"/><rect x="1426.0" y="254.39999999999998" width="1.7" height="11" fill="#444"/><text x="1435.3" y="263.4" font-size="15" fill="#111" letter-spacing="-0.25">RPM</text><path d="M1565.2,116.6 h15.8 M1573.1,108.7 v15.8" stroke="#0a0a0a" stroke-width="3.3"/><path d="M1593.9,116.6 h15.8" stroke="#0a0a0a" stroke-width="3.2"/><rect x="1617.2" y="103.5" width="27.4" height="26" fill="#f9f9f9" stroke="#1f7fe2" stroke-width="1"/><text x="1630.4" y="121.7" text-anchor="middle" font-size="17.2" font-weight="bold" fill="#0a0a0a">A</text><text x="1659.6" y="121.7" text-anchor="middle" font-size="17" fill="#9c9c9c">L</text><text x="1687" y="121.7" text-anchor="middle" font-size="17.2" font-weight="bold" fill="#0a0a0a">C</text><rect x="1706.5" y="108" width="1.2" height="17.6" fill="#bcbcbc"/><rect x="1710.8" y="103.5" width="27.8" height="26" fill="#f9f9f9" stroke="#1f7fe2" stroke-width="1"/><path d="M1716.1,109.3 v14.2 M1732.3,109.3 v14.2" stroke="#c03434" stroke-width="1.5"/><path d="M1716.1,119.4 l2.5,-6.8 l6.2,8.5 l5.1,-6.2 l2.6,4.5" fill="none" stroke="#3462c4" stroke-width="1.3"/><path d="M1749.9,109.3 v14.2 M1756,109.3 v14.2" stroke="#c03434" stroke-width="1.5"/><path d="M1745.6,118.9 l4,-4 l5.6,7.3 l6.2,-11.8" fill="none" stroke="#3462c4" stroke-width="1.3"/><rect x="1597.5" y="140" width="700.1999999999998" height="601" fill="#fff"/><rect x="1597.5" y="140" width="700.1999999999998" height="25" fill="#f0f0f0"/><rect x="1597.5" y="140" width="44.700000000000045" height="427.79999999999995" fill="#f0f0f0"/><rect x="1597.5" y="567.8" width="700.1999999999998" height="151.0" fill="#a9a9a9"/><rect x="1597.5" y="718.8" width="700.1999999999998" height="22.5" fill="#f0f0f0"/><rect x="1619" y="728.8" width="560" height="2" fill="#7c7c7c"/><rect x="1777.38" y="142" width="45.06" height="22.5" fill="#1b78d4"/><rect x="1599.5" y="313.4" width="42.700000000000045" height="21.2" fill="#1b78d4"/><rect x="1867.5" y="165.0" width="45.1" height="21.2" fill="#ff0f1e"/><rect x="1912.6" y="165.0" width="45.1" height="21.2" fill="#ff0f1e"/><rect x="1957.6" y="165.0" width="45.1" height="21.2" fill="#ff0f1e"/><rect x="2002.7" y="165.0" width="45.1" height="21.2" fill="#ff0f1e"/><rect x="1777.4" y="186.2" width="45.1" height="21.2" fill="#ff0f1e"/><rect x="1822.4" y="186.2" width="45.1" height="21.2" fill="#ff0f1e"/><rect x="1867.5" y="186.2" width="45.1" height="21.2" fill="#ff0f1e"/><rect x="1912.6" y="186.2" width="45.1" height="21.2" fill="#ff0f1e"/><rect x="1957.6" y="186.2" width="45.1" height="21.2" fill="#ff0f1e"/><rect x="2002.7" y="186.2" width="45.1" height="21.2" fill="#ff0f1e"/><rect x="1687.3" y="207.4" width="45.1" height="21.2" fill="#ff0f1e"/><rect x="1732.3" y="207.4" width="45.1" height="21.2" fill="#ff0f1e"/><rect x="1777.4" y="207.4" width="45.1" height="21.2" fill="#ff0f1e"/><rect x="1822.4" y="207.4" width="45.1" height="21.2" fill="#ff0f1e"/><rect x="1867.5" y="207.4" width="45.1" height="21.2" fill="#ff0f1e"/><rect x="1912.6" y="207.4" width="45.1" height="21.2" fill="#ff0f1e"/><rect x="1957.6" y="207.4" width="45.1" height="21.2" fill="#ff0f1e"/><rect x="2002.7" y="207.4" width="45.1" height="21.2" fill="#f4fff4"/><rect x="1687.3" y="228.6" width="45.1" height="21.2" fill="#ff0f1e"/><rect x="1732.3" y="228.6" width="45.1" height="21.2" fill="#ff0f1e"/><rect x="1777.4" y="228.6" width="45.1" height="21.2" fill="#ff0f1e"/><rect x="1822.4" y="228.6" width="45.1" height="21.2" fill="#ff0f1e"/><rect x="1867.5" y="228.6" width="45.1" height="21.2" fill="#ff0f1e"/><rect x="1912.6" y="228.6" width="45.1" height="21.2" fill="#d2fdd4"/><rect x="1957.6" y="228.6" width="45.1" height="21.2" fill="#ff0f1e"/><rect x="2002.7" y="228.6" width="45.1" height="21.2" fill="#ff0f1e"/><rect x="1687.3" y="249.8" width="45.1" height="21.2" fill="#ff0f1e"/><rect x="1732.3" y="249.8" width="45.1" height="21.2" fill="#ff0f1e"/><rect x="1777.4" y="249.8" width="45.1" height="21.2" fill="#ff0f1e"/><rect x="1822.4" y="249.8" width="45.1" height="21.2" fill="#ff0f1e"/><rect x="1867.5" y="249.8" width="45.1" height="21.2" fill="#ff0f1e"/><rect x="1912.6" y="249.8" width="45.1" height="21.2" fill="#ff0f1e"/><rect x="1957.6" y="249.8" width="45.1" height="21.2" fill="#ff0f1e"/><rect x="2002.7" y="249.8" width="45.1" height="21.2" fill="#ff0f1e"/><rect x="1687.3" y="271.0" width="45.1" height="21.2" fill="#ff0f1e"/><rect x="1732.3" y="271.0" width="45.1" height="21.2" fill="#ff0f1e"/><rect x="1777.4" y="271.0" width="45.1" height="21.2" fill="#ff0f1e"/><rect x="1822.4" y="271.0" width="45.1" height="21.2" fill="#ff0f1e"/><rect x="1867.5" y="271.0" width="45.1" height="21.2" fill="#ff0f1e"/><rect x="1912.6" y="271.0" width="45.1" height="21.2" fill="#ff0f1e"/><rect x="1957.6" y="271.0" width="45.1" height="21.2" fill="#ff0f1e"/><rect x="2002.7" y="271.0" width="45.1" height="21.2" fill="#ff0f1e"/><rect x="1687.3" y="292.2" width="45.1" height="21.2" fill="#ff0f1e"/><rect x="1732.3" y="292.2" width="45.1" height="21.2" fill="#ff0f1e"/><rect x="1777.4" y="292.2" width="45.1" height="21.2" fill="#ff0f1e"/><rect x="1822.4" y="292.2" width="45.1" height="21.2" fill="#ff0f1e"/><rect x="1867.5" y="292.2" width="45.1" height="21.2" fill="#ff0f1e"/><rect x="1912.6" y="292.2" width="45.1" height="21.2" fill="#ff0f1e"/><rect x="1957.6" y="292.2" width="45.1" height="21.2" fill="#ff0f1e"/><rect x="2002.7" y="292.2" width="45.1" height="21.2" fill="#ff0f1e"/><rect x="1687.3" y="313.4" width="45.1" height="21.2" fill="#ff0f1e"/><rect x="1732.3" y="313.4" width="45.1" height="21.2" fill="#ff0f1e"/><rect x="1777.4" y="313.4" width="45.1" height="21.2" fill="#3c96f8"/><rect x="1822.4" y="313.4" width="45.1" height="21.2" fill="#ff0f1e"/><rect x="1867.5" y="313.4" width="45.1" height="21.2" fill="#ff0f1e"/><rect x="1912.6" y="313.4" width="45.1" height="21.2" fill="#ff0f1e"/><rect x="1957.6" y="313.4" width="45.1" height="21.2" fill="#ff0f1e"/><rect x="1687.3" y="334.6" width="45.1" height="21.2" fill="#ff0f1e"/><rect x="1732.3" y="334.6" width="45.1" height="21.2" fill="#ff0f1e"/><rect x="1777.4" y="334.6" width="45.1" height="21.2" fill="#ff0f1e"/><rect x="1822.4" y="334.6" width="45.1" height="21.2" fill="#ff0f1e"/><rect x="1867.5" y="334.6" width="45.1" height="21.2" fill="#ff0f1e"/><rect x="1912.6" y="334.6" width="45.1" height="21.2" fill="#ff0f1e"/><rect x="1957.6" y="334.6" width="45.1" height="21.2" fill="#ff0f1e"/><rect x="2002.7" y="334.6" width="45.1" height="21.2" fill="#ff0f1e"/><rect x="2047.7" y="334.6" width="45.1" height="21.2" fill="#ff0f1e"/><rect x="1687.3" y="355.8" width="45.1" height="21.2" fill="#ff0f1e"/><rect x="1732.3" y="355.8" width="45.1" height="21.2" fill="#ff0f1e"/><rect x="1777.4" y="355.8" width="45.1" height="21.2" fill="#ff0f1e"/><rect x="1822.4" y="355.8" width="45.1" height="21.2" fill="#ff0f1e"/><rect x="1867.5" y="355.8" width="45.1" height="21.2" fill="#ff0f1e"/><rect x="1912.6" y="355.8" width="45.1" height="21.2" fill="#ff0f1e"/><rect x="1957.6" y="355.8" width="45.1" height="21.2" fill="#ff0f1e"/><rect x="2002.7" y="355.8" width="45.1" height="21.2" fill="#ff0f1e"/><rect x="1687.3" y="377.0" width="45.1" height="21.2" fill="#ff5460"/><rect x="1732.3" y="377.0" width="45.1" height="21.2" fill="#ff0f1e"/><rect x="1777.4" y="377.0" width="45.1" height="21.2" fill="#ff0f1e"/><rect x="1822.4" y="377.0" width="45.1" height="21.2" fill="#ff0f1e"/><rect x="1867.5" y="377.0" width="45.1" height="21.2" fill="#ff0f1e"/><rect x="1912.6" y="377.0" width="45.1" height="21.2" fill="#ff0f1e"/><rect x="1957.6" y="377.0" width="45.1" height="21.2" fill="#ff0f1e"/><rect x="2002.7" y="377.0" width="45.1" height="21.2" fill="#ff0f1e"/><rect x="1732.3" y="398.2" width="45.1" height="21.2" fill="#ff0f1e"/><rect x="1777.4" y="398.2" width="45.1" height="21.2" fill="#ff0f1e"/><rect x="1822.4" y="398.2" width="45.1" height="21.2" fill="#ff0f1e"/><rect x="1867.5" y="398.2" width="45.1" height="21.2" fill="#ff0f1e"/><rect x="1912.6" y="398.2" width="45.1" height="21.2" fill="#ff0f1e"/><rect x="1957.6" y="398.2" width="45.1" height="21.2" fill="#ff0f1e"/><rect x="2002.7" y="398.2" width="45.1" height="21.2" fill="#ff2a34"/><rect x="1732.3" y="419.4" width="45.1" height="21.2" fill="#ff0f1e"/><rect x="1777.4" y="419.4" width="45.1" height="21.2" fill="#ff0f1e"/><rect x="1822.4" y="419.4" width="45.1" height="21.2" fill="#ff0f1e"/><rect x="1867.5" y="419.4" width="45.1" height="21.2" fill="#ff0f1e"/><rect x="1912.6" y="419.4" width="45.1" height="21.2" fill="#ff0f1e"/><rect x="1957.6" y="419.4" width="45.1" height="21.2" fill="#ff0f1e"/><rect x="2002.7" y="419.4" width="45.1" height="21.2" fill="#ff0f1e"/><rect x="2047.7" y="419.4" width="45.1" height="21.2" fill="#ff0f1e"/><rect x="1732.3" y="440.6" width="45.1" height="21.2" fill="#ff0f1e"/><rect x="1777.4" y="440.6" width="45.1" height="21.2" fill="#ff0f1e"/><rect x="1822.4" y="440.6" width="45.1" height="21.2" fill="#ff0f1e"/><rect x="1867.5" y="440.6" width="45.1" height="21.2" fill="#ff0f1e"/><rect x="1912.6" y="440.6" width="45.1" height="21.2" fill="#ff0f1e"/><rect x="1957.6" y="440.6" width="45.1" height="21.2" fill="#ff0f1e"/><rect x="2002.7" y="440.6" width="45.1" height="21.2" fill="#ff0f1e"/><rect x="2047.7" y="440.6" width="45.1" height="21.2" fill="#ff0f1e"/><rect x="1777.4" y="461.8" width="45.1" height="21.2" fill="#ff0f1e"/><rect x="1822.4" y="461.8" width="45.1" height="21.2" fill="#ff0f1e"/><rect x="1867.5" y="461.8" width="45.1" height="21.2" fill="#ff0f1e"/><rect x="1912.6" y="461.8" width="45.1" height="21.2" fill="#ff0f1e"/><path d="M1642.2,186.2H2297.7M1642.2,207.4H2297.7M1642.2,228.6H2297.7M1642.2,249.8H2297.7M1642.2,271.0H2297.7M1642.2,292.2H2297.7M1642.2,313.4H2297.7M1642.2,334.6H2297.7M1642.2,355.8H2297.7M1642.2,377.0H2297.7M1642.2,398.2H2297.7M1642.2,419.4H2297.7M1642.2,440.6H2297.7M1642.2,461.8H2297.7M1642.2,483.0H2297.7M1642.2,504.2H2297.7M1642.2,525.4H2297.7M1642.2,546.6H2297.7M1642.2,567.8H2297.7M1687.3,165.0V567.8M1732.3,165.0V567.8M1777.4,165.0V567.8M1822.4,165.0V567.8M1867.5,165.0V567.8M1912.6,165.0V567.8M1957.6,165.0V567.8M2002.7,165.0V567.8M2047.7,165.0V567.8M2092.8,165.0V567.8M2137.9,165.0V567.8M2182.9,165.0V567.8M2228.0,165.0V567.8M2273.0,165.0V567.8M2318.1,165.0V567.8" stroke="#a2a2a2" stroke-width="1.1" fill="none"/><path d="M1687.3,144V163M1732.3,144V163M1777.4,144V163M1822.4,144V163M1867.5,144V163M1912.6,144V163M1957.6,144V163M2002.7,144V163M2047.7,144V163M2092.8,144V163M2137.9,144V163M2182.9,144V163M2228.0,144V163M2273.0,144V163M1601.5,186.2H1640.2M1601.5,207.4H1640.2M1601.5,228.6H1640.2M1601.5,249.8H1640.2M1601.5,271.0H1640.2M1601.5,292.2H1640.2M1601.5,313.4H1640.2M1601.5,334.6H1640.2M1601.5,355.8H1640.2M1601.5,377.0H1640.2M1601.5,398.2H1640.2M1601.5,419.4H1640.2M1601.5,440.6H1640.2M1601.5,461.8H1640.2M1601.5,483.0H1640.2M1601.5,504.2H1640.2M1601.5,525.4H1640.2M1601.5,546.6H1640.2" stroke="#6e6e6e" stroke-width="1.3" fill="none"/><path d="M1597.5,165.0H2297.7 M1642.2,140V567.8" stroke="#5a5a5a" stroke-width="1.2" fill="none"/><path d="M1597.5,741.5V140.8H2297.7" stroke="#1c1c1c" stroke-width="2" fill="none"/><path d="M1597.5,741.4H2297.7V140.8" stroke="#2a2a2a" stroke-width="1.5" fill="none"/><text x="1664.4" y="157.8" text-anchor="middle" font-family="Liberation Mono, monospace" font-size="15.6" letter-spacing="1.3" fill="#111">0.4</text><text x="1709.5" y="157.8" text-anchor="middle" font-family="Liberation Mono, monospace" font-size="15.6" letter-spacing="1.3" fill="#111">0.8</text><text x="1754.6" y="157.8" text-anchor="middle" font-family="Liberation Mono, monospace" font-size="15.6" letter-spacing="1.3" fill="#111">1.2</text><text x="1799.6" y="157.8" text-anchor="middle" font-family="Liberation Mono, monospace" font-size="15.6" letter-spacing="1.3" fill="#fff">1.6</text><text x="1844.7" y="157.8" text-anchor="middle" font-family="Liberation Mono, monospace" font-size="15.6" letter-spacing="1.3" fill="#111">2.0</text><text x="1889.7" y="157.8" text-anchor="middle" font-family="Liberation Mono, monospace" font-size="15.6" letter-spacing="1.3" fill="#111">2.4</text><text x="1934.8" y="157.8" text-anchor="middle" font-family="Liberation Mono, monospace" font-size="15.6" letter-spacing="1.3" fill="#111">2.8</text><text x="1979.9" y="157.8" text-anchor="middle" font-family="Liberation Mono, monospace" font-size="15.6" letter-spacing="1.3" fill="#111">3.2</text><text x="2024.9" y="157.8" text-anchor="middle" font-family="Liberation Mono, monospace" font-size="15.6" letter-spacing="1.3" fill="#111">3.6</text><text x="2070.0" y="157.8" text-anchor="middle" font-family="Liberation Mono, monospace" font-size="15.6" letter-spacing="1.3" fill="#111">4.0</text><text x="2115.0" y="157.8" text-anchor="middle" font-family="Liberation Mono, monospace" font-size="15.6" letter-spacing="1.3" fill="#111">4.4</text><text x="2160.1" y="157.8" text-anchor="middle" font-family="Liberation Mono, monospace" font-size="15.6" letter-spacing="1.3" fill="#111">4.8</text><text x="2205.2" y="157.8" text-anchor="middle" font-family="Liberation Mono, monospace" font-size="15.6" letter-spacing="1.3" fill="#111">5.2</text><text x="2250.2" y="157.8" text-anchor="middle" font-family="Liberation Mono, monospace" font-size="15.6" letter-spacing="1.3" fill="#111">5.6</text><text x="2279.04" y="157.8" font-family="Liberation Mono, monospace" font-size="15.6" letter-spacing="1.6" fill="#111">6.</text><text x="1634.8" y="181.4" text-anchor="end" font-family="Liberation Mono, monospace" font-size="15.6" letter-spacing="0.6" fill="#111">15</text><text x="1889.2" y="180.6" text-anchor="middle" font-family="Liberation Mono, monospace" font-size="15.6" letter-spacing="0.2" fill="#200000">68</text><text x="1934.3" y="180.6" text-anchor="middle" font-family="Liberation Mono, monospace" font-size="15.6" letter-spacing="0.2" fill="#200000">100</text><text x="1979.4" y="180.6" text-anchor="middle" font-family="Liberation Mono, monospace" font-size="15.6" letter-spacing="0.2" fill="#200000">135</text><text x="2024.4" y="180.6" text-anchor="middle" font-family="Liberation Mono, monospace" font-size="15.6" letter-spacing="0.2" fill="#200000">103</text><text x="1634.8" y="202.6" text-anchor="end" font-family="Liberation Mono, monospace" font-size="15.6" letter-spacing="0.6" fill="#111">20</text><text x="1799.1" y="201.8" text-anchor="middle" font-family="Liberation Mono, monospace" font-size="15.6" letter-spacing="0.2" fill="#200000">126</text><text x="1844.2" y="201.8" text-anchor="middle" font-family="Liberation Mono, monospace" font-size="15.6" letter-spacing="0.2" fill="#200000">99</text><text x="1889.2" y="201.8" text-anchor="middle" font-family="Liberation Mono, monospace" font-size="15.6" letter-spacing="0.2" fill="#200000">98</text><text x="1934.3" y="201.8" text-anchor="middle" font-family="Liberation Mono, monospace" font-size="15.6" letter-spacing="0.2" fill="#200000">119</text><text x="1979.4" y="201.8" text-anchor="middle" font-family="Liberation Mono, monospace" font-size="15.6" letter-spacing="0.2" fill="#200000">150</text><text x="2024.4" y="201.8" text-anchor="middle" font-family="Liberation Mono, monospace" font-size="15.6" letter-spacing="0.2" fill="#200000">25</text><text x="1634.8" y="223.8" text-anchor="end" font-family="Liberation Mono, monospace" font-size="15.6" letter-spacing="0.6" fill="#111">25</text><text x="1709.0" y="223.0" text-anchor="middle" font-family="Liberation Mono, monospace" font-size="15.6" letter-spacing="0.2" fill="#200000">137</text><text x="1754.1" y="223.0" text-anchor="middle" font-family="Liberation Mono, monospace" font-size="15.6" letter-spacing="0.2" fill="#200000">100</text><text x="1799.1" y="223.0" text-anchor="middle" font-family="Liberation Mono, monospace" font-size="15.6" letter-spacing="0.2" fill="#200000">106</text><text x="1844.2" y="223.0" text-anchor="middle" font-family="Liberation Mono, monospace" font-size="15.6" letter-spacing="0.2" fill="#200000">100</text><text x="1889.2" y="223.0" text-anchor="middle" font-family="Liberation Mono, monospace" font-size="15.6" letter-spacing="0.2" fill="#200000">102</text><text x="1934.3" y="223.0" text-anchor="middle" font-family="Liberation Mono, monospace" font-size="15.6" letter-spacing="0.2" fill="#200000">117</text><text x="1979.4" y="223.0" text-anchor="middle" font-family="Liberation Mono, monospace" font-size="15.6" letter-spacing="0.2" fill="#200000">124</text><text x="2024.4" y="223.0" text-anchor="middle" font-family="Liberation Mono, monospace" font-size="15.6" letter-spacing="0.2" fill="#111">-1</text><text x="1634.8" y="245.0" text-anchor="end" font-family="Liberation Mono, monospace" font-size="15.6" letter-spacing="0.6" fill="#111">30</text><text x="1709.0" y="244.2" text-anchor="middle" font-family="Liberation Mono, monospace" font-size="15.6" letter-spacing="0.2" fill="#200000">100</text><text x="1754.1" y="244.2" text-anchor="middle" font-family="Liberation Mono, monospace" font-size="15.6" letter-spacing="0.2" fill="#200000">108</text><text x="1799.1" y="244.2" text-anchor="middle" font-family="Liberation Mono, monospace" font-size="15.6" letter-spacing="0.2" fill="#200000">99</text><text x="1844.2" y="244.2" text-anchor="middle" font-family="Liberation Mono, monospace" font-size="15.6" letter-spacing="0.2" fill="#200000">96</text><text x="1889.2" y="244.2" text-anchor="middle" font-family="Liberation Mono, monospace" font-size="15.6" letter-spacing="0.2" fill="#200000">105</text><text x="1934.3" y="244.2" text-anchor="middle" font-family="Liberation Mono, monospace" font-size="15.6" letter-spacing="0.2" fill="#200000">-3</text><text x="1979.4" y="244.2" text-anchor="middle" font-family="Liberation Mono, monospace" font-size="15.6" letter-spacing="0.2" fill="#200000">104</text><text x="2024.4" y="244.2" text-anchor="middle" font-family="Liberation Mono, monospace" font-size="15.6" letter-spacing="0.2" fill="#200000">77</text><text x="1634.8" y="266.2" text-anchor="end" font-family="Liberation Mono, monospace" font-size="15.6" letter-spacing="0.6" fill="#111">35</text><text x="1709.0" y="265.4" text-anchor="middle" font-family="Liberation Mono, monospace" font-size="15.6" letter-spacing="0.2" fill="#200000">106</text><text x="1754.1" y="265.4" text-anchor="middle" font-family="Liberation Mono, monospace" font-size="15.6" letter-spacing="0.2" fill="#200000">102</text><text x="1799.1" y="265.4" text-anchor="middle" font-family="Liberation Mono, monospace" font-size="15.6" letter-spacing="0.2" fill="#200000">106</text><text x="1844.2" y="265.4" text-anchor="middle" font-family="Liberation Mono, monospace" font-size="15.6" letter-spacing="0.2" fill="#200000">103</text><text x="1889.2" y="265.4" text-anchor="middle" font-family="Liberation Mono, monospace" font-size="15.6" letter-spacing="0.2" fill="#200000">94</text><text x="1934.3" y="265.4" text-anchor="middle" font-family="Liberation Mono, monospace" font-size="15.6" letter-spacing="0.2" fill="#200000">162</text><text x="1979.4" y="265.4" text-anchor="middle" font-family="Liberation Mono, monospace" font-size="15.6" letter-spacing="0.2" fill="#200000">64</text><text x="2024.4" y="265.4" text-anchor="middle" font-family="Liberation Mono, monospace" font-size="15.6" letter-spacing="0.2" fill="#200000">36</text><text x="1634.8" y="287.4" text-anchor="end" font-family="Liberation Mono, monospace" font-size="15.6" letter-spacing="0.6" fill="#111">40</text><text x="1709.0" y="286.6" text-anchor="middle" font-family="Liberation Mono, monospace" font-size="15.6" letter-spacing="0.2" fill="#200000">89</text><text x="1754.1" y="286.6" text-anchor="middle" font-family="Liberation Mono, monospace" font-size="15.6" letter-spacing="0.2" fill="#200000">88</text><text x="1799.1" y="286.6" text-anchor="middle" font-family="Liberation Mono, monospace" font-size="15.6" letter-spacing="0.2" fill="#200000">97</text><text x="1844.2" y="286.6" text-anchor="middle" font-family="Liberation Mono, monospace" font-size="15.6" letter-spacing="0.2" fill="#200000">82</text><text x="1889.2" y="286.6" text-anchor="middle" font-family="Liberation Mono, monospace" font-size="15.6" letter-spacing="0.2" fill="#200000">103</text><text x="1934.3" y="286.6" text-anchor="middle" font-family="Liberation Mono, monospace" font-size="15.6" letter-spacing="0.2" fill="#200000">74</text><text x="1979.4" y="286.6" text-anchor="middle" font-family="Liberation Mono, monospace" font-size="15.6" letter-spacing="0.2" fill="#200000">89</text><text x="2024.4" y="286.6" text-anchor="middle" font-family="Liberation Mono, monospace" font-size="15.6" letter-spacing="0.2" fill="#200000">60</text><text x="1634.8" y="308.6" text-anchor="end" font-family="Liberation Mono, monospace" font-size="15.6" letter-spacing="0.6" fill="#111">45</text><text x="1709.0" y="307.8" text-anchor="middle" font-family="Liberation Mono, monospace" font-size="15.6" letter-spacing="0.2" fill="#200000">90</text><text x="1754.1" y="307.8" text-anchor="middle" font-family="Liberation Mono, monospace" font-size="15.6" letter-spacing="0.2" fill="#200000">101</text><text x="1799.1" y="307.8" text-anchor="middle" font-family="Liberation Mono, monospace" font-size="15.6" letter-spacing="0.2" fill="#200000">99</text><text x="1844.2" y="307.8" text-anchor="middle" font-family="Liberation Mono, monospace" font-size="15.6" letter-spacing="0.2" fill="#200000">106</text><text x="1889.2" y="307.8" text-anchor="middle" font-family="Liberation Mono, monospace" font-size="15.6" letter-spacing="0.2" fill="#200000">114</text><text x="1934.3" y="307.8" text-anchor="middle" font-family="Liberation Mono, monospace" font-size="15.6" letter-spacing="0.2" fill="#200000">77</text><text x="1979.4" y="307.8" text-anchor="middle" font-family="Liberation Mono, monospace" font-size="15.6" letter-spacing="0.2" fill="#200000">90</text><text x="2024.4" y="307.8" text-anchor="middle" font-family="Liberation Mono, monospace" font-size="15.6" letter-spacing="0.2" fill="#200000">180</text><text x="1634.8" y="329.8" text-anchor="end" font-family="Liberation Mono, monospace" font-size="15.6" letter-spacing="0.6" fill="#fff">50</text><text x="1709.0" y="329.0" text-anchor="middle" font-family="Liberation Mono, monospace" font-size="15.6" letter-spacing="0.2" fill="#200000">102</text><text x="1754.1" y="329.0" text-anchor="middle" font-family="Liberation Mono, monospace" font-size="15.6" letter-spacing="0.2" fill="#200000">104</text><text x="1799.1" y="329.0" text-anchor="middle" font-family="Liberation Mono, monospace" font-size="15.6" letter-spacing="0.2" fill="#fff">109</text><text x="1844.2" y="329.0" text-anchor="middle" font-family="Liberation Mono, monospace" font-size="15.6" letter-spacing="0.2" fill="#200000">102</text><text x="1889.2" y="329.0" text-anchor="middle" font-family="Liberation Mono, monospace" font-size="15.6" letter-spacing="0.2" fill="#200000">105</text><text x="1934.3" y="329.0" text-anchor="middle" font-family="Liberation Mono, monospace" font-size="15.6" letter-spacing="0.2" fill="#200000">89</text><text x="1979.4" y="329.0" text-anchor="middle" font-family="Liberation Mono, monospace" font-size="15.6" letter-spacing="0.2" fill="#200000">137</text><text x="1634.8" y="351.0" text-anchor="end" font-family="Liberation Mono, monospace" font-size="15.6" letter-spacing="0.6" fill="#111">55</text><text x="1709.0" y="350.2" text-anchor="middle" font-family="Liberation Mono, monospace" font-size="15.6" letter-spacing="0.2" fill="#200000">73</text><text x="1754.1" y="350.2" text-anchor="middle" font-family="Liberation Mono, monospace" font-size="15.6" letter-spacing="0.2" fill="#200000">96</text><text x="1799.1" y="350.2" text-anchor="middle" font-family="Liberation Mono, monospace" font-size="15.6" letter-spacing="0.2" fill="#200000">107</text><text x="1844.2" y="350.2" text-anchor="middle" font-family="Liberation Mono, monospace" font-size="15.6" letter-spacing="0.2" fill="#200000">104</text><text x="1889.2" y="350.2" text-anchor="middle" font-family="Liberation Mono, monospace" font-size="15.6" letter-spacing="0.2" fill="#200000">96</text><text x="1934.3" y="350.2" text-anchor="middle" font-family="Liberation Mono, monospace" font-size="15.6" letter-spacing="0.2" fill="#200000">97</text><text x="1979.4" y="350.2" text-anchor="middle" font-family="Liberation Mono, monospace" font-size="15.6" letter-spacing="0.2" fill="#200000">92</text><text x="2024.4" y="350.2" text-anchor="middle" font-family="Liberation Mono, monospace" font-size="15.6" letter-spacing="0.2" fill="#200000">26</text><text x="2069.5" y="350.2" text-anchor="middle" font-family="Liberation Mono, monospace" font-size="15.6" letter-spacing="0.2" fill="#200000">34</text><text x="1634.8" y="372.2" text-anchor="end" font-family="Liberation Mono, monospace" font-size="15.6" letter-spacing="0.6" fill="#111">60</text><text x="1709.0" y="371.4" text-anchor="middle" font-family="Liberation Mono, monospace" font-size="15.6" letter-spacing="0.2" fill="#200000">115</text><text x="1754.1" y="371.4" text-anchor="middle" font-family="Liberation Mono, monospace" font-size="15.6" letter-spacing="0.2" fill="#200000">114</text><text x="1799.1" y="371.4" text-anchor="middle" font-family="Liberation Mono, monospace" font-size="15.6" letter-spacing="0.2" fill="#200000">110</text><text x="1844.2" y="371.4" text-anchor="middle" font-family="Liberation Mono, monospace" font-size="15.6" letter-spacing="0.2" fill="#200000">91</text><text x="1889.2" y="371.4" text-anchor="middle" font-family="Liberation Mono, monospace" font-size="15.6" letter-spacing="0.2" fill="#200000">106</text><text x="1934.3" y="371.4" text-anchor="middle" font-family="Liberation Mono, monospace" font-size="15.6" letter-spacing="0.2" fill="#200000">99</text><text x="1979.4" y="371.4" text-anchor="middle" font-family="Liberation Mono, monospace" font-size="15.6" letter-spacing="0.2" fill="#200000">164</text><text x="2024.4" y="371.4" text-anchor="middle" font-family="Liberation Mono, monospace" font-size="15.6" letter-spacing="0.2" fill="#200000">35</text><text x="1634.8" y="393.4" text-anchor="end" font-family="Liberation Mono, monospace" font-size="15.6" letter-spacing="0.6" fill="#111">65</text><text x="1709.0" y="392.6" text-anchor="middle" font-family="Liberation Mono, monospace" font-size="15.6" letter-spacing="0.2" fill="#200000">17</text><text x="1754.1" y="392.6" text-anchor="middle" font-family="Liberation Mono, monospace" font-size="15.6" letter-spacing="0.2" fill="#200000">79</text><text x="1799.1" y="392.6" text-anchor="middle" font-family="Liberation Mono, monospace" font-size="15.6" letter-spacing="0.2" fill="#200000">109</text><text x="1844.2" y="392.6" text-anchor="middle" font-family="Liberation Mono, monospace" font-size="15.6" letter-spacing="0.2" fill="#200000">106</text><text x="1889.2" y="392.6" text-anchor="middle" font-family="Liberation Mono, monospace" font-size="15.6" letter-spacing="0.2" fill="#200000">110</text><text x="1934.3" y="392.6" text-anchor="middle" font-family="Liberation Mono, monospace" font-size="15.6" letter-spacing="0.2" fill="#200000">118</text><text x="1979.4" y="392.6" text-anchor="middle" font-family="Liberation Mono, monospace" font-size="15.6" letter-spacing="0.2" fill="#200000">95</text><text x="2024.4" y="392.6" text-anchor="middle" font-family="Liberation Mono, monospace" font-size="15.6" letter-spacing="0.2" fill="#200000">72</text><text x="1634.8" y="414.6" text-anchor="end" font-family="Liberation Mono, monospace" font-size="15.6" letter-spacing="0.6" fill="#111">70</text><text x="1754.1" y="413.8" text-anchor="middle" font-family="Liberation Mono, monospace" font-size="15.6" letter-spacing="0.2" fill="#200000">104</text><text x="1799.1" y="413.8" text-anchor="middle" font-family="Liberation Mono, monospace" font-size="15.6" letter-spacing="0.2" fill="#200000">111</text><text x="1844.2" y="413.8" text-anchor="middle" font-family="Liberation Mono, monospace" font-size="15.6" letter-spacing="0.2" fill="#200000">102</text><text x="1889.2" y="413.8" text-anchor="middle" font-family="Liberation Mono, monospace" font-size="15.6" letter-spacing="0.2" fill="#200000">72</text><text x="1934.3" y="413.8" text-anchor="middle" font-family="Liberation Mono, monospace" font-size="15.6" letter-spacing="0.2" fill="#200000">100</text><text x="1979.4" y="413.8" text-anchor="middle" font-family="Liberation Mono, monospace" font-size="15.6" letter-spacing="0.2" fill="#200000">90</text><text x="2024.4" y="413.8" text-anchor="middle" font-family="Liberation Mono, monospace" font-size="15.6" letter-spacing="0.2" fill="#200000">23</text><text x="1634.8" y="435.8" text-anchor="end" font-family="Liberation Mono, monospace" font-size="15.6" letter-spacing="0.6" fill="#111">75</text><text x="1754.1" y="435.0" text-anchor="middle" font-family="Liberation Mono, monospace" font-size="15.6" letter-spacing="0.2" fill="#200000">119</text><text x="1799.1" y="435.0" text-anchor="middle" font-family="Liberation Mono, monospace" font-size="15.6" letter-spacing="0.2" fill="#200000">100</text><text x="1844.2" y="435.0" text-anchor="middle" font-family="Liberation Mono, monospace" font-size="15.6" letter-spacing="0.2" fill="#200000">114</text><text x="1889.2" y="435.0" text-anchor="middle" font-family="Liberation Mono, monospace" font-size="15.6" letter-spacing="0.2" fill="#200000">113</text><text x="1934.3" y="435.0" text-anchor="middle" font-family="Liberation Mono, monospace" font-size="15.6" letter-spacing="0.2" fill="#200000">101</text><text x="1979.4" y="435.0" text-anchor="middle" font-family="Liberation Mono, monospace" font-size="15.6" letter-spacing="0.2" fill="#200000">82</text><text x="2024.4" y="435.0" text-anchor="middle" font-family="Liberation Mono, monospace" font-size="15.6" letter-spacing="0.2" fill="#200000">122</text><text x="2069.5" y="435.0" text-anchor="middle" font-family="Liberation Mono, monospace" font-size="15.6" letter-spacing="0.2" fill="#200000">387</text><text x="1634.8" y="457.0" text-anchor="end" font-family="Liberation Mono, monospace" font-size="15.6" letter-spacing="0.6" fill="#111">80</text><text x="1754.1" y="456.2" text-anchor="middle" font-family="Liberation Mono, monospace" font-size="15.6" letter-spacing="0.2" fill="#200000">187</text><text x="1799.1" y="456.2" text-anchor="middle" font-family="Liberation Mono, monospace" font-size="15.6" letter-spacing="0.2" fill="#200000">102</text><text x="1844.2" y="456.2" text-anchor="middle" font-family="Liberation Mono, monospace" font-size="15.6" letter-spacing="0.2" fill="#200000">106</text><text x="1889.2" y="456.2" text-anchor="middle" font-family="Liberation Mono, monospace" font-size="15.6" letter-spacing="0.2" fill="#200000">107</text><text x="1934.3" y="456.2" text-anchor="middle" font-family="Liberation Mono, monospace" font-size="15.6" letter-spacing="0.2" fill="#200000">107</text><text x="1979.4" y="456.2" text-anchor="middle" font-family="Liberation Mono, monospace" font-size="15.6" letter-spacing="0.2" fill="#200000">121</text><text x="2024.4" y="456.2" text-anchor="middle" font-family="Liberation Mono, monospace" font-size="15.6" letter-spacing="0.2" fill="#200000">90</text><text x="2069.5" y="456.2" text-anchor="middle" font-family="Liberation Mono, monospace" font-size="15.6" letter-spacing="0.2" fill="#200000">26</text><text x="1634.8" y="478.2" text-anchor="end" font-family="Liberation Mono, monospace" font-size="15.6" letter-spacing="0.6" fill="#111">85</text><text x="1799.1" y="477.4" text-anchor="middle" font-family="Liberation Mono, monospace" font-size="15.6" letter-spacing="0.2" fill="#200000">94</text><text x="1844.2" y="477.4" text-anchor="middle" font-family="Liberation Mono, monospace" font-size="15.6" letter-spacing="0.2" fill="#200000">101</text><text x="1889.2" y="477.4" text-anchor="middle" font-family="Liberation Mono, monospace" font-size="15.6" letter-spacing="0.2" fill="#200000">92</text><text x="1934.3" y="477.4" text-anchor="middle" font-family="Liberation Mono, monospace" font-size="15.6" letter-spacing="0.2" fill="#200000">171</text><text x="1634.8" y="499.4" text-anchor="end" font-family="Liberation Mono, monospace" font-size="15.6" letter-spacing="0.6" fill="#111">90</text><text x="1634.8" y="520.6" text-anchor="end" font-family="Liberation Mono, monospace" font-size="15.6" letter-spacing="0.6" fill="#111">95</text><text x="1634.8" y="541.8" text-anchor="end" font-family="Liberation Mono, monospace" font-size="15.6" letter-spacing="0.6" fill="#111">100</text><text x="1634.8" y="563.0" text-anchor="end" font-family="Liberation Mono, monospace" font-size="15.6" letter-spacing="0.6" fill="#111">105</text><text x="2066.5" y="122.6" text-anchor="middle" font-size="21.3" fill="#1a1a1a" letter-spacing="0.97">Engine Speed (rpm) [Sensor] / 1000</text><text transform="translate(1590.3,446) rotate(-90)" text-anchor="middle" font-size="21.3" fill="#1a1a1a" letter-spacing="0.68">Manifold Absolute Pressure (kPa) [Sensor]</text></svg>
<div class="abs" style="left:508px;top:753px;width:162px;height:24px;background:#4d5f80"></div>
<div class="t" style="left:534px;top:757.5px;font-size:14.5px;color:#fff;letter-spacing:-0.15px">Chart vs. Time</div>
<div class="abs" style="left:508px;top:776.2px;width:1793px;height:3.4px;background:#4d5f80"></div>
<div class="abs" style="left:508px;top:779px;width:1.6px;height:641px;background:#4d5f80"></div>
<div class="abs" style="left:2300px;top:779px;width:1px;height:641px;background:#4d5f80"></div>
<div class="abs" style="left:508px;top:1418.5px;width:1793px;height:1.8px;background:#4d5f80"></div>
<div class="abs" style="left:510.3px;top:780.5px;width:220px;height:126.5px;background:linear-gradient(to top right,rgba(78,78,78,1) 0%,rgba(40,40,40,0.75) 25%,rgba(0,0,0,0) 52%),linear-gradient(to bottom right,#000 0%,#000006 30%,#04043c 62%,#0a0a80 100%)"></div>
<div class="abs" style="left:731.6px;top:780.5px;width:1422.7000000000003px;height:126.5px;background:linear-gradient(#000004 0%,#02021c 45%,#04043e 100%)"></div>
<div class="abs" style="left:2154.3px;top:780.5px;width:143.89999999999964px;height:126.5px;background:linear-gradient(to top left,rgba(78,78,78,1) 0%,rgba(40,40,40,0.75) 25%,rgba(0,0,0,0) 52%),linear-gradient(to bottom left,#000 0%,#000006 30%,#04043c 62%,#0a0a80 100%)"></div>
<div class="abs" style="left:510.3px;top:907.0px;width:220px;height:127.59999999999991px;background:linear-gradient(to top right,rgba(78,78,78,1) 0%,rgba(40,40,40,0.75) 25%,rgba(0,0,0,0) 52%),linear-gradient(to bottom right,#000 0%,#000006 30%,#04043c 62%,#0a0a80 100%)"></div>
<div class="abs" style="left:731.6px;top:907.0px;width:1422.7000000000003px;height:127.59999999999991px;background:linear-gradient(#000004 0%,#02021c 45%,#04043e 100%)"></div>
<div class="abs" style="left:2154.3px;top:907.0px;width:143.89999999999964px;height:127.59999999999991px;background:linear-gradient(to top left,rgba(78,78,78,1) 0%,rgba(40,40,40,0.75) 25%,rgba(0,0,0,0) 52%),linear-gradient(to bottom left,#000 0%,#000006 30%,#04043c 62%,#0a0a80 100%)"></div>
<div class="abs" style="left:510.3px;top:1034.6px;width:220px;height:127.5px;background:linear-gradient(to top right,rgba(78,78,78,1) 0%,rgba(40,40,40,0.75) 25%,rgba(0,0,0,0) 52%),linear-gradient(to bottom right,#000 0%,#000006 30%,#04043c 62%,#0a0a80 100%)"></div>
<div class="abs" style="left:731.6px;top:1034.6px;width:1422.7000000000003px;height:127.5px;background:linear-gradient(#000004 0%,#02021c 45%,#04043e 100%)"></div>
<div class="abs" style="left:2154.3px;top:1034.6px;width:143.89999999999964px;height:127.5px;background:linear-gradient(to top left,rgba(78,78,78,1) 0%,rgba(40,40,40,0.75) 25%,rgba(0,0,0,0) 52%),linear-gradient(to bottom left,#000 0%,#000006 30%,#04043c 62%,#0a0a80 100%)"></div>
<div class="abs" style="left:510.3px;top:1162.1px;width:220px;height:127.40000000000009px;background:linear-gradient(to top right,rgba(78,78,78,1) 0%,rgba(40,40,40,0.75) 25%,rgba(0,0,0,0) 52%),linear-gradient(to bottom right,#000 0%,#000006 30%,#04043c 62%,#0a0a80 100%)"></div>
<div class="abs" style="left:731.6px;top:1162.1px;width:1422.7000000000003px;height:127.40000000000009px;background:linear-gradient(#000004 0%,#02021c 45%,#04043e 100%)"></div>
<div class="abs" style="left:2154.3px;top:1162.1px;width:143.89999999999964px;height:127.40000000000009px;background:linear-gradient(to top left,rgba(78,78,78,1) 0%,rgba(40,40,40,0.75) 25%,rgba(0,0,0,0) 52%),linear-gradient(to bottom left,#000 0%,#000006 30%,#04043c 62%,#0a0a80 100%)"></div>
<div class="abs" style="left:510.3px;top:1289.5px;width:220px;height:127.09999999999991px;background:linear-gradient(to top right,rgba(78,78,78,1) 0%,rgba(40,40,40,0.75) 25%,rgba(0,0,0,0) 52%),linear-gradient(to bottom right,#000 0%,#000006 30%,#04043c 62%,#0a0a80 100%)"></div>
<div class="abs" style="left:731.6px;top:1289.5px;width:1422.7000000000003px;height:127.09999999999991px;background:linear-gradient(#000004 0%,#02021c 45%,#04043e 100%)"></div>
<div class="abs" style="left:2154.3px;top:1289.5px;width:143.89999999999964px;height:127.09999999999991px;background:linear-gradient(to top left,rgba(78,78,78,1) 0%,rgba(40,40,40,0.75) 25%,rgba(0,0,0,0) 52%),linear-gradient(to bottom left,#000 0%,#000006 30%,#04043c 62%,#0a0a80 100%)"></div>
<svg width="2305" height="1468" font-family="Liberation Sans, sans-serif"><path d="M652,760.5 l8.5,8.5 M660.5,760.5 l-8.5,8.5" stroke="#e4e4e4" stroke-width="1.5"/><path d="M2283,765 h10 l-5,5.2 z" fill="#d8dce8"/><defs><clipPath id="cr0"><rect x="731.6" y="781.1" width="1422.7000000000003" height="125.3"/></clipPath><clipPath id="cr1"><rect x="731.6" y="907.6" width="1422.7000000000003" height="126.3999999999999"/></clipPath><clipPath id="cr2"><rect x="731.6" y="1035.1999999999998" width="1422.7000000000003" height="126.3"/></clipPath><clipPath id="cr3"><rect x="731.6" y="1162.6999999999998" width="1422.7000000000003" height="126.20000000000009"/></clipPath><clipPath id="cr4"><rect x="731.6" y="1290.1" width="1422.7000000000003" height="125.8999999999999"/></clipPath></defs><path d="M731.6,812.1H2154.3M731.6,843.8H2154.3M731.6,875.4H2154.3M731.6,938.9H2154.3M731.6,970.8H2154.3M731.6,1002.7H2154.3M731.6,1066.5H2154.3M731.6,1098.3H2154.3M731.6,1130.2H2154.3M731.6,1193.9H2154.3M731.6,1225.8H2154.3M731.6,1257.7H2154.3M731.6,1321.3H2154.3M731.6,1353.0H2154.3M731.6,1384.8H2154.3" stroke="#5c5c5c" stroke-width="1.1" fill="none"/><polyline points="731.9,903.1 743.7,901.5 753.1,892.1 764.0,886.8 771.9,888.1 809.3,889.0 818.7,887.5 832.8,892.1 890.6,892.4 899.9,894.6 912.4,895.3 923.4,894.6 924.0,896.2 943.7,894.6 954.6,892.8 962.4,895.3 974.9,896.8 984.3,896.2 990.5,895.6 993.6,896.8 1006.1,898.4 1037.4,898.4 1049.9,896.2 1060.8,891.2 1074.8,888.1 1087.3,885.0 1109.2,883.7 1131.1,883.7 1140.4,881.8 1152.9,884.3 1162.3,889.0 1171.7,898.4 1179.5,905.3 1185.7,905.3 1190.4,896.8 1196.7,890.6 1206.0,891.2 1218.5,893.1 1224.8,892.1 1237.3,895.3 1249.8,896.2 1252.9,895.3 1262.3,896.8 1274.8,898.4 1287.3,899.3 1296.6,899.3 1309.1,897.8 1318.5,896.2 1331.0,894.3 1352.9,894.3 1362.2,892.8 1377.8,892.1 1384.1,893.7 1390.3,895.9 1424.7,895.9 1430.9,894.3 1437.2,895.3 1445.0,895.6 1443.1,895.6 1455.6,892.1 1471.2,887.5 1486.9,887.5 1502.5,891.2 1515.0,894.3 1527.5,894.6 1540.0,898.4 1549.3,900.9 1555.6,899.0 1564.9,892.1 1572.8,885.9 1577.4,886.8 1586.8,884.3 1599.3,884.3 1605.6,885.9 1610.2,886.5 1627.4,892.1 1643.0,897.4 1655.5,900.6 1663.3,906.8 1766.4,906.8 1771.1,902.4 1789.8,902.1 1791.4,900.6 1821.1,900.6 1827.3,906.8 2013.2,906.8 2016.3,902.1 2047.5,902.1 2053.8,896.8 2061.6,885.9 2064.7,883.7 2067.9,885.0 2072.5,879.6 2083.5,876.5 2096.0,870.3 2108.5,865.0 2117.8,862.5 2127.2,858.7 2136.6,856.2 2141.3,858.7 2144.4,878.1 2147.5,906.8 2153.8,906.8" fill="none" stroke="#ffffff" stroke-width="2.3" stroke-linejoin="round" clip-path="url(#cr0)"/><polyline points="731.9,879.6 735.9,879.6 742.2,881.8 767.2,881.8 771.9,882.8 865.6,882.8 868.7,884.0 912.4,884.0 915.5,885.3 943.7,885.3 946.8,886.5 974.9,886.5 978.0,887.5 1003.0,887.5 1006.1,888.4 1053.0,888.4 1068.6,887.5 1093.6,886.5 1124.8,885.3 1140.4,884.0 1156.1,883.4 1193.5,882.8 1445.0,882.1 1443.1,882.1 1486.9,882.1 1490.0,881.2 1586.8,881.2 1589.9,879.6 1624.3,879.6 1627.4,878.1 1674.3,878.1 1680.5,879.6 1708.6,880.3 1711.8,881.2 1752.4,881.8 1755.5,882.8 1833.6,882.8 1836.7,884.0 1864.8,884.3 1886.7,885.9 1908.5,886.8 1927.3,888.1 1952.3,889.6 1971.0,890.6 1999.1,892.1 2027.2,893.1 2033.5,893.7 2074.1,893.7 2083.5,892.1 2096.0,890.6 2108.5,888.4 2121.0,885.9 2133.4,883.7 2153.8,883.4" fill="none" stroke="#2ff03a" stroke-width="2.3" stroke-linejoin="round" clip-path="url(#cr0)"/><polyline points="731.9,881.2 742.2,882.8 751.6,859.3 754.7,861.8 756.2,858.7 759.4,860.0 831.2,860.0 834.3,861.8 878.1,861.8 881.2,863.4 921.8,865.6 954.6,868.1 990.5,870.3 1018.6,872.8 1056.1,872.8 1068.6,870.9 1093.6,868.7 1112.3,866.2 1140.4,862.5 1152.9,860.3 1170.1,860.3 1181.1,871.8 1187.3,877.1 1190.4,873.4 1196.7,873.4 1198.2,875.9 1199.8,874.3 1218.5,874.3 1221.7,873.4 1234.2,873.4 1235.7,875.0 1237.3,873.4 1274.8,873.4 1276.3,875.0 1277.9,873.7 1287.3,873.7 1288.2,875.3 1291.9,873.7 1293.5,875.0 1415.3,875.0 1418.4,873.4 1423.1,873.4 1426.3,874.3 1430.9,873.4 1440.3,875.0 1445.0,875.0 1443.1,875.0 1477.5,873.4 1479.0,871.8 1511.8,871.2 1513.4,872.5 1522.8,870.3 1525.9,871.2 1536.8,870.3 1538.4,871.8 1555.6,872.5 1558.7,873.7 1571.2,871.8 1574.3,870.3 1596.2,868.7 1614.9,868.1 1616.5,867.1 1618.0,868.7 1627.4,867.5 1643.0,867.5 1646.2,868.7 1661.8,869.3 1669.6,868.7 1671.1,870.3 1686.8,870.3 1689.9,871.8 1699.3,872.8 1739.9,873.4 1743.0,875.0 1744.6,873.4 1761.7,875.0 1768.0,879.6 1774.2,880.6 1780.5,879.6 1786.7,876.5 1796.1,860.3 1799.2,860.0 1802.3,861.5 1833.6,861.8 1836.7,863.1 1852.3,863.4 1867.9,865.6 1883.6,867.1 1905.4,868.7 1927.3,871.2 1946.0,874.3 1967.9,876.5 1989.8,878.1 2008.5,879.6 2021.0,881.2 2047.5,881.2 2053.8,876.5 2060.0,861.8 2063.2,862.5 2066.3,865.0 2069.4,863.4 2072.5,861.8 2075.7,860.9 2083.5,857.8 2096.0,851.5 2108.5,845.3 2117.8,840.6 2127.2,836.8 2136.6,831.2 2142.8,829.0 2147.5,834.3 2153.8,840.6" fill="none" stroke="#ff1c1c" stroke-width="2.3" stroke-linejoin="round" clip-path="url(#cr0)"/><polyline points="732.3,998.8 735.4,997.4 739.6,998.2 745.8,995.3 751.0,982.2 756.2,977.0 762.5,969.1 767.7,967.0 772.9,966.6 775.0,965.1 777.1,966.6 787.5,967.2 818.7,967.2 825.0,972.8 831.2,975.9 837.5,977.0 864.5,977.0 868.7,975.5 872.9,975.9 876.0,977.4 892.6,977.4 897.8,982.2 903.1,984.3 920.8,984.3 924.9,983.2 933.2,982.8 937.4,980.7 943.7,980.7 949.9,975.9 954.1,974.5 960.3,977.0 966.6,982.2 974.9,983.6 985.3,983.6 995.7,983.2 1002.0,983.6 1008.2,987.0 1012.4,987.8 1024.9,987.8 1030.1,986.3 1036.3,986.3 1041.5,983.6 1046.7,978.6 1051.9,974.9 1055.1,966.6 1058.2,959.3 1066.5,955.1 1074.9,950.3 1081.1,942.0 1099.8,941.6 1106.1,942.6 1110.3,943.6 1118.6,943.6 1124.8,945.1 1145.7,945.1 1151.9,947.8 1157.1,952.0 1161.3,962.4 1164.4,977.0 1166.9,991.5 1172.7,999.9 1179.0,1005.1 1185.2,1002.0 1190.4,994.7 1193.6,968.6 1196.7,956.1 1199.8,953.6 1200.0,953.0 1208.3,956.6 1222.9,962.4 1231.2,970.7 1237.5,975.9 1243.7,978.6 1252.1,979.5 1264.6,980.1 1268.7,983.6 1271.8,984.7 1280.2,984.9 1287.5,988.4 1295.8,991.1 1304.1,989.0 1310.4,983.2 1316.6,978.0 1327.0,974.5 1335.4,969.7 1341.6,967.6 1352.0,967.2 1358.3,963.4 1364.5,959.9 1381.2,959.9 1387.4,968.6 1392.6,973.8 1395.8,974.9 1441.6,974.9 1446.8,971.8 1449.9,968.6 1454.1,958.2 1462.4,954.1 1468.6,944.7 1472.8,940.9 1480.1,940.9 1487.4,945.7 1493.6,950.9 1499.9,954.1 1506.1,960.3 1511.3,968.6 1515.5,973.4 1525.9,973.4 1530.1,974.9 1534.2,977.0 1541.5,990.5 1547.8,995.7 1553.0,997.4 1558.2,984.3 1563.4,958.2 1568.6,944.7 1574.8,941.2 1582.1,938.9 1598.8,938.9 1605.0,942.6 1613.4,949.5 1622.7,959.9 1633.2,970.3 1639.4,984.3 1647.7,995.7 1655.0,1004.5 1659.2,1006.1 1665.4,1005.1 1672.7,1003.4 1680.0,1002.0 1682.1,1000.9 1724.8,1000.9 1732.1,1003.6 1752.9,1003.6 1756.0,1004.7 1763.3,1004.7 1771.6,999.9 1776.8,998.8 1782.0,999.9 1790.4,1004.5 1798.7,1012.0 1807.0,1012.4 1810.2,1013.4 1821.6,1013.4 1825.8,1011.7 1840.3,1011.7 1844.5,1010.3 1854.9,1008.2 1871.6,1008.2 1874.7,1006.7 1888.2,1006.7 1892.4,1005.5 1895.5,1006.1 1897.6,1007.2 1904.9,1007.8 1907.0,1008.6 1909.1,1007.2 1921.6,1007.2 1923.6,1005.7 1942.4,1005.5 1944.5,1004.5 1959.1,1004.0 1962.2,1003.4 1969.5,1003.0 1974.7,999.5 1982.0,999.5 1987.2,1002.4 1992.4,1004.0 1996.5,1002.4 2008.0,1002.0 2011.1,1000.9 2021.5,1000.9 2026.7,998.8 2044.4,998.2 2048.6,996.8 2053.8,971.8 2061.1,963.4 2066.3,957.2 2071.5,946.8 2074.6,943.0 2077.8,942.6 2083.0,938.4 2088.2,937.0 2134.0,937.0 2138.1,939.5 2142.3,944.7 2145.4,970.7 2148.6,993.6 2151.7,1007.2 2154.4,1015.5" fill="none" stroke="#ee22ee" stroke-width="2.3" stroke-linejoin="round" clip-path="url(#cr1)"/><polyline points="732.3,1033.2 737.5,1031.1 740.6,1018.6 745.8,939.5 751.0,929.1 757.3,1033.2 762.5,939.5 768.1,929.1 773.9,933.2 779.6,950.9 786.4,964.5 791.2,982.2 796.2,937.4 802.5,999.9 804.1,999.9 808.3,949.5 812.5,949.5 815.0,953.0 818.3,974.9 820.4,976.6 825.0,933.2 827.0,934.3 831.6,943.6 837.0,1026.3 843.1,1019.7 847.9,953.0 853.1,985.3 857.7,946.8 859.7,944.7 864.5,975.9 870.8,944.7 875.4,974.9 882.6,941.6 888.5,937.0 893.7,950.9 898.3,934.3 905.1,968.6 909.7,941.6 915.5,991.5 921.8,940.5 931.8,995.7 937.4,931.2 943.7,937.4 949.5,977.0 955.1,937.4 958.2,935.3 961.4,935.9 966.6,949.9 972.2,1006.1 978.0,942.6 983.2,1021.7 989.1,986.3 994.7,992.6 1007.2,936.4 1013.4,980.1 1018.6,941.6 1023.2,1003.0 1024.9,1002.0 1030.1,939.5 1035.3,941.6 1041.1,954.1 1046.7,945.7 1053.0,939.5 1057.8,938.4 1063.4,954.1 1069.6,937.4 1075.9,945.7 1081.1,949.9 1091.9,995.7 1098.8,936.4 1104.0,975.9 1109.8,934.3 1114.4,988.4 1120.7,940.5 1125.9,959.3 1128.0,957.2 1132.5,925.9 1138.4,984.3 1144.6,943.6 1149.8,935.3 1154.6,933.2 1161.3,1016.5 1166.9,924.9 1172.7,930.1 1179.0,1032.2 1189.4,1033.6 1195.6,949.9 1202.1,935.3 1206.2,1002.0 1207.9,1003.6 1212.9,945.7 1217.7,940.5 1223.3,988.4 1229.2,935.3 1235.4,935.3 1240.6,937.4 1247.9,968.6 1252.1,1019.7 1258.3,941.6 1263.5,948.2 1269.3,943.0 1275.4,968.2 1280.2,948.9 1284.3,948.2 1287.5,952.0 1292.3,1010.3 1298.5,962.4 1303.5,982.8 1310.4,933.2 1318.7,938.4 1322.9,939.5 1328.7,974.9 1334.7,935.3 1343.7,956.6 1349.9,962.4 1356.2,979.5 1362.8,935.7 1368.3,937.8 1374.5,954.5 1380.8,947.8 1387.4,938.4 1392.6,942.6 1396.8,1013.4 1399.5,1013.4 1403.7,954.1 1409.3,983.8 1414.5,970.7 1420.7,939.5 1430.1,968.6 1437.4,937.4 1443.2,968.2 1448.9,974.9 1455.1,936.4 1459.9,969.1 1470.7,928.0 1476.6,933.2 1485.7,951.6 1489.0,953.0 1494.7,936.4 1499.9,947.4 1506.1,938.4 1510.7,1004.0 1517.0,935.3 1523.2,961.4 1534.2,935.7 1539.4,971.8 1541.5,972.8 1545.7,934.3 1551.9,1013.4 1554.0,1014.5 1558.2,958.2 1562.8,1009.9 1565.5,1010.3 1570.7,950.9 1574.8,953.0 1580.7,980.7 1585.9,986.3 1592.5,973.8 1598.2,937.0 1609.8,964.1 1616.1,934.3 1621.7,937.8 1626.9,955.1 1633.2,942.6 1639.0,969.1 1643.1,974.9 1649.8,939.9 1655.0,933.2 1658.1,968.6 1661.9,1018.6 1667.5,1033.6 1680.0,1033.6 1682.1,1033.6 1771.6,1033.6 1775.8,1031.1 1777.9,1018.6 1782.0,953.0 1792.5,929.1 1798.7,990.5 1803.9,924.9 1807.0,922.8 1811.2,922.8 1817.4,925.3 1820.6,925.9 1823.7,970.7 1825.8,1026.9 1828.9,1032.8 1833.1,1033.6 2017.4,1033.6 2023.6,1031.1 2026.7,1024.9 2031.9,966.6 2037.1,943.6 2042.3,937.4 2048.6,930.1 2053.8,931.2 2061.1,925.9 2066.9,934.9 2072.5,930.1 2078.8,979.1 2084.0,941.6 2090.2,997.8 2096.1,987.4 2101.7,935.3 2107.3,986.3 2112.7,965.5 2119.0,984.3 2124.6,934.3 2129.8,940.5 2135.6,936.4 2141.3,942.6 2145.4,922.8 2147.5,922.8 2150.6,1002.0 2153.8,1033.6" fill="none" stroke="#2ff03a" stroke-width="2.3" stroke-linejoin="round" clip-path="url(#cr1)"/><polyline points="732.3,1161.6 740.6,1161.6 744.8,1152.9 751.0,1145.6 757.3,1140.4 766.6,1139.7 768.7,1138.3 773.9,1141.4 816.6,1141.4 822.9,1143.9 864.5,1143.9 868.7,1145.6 887.4,1145.0 891.6,1146.6 897.8,1149.1 955.1,1149.1 962.4,1153.9 973.9,1153.9 977.0,1155.4 1010.3,1155.4 1013.4,1153.9 1016.5,1155.4 1021.8,1155.4 1024.9,1153.9 1036.3,1153.9 1046.7,1149.7 1053.0,1140.4 1060.3,1137.7 1069.6,1133.1 1075.9,1121.0 1088.4,1118.5 1119.6,1118.5 1122.8,1120.0 1138.4,1120.0 1145.7,1121.6 1151.9,1127.9 1159.2,1145.6 1167.5,1161.6 1184.2,1161.6 1191.5,1137.2 1199.8,1137.2 1200.0,1137.2 1207.3,1138.9 1214.6,1142.5 1218.7,1142.5 1225.0,1146.2 1232.3,1149.7 1239.6,1150.8 1260.4,1150.8 1268.7,1153.3 1281.2,1153.9 1287.5,1156.0 1293.7,1156.0 1298.9,1154.5 1306.2,1154.5 1318.7,1150.8 1324.9,1150.4 1335.4,1147.0 1339.5,1148.7 1345.8,1147.2 1352.0,1147.2 1358.3,1143.5 1379.1,1143.5 1383.3,1145.2 1387.4,1148.7 1443.6,1148.7 1449.9,1138.7 1455.1,1137.7 1461.3,1135.2 1465.5,1122.7 1469.7,1120.0 1478.0,1120.0 1487.4,1132.0 1491.5,1135.6 1499.9,1140.0 1505.1,1147.7 1510.3,1150.8 1530.1,1150.8 1535.3,1161.2 1547.8,1161.2 1555.1,1152.9 1565.5,1136.2 1570.7,1120.0 1574.8,1115.4 1581.1,1112.3 1587.3,1107.5 1593.6,1107.5 1599.8,1116.4 1605.0,1126.8 1610.2,1131.0 1616.5,1138.7 1622.7,1141.4 1627.9,1144.5 1637.3,1153.9 1648.8,1161.6 1680.0,1161.6 1682.1,1161.6 1966.3,1161.6 1969.5,1160.6 1977.8,1160.6 1980.9,1161.6 2042.3,1161.6 2048.6,1151.8 2054.8,1146.6 2062.1,1133.1 2067.3,1131.0 2073.6,1113.3 2084.0,1092.5 2095.5,1080.0 2104.8,1074.1 2113.2,1072.1 2123.6,1076.2 2130.9,1083.1 2137.1,1091.4 2141.3,1107.1 2144.4,1127.9 2146.5,1148.7 2148.6,1161.6" fill="none" stroke="#2ff03a" stroke-width="2.3" stroke-linejoin="round" clip-path="url(#cr2)"/><polyline points="732.3,1110.2 734.4,1111.2 739.6,1160.2 745.8,1125.8 748.9,1125.4 751.0,1127.5 756.2,1100.8 761.4,1088.3 767.7,1072.7 772.9,1066.4 779.1,1065.8 787.5,1062.9 792.7,1065.0 802.1,1065.0 805.2,1062.9 810.4,1065.0 818.7,1065.0 825.0,1061.2 832.2,1053.3 839.5,1053.3 842.0,1055.0 848.9,1051.9 874.9,1051.9 876.0,1050.8 878.1,1052.3 887.4,1052.3 889.5,1050.8 894.7,1050.2 899.9,1043.5 905.1,1039.4 913.5,1039.4 915.5,1038.3 918.7,1039.8 926.0,1039.8 934.3,1044.0 942.6,1044.0 948.9,1049.2 953.0,1051.2 957.2,1050.8 965.5,1044.0 978.0,1043.5 981.1,1042.5 987.4,1042.5 995.7,1045.0 1000.9,1044.6 1007.2,1039.4 1012.4,1042.9 1019.7,1044.6 1040.5,1044.6 1046.7,1049.8 1051.9,1055.0 1057.2,1066.4 1063.4,1070.0 1070.7,1066.4 1079.0,1066.4 1082.1,1067.5 1097.8,1067.5 1099.8,1066.4 1161.3,1066.4 1165.4,1035.2 1169.6,1035.2 1172.7,1046.7 1175.9,1082.1 1177.9,1118.5 1183.1,1120.0 1190.4,1136.2 1195.6,1100.8 1199.8,1078.9 1201.0,1078.3 1206.2,1077.9 1213.5,1073.7 1218.7,1069.6 1223.9,1067.9 1228.1,1065.4 1234.4,1056.7 1240.6,1052.3 1247.9,1050.8 1252.1,1049.2 1255.2,1050.8 1262.5,1050.8 1268.7,1047.7 1276.0,1044.2 1280.2,1045.6 1286.4,1046.0 1292.7,1050.8 1300.0,1050.8 1304.1,1046.7 1312.5,1049.8 1317.7,1053.9 1322.9,1057.1 1328.1,1057.1 1334.3,1061.7 1339.5,1065.8 1341.6,1064.4 1348.9,1064.4 1353.1,1067.1 1356.2,1067.9 1362.4,1072.1 1371.8,1072.1 1374.9,1070.6 1381.2,1070.6 1386.4,1063.3 1392.6,1056.0 1446.8,1056.0 1449.9,1059.2 1455.1,1072.7 1457.2,1074.1 1462.4,1074.1 1465.5,1072.7 1468.6,1073.3 1478.0,1073.3 1482.2,1070.6 1487.4,1072.1 1493.6,1068.5 1499.9,1067.9 1506.1,1065.4 1511.3,1057.1 1516.5,1056.0 1520.7,1055.0 1529.0,1054.6 1535.3,1050.8 1539.9,1044.6 1542.6,1047.7 1545.7,1055.0 1551.9,1057.1 1558.2,1046.7 1563.4,1065.4 1568.6,1069.6 1574.8,1071.0 1580.0,1069.2 1586.3,1071.0 1592.5,1069.6 1597.8,1069.6 1604.0,1066.9 1616.5,1063.3 1624.8,1061.2 1630.0,1058.5 1634.2,1053.9 1639.0,1041.9 1642.5,1041.9 1646.7,1045.6 1650.9,1051.9 1655.0,1058.1 1657.1,1072.7 1658.1,1100.8 1660.2,1134.1 1662.3,1157.0 1665.4,1147.7 1668.6,1142.5 1673.8,1142.5 1676.9,1136.2 1680.0,1131.0 1680.0,1127.9 1689.4,1113.3 1696.7,1106.0 1765.4,1106.0 1769.5,1039.4 1772.7,1082.1 1776.8,1161.6 1782.0,1147.7 1787.2,1161.6 1798.7,1161.6 1803.9,1035.2 1807.0,1035.2 1810.2,1045.6 1817.4,1057.1 1820.6,1059.2 1823.7,1109.1 1825.8,1157.0 1832.0,1140.4 1839.3,1130.0 1844.5,1112.3 1849.7,1106.4 2009.0,1106.4 2014.2,1077.9 2016.3,1076.9 2021.5,1086.2 2026.7,1070.6 2033.0,1078.9 2038.2,1078.3 2048.6,1074.8 2052.8,1138.3 2055.9,1161.6 2061.1,1140.4 2067.3,1066.4 2081.9,1066.4 2084.0,1067.9 2115.2,1067.9 2117.3,1068.9 2126.7,1068.9 2134.0,1071.0 2142.3,1071.0 2145.4,1049.8 2147.5,1041.5 2150.2,1092.5 2152.3,1123.7 2154.4,1127.9" fill="none" stroke="#ffffff" stroke-width="2.3" stroke-linejoin="round" clip-path="url(#cr2)"/><polyline points="732.3,1288.4 737.5,1286.3 740.6,1273.8 745.8,1194.7 751.0,1184.3 757.3,1288.4 762.5,1194.7 768.1,1184.3 773.9,1188.4 779.6,1206.1 786.4,1219.7 791.2,1237.4 796.2,1192.6 802.5,1255.1 804.1,1255.1 808.3,1204.7 812.5,1204.7 815.0,1208.2 818.3,1230.1 820.4,1231.8 825.0,1188.4 827.0,1189.5 831.6,1198.8 837.0,1281.5 843.1,1274.9 847.9,1208.2 853.1,1240.5 857.7,1202.0 859.7,1199.9 864.5,1231.1 870.8,1199.9 875.4,1230.1 882.6,1196.8 888.5,1192.2 893.7,1206.1 898.3,1189.5 905.1,1223.8 909.7,1196.8 915.5,1246.7 921.8,1195.7 931.8,1250.9 937.4,1186.4 943.7,1192.6 949.5,1232.2 955.1,1192.6 958.2,1190.5 961.4,1191.1 966.6,1205.1 972.2,1261.3 978.0,1197.8 983.2,1276.9 989.1,1241.5 994.7,1247.8 1007.2,1191.6 1013.4,1235.3 1018.6,1196.8 1023.2,1258.2 1024.9,1257.2 1030.1,1194.7 1035.3,1196.8 1041.1,1209.3 1046.7,1200.9 1053.0,1194.7 1057.8,1193.6 1063.4,1209.3 1069.6,1192.6 1075.9,1200.9 1081.1,1205.1 1091.9,1250.9 1098.8,1191.6 1104.0,1231.1 1109.8,1189.5 1114.4,1243.6 1120.7,1195.7 1125.9,1214.5 1128.0,1212.4 1132.5,1181.1 1138.4,1239.5 1144.6,1198.8 1149.8,1190.5 1154.6,1188.4 1161.3,1271.7 1166.9,1180.1 1172.7,1185.3 1179.0,1287.4 1189.4,1288.8 1195.6,1205.1 1202.1,1190.5 1206.2,1257.2 1207.9,1258.8 1212.9,1200.9 1217.7,1195.7 1223.3,1243.6 1229.2,1190.5 1235.4,1190.5 1240.6,1192.6 1247.9,1223.8 1252.1,1274.9 1258.3,1196.8 1263.5,1203.4 1269.3,1198.2 1275.4,1223.4 1280.2,1204.1 1284.3,1203.4 1287.5,1207.2 1292.3,1265.5 1298.5,1217.6 1303.5,1238.0 1310.4,1188.4 1318.7,1193.6 1322.9,1194.7 1328.7,1230.1 1334.7,1190.5 1343.7,1211.8 1349.9,1217.6 1356.2,1234.7 1362.8,1190.9 1368.3,1193.0 1374.5,1209.7 1380.8,1203.0 1387.4,1193.6 1392.6,1197.8 1396.8,1268.6 1399.5,1268.6 1403.7,1209.3 1409.3,1239.0 1414.5,1225.9 1420.7,1194.7 1430.1,1223.8 1437.4,1192.6 1443.2,1223.4 1448.9,1230.1 1455.1,1191.6 1459.9,1224.3 1470.7,1183.2 1476.6,1188.4 1485.7,1206.8 1489.0,1208.2 1494.7,1191.6 1499.9,1202.6 1506.1,1193.6 1510.7,1259.2 1517.0,1190.5 1523.2,1216.6 1534.2,1190.9 1539.4,1227.0 1541.5,1228.0 1545.7,1189.5 1551.9,1268.6 1554.0,1269.7 1558.2,1213.4 1562.8,1265.1 1565.5,1265.5 1570.7,1206.1 1574.8,1208.2 1580.7,1235.9 1585.9,1241.5 1592.5,1229.0 1598.2,1192.2 1609.8,1219.3 1616.1,1189.5 1621.7,1193.0 1626.9,1210.3 1633.2,1197.8 1639.0,1224.3 1643.1,1230.1 1649.8,1195.1 1655.0,1188.4 1658.1,1223.8 1661.9,1273.8 1667.5,1288.8 1680.0,1288.8 1682.1,1288.8 1771.6,1288.8 1775.8,1286.3 1777.9,1273.8 1782.0,1208.2 1792.5,1184.3 1798.7,1245.7 1803.9,1180.1 1807.0,1178.0 1811.2,1178.0 1817.4,1180.5 1820.6,1181.1 1823.7,1225.9 1825.8,1282.1 1828.9,1288.0 1833.1,1288.8 2017.4,1288.8 2023.6,1286.3 2026.7,1280.1 2031.9,1221.8 2037.1,1198.8 2042.3,1192.6 2048.6,1185.3 2053.8,1186.4 2061.1,1181.1 2066.9,1190.1 2072.5,1185.3 2078.8,1234.3 2084.0,1196.8 2090.2,1253.0 2096.1,1242.6 2101.7,1190.5 2107.3,1241.5 2112.7,1220.7 2119.0,1239.5 2124.6,1189.5 2129.8,1195.7 2135.6,1191.6 2141.3,1197.8 2145.4,1178.0 2147.5,1178.0 2150.6,1257.2 2153.8,1288.8" fill="none" stroke="#7e6cf0" stroke-width="2.2" stroke-linejoin="round" clip-path="url(#cr3)"/><polyline points="731.5,1274.9 733.6,1267.6 740.9,1266.5 747.1,1262.4 753.4,1255.1 757.5,1253.4 761.7,1246.3 774.2,1247.8 786.7,1247.8 792.9,1248.8 803.3,1247.8 809.6,1251.3 813.7,1253.0 819.0,1248.8 824.2,1252.0 830.4,1255.5 840.8,1255.1 853.3,1254.7 870.0,1254.7 878.3,1256.1 892.9,1256.1 900.2,1261.3 911.6,1261.3 924.1,1259.7 932.4,1258.2 942.9,1258.2 953.3,1254.0 960.6,1259.2 969.9,1260.3 977.2,1261.3 982.4,1258.8 988.3,1261.3 994.9,1258.6 1001.2,1259.7 1007.4,1263.4 1017.8,1263.8 1022.0,1262.4 1035.5,1262.4 1040.7,1259.2 1045.9,1255.1 1051.1,1253.4 1056.4,1243.6 1065.7,1240.5 1074.1,1235.9 1082.4,1231.1 1087.6,1229.5 1092.8,1231.8 1107.4,1231.8 1114.7,1229.5 1119.9,1231.1 1128.2,1233.2 1144.9,1234.3 1151.1,1237.4 1156.3,1242.6 1161.5,1250.9 1165.7,1265.5 1171.9,1272.8 1177.1,1288.0 1182.3,1288.0 1187.5,1257.2 1192.8,1239.5 1199.0,1239.5 1199.2,1239.5 1205.4,1239.5 1211.7,1244.7 1222.1,1245.7 1230.4,1252.6 1238.8,1257.2 1261.7,1257.8 1270.0,1261.3 1278.3,1262.4 1286.7,1265.9 1303.3,1263.4 1312.7,1256.1 1324.1,1253.0 1342.9,1248.8 1357.5,1247.2 1362.7,1244.7 1380.4,1244.7 1386.6,1252.0 1391.8,1255.1 1417.9,1254.0 1426.2,1253.0 1446.0,1253.0 1453.3,1242.2 1459.5,1240.5 1469.9,1229.0 1476.2,1230.1 1486.6,1233.2 1499.1,1240.5 1510.5,1253.0 1515.7,1255.1 1524.1,1254.0 1530.3,1257.2 1540.7,1267.6 1547.0,1270.7 1552.2,1269.7 1559.5,1253.0 1564.7,1238.4 1569.9,1227.0 1576.1,1231.1 1580.3,1231.1 1586.5,1227.0 1594.9,1227.0 1603.2,1233.2 1610.5,1234.7 1615.7,1240.5 1624.0,1246.3 1632.4,1253.0 1638.6,1261.3 1646.9,1268.6 1654.2,1272.8 1660.5,1288.0 1679.2,1288.0 1681.3,1288.0 1763.5,1288.0 1768.7,1270.7 1776.0,1268.6 1783.3,1270.1 1789.6,1271.7 1797.9,1275.5 1808.3,1275.5 1812.5,1276.3 1819.8,1275.9 1823.9,1287.4 1826.0,1288.0 2009.3,1288.0 2014.5,1270.7 2022.8,1269.7 2031.1,1267.2 2037.4,1268.6 2047.8,1266.5 2053.0,1250.9 2060.3,1240.5 2066.5,1237.4 2072.8,1228.0 2081.1,1225.9 2089.4,1223.4 2099.9,1222.8 2108.2,1218.6 2120.7,1217.6 2129.0,1219.0 2137.3,1221.8 2141.5,1225.9 2144.0,1250.9 2146.7,1288.0" fill="none" stroke="#ff1c1c" stroke-width="2.3" stroke-linejoin="round" clip-path="url(#cr3)"/><polyline points="732.3,1275.7 734.4,1268.4 741.7,1267.3 747.9,1263.2 754.2,1255.9 758.3,1254.2 762.5,1247.1 775.0,1248.6 787.5,1248.6 793.7,1249.6 804.1,1248.6 810.4,1252.1 814.5,1253.8 819.8,1249.6 825.0,1252.8 831.2,1256.3 841.6,1255.9 854.1,1255.5 870.8,1255.5 879.1,1256.9 893.7,1256.9 901.0,1262.1 912.4,1262.1 924.9,1260.5 933.2,1259.0 943.7,1259.0 954.1,1254.8 961.4,1260.0 970.7,1261.1 978.0,1262.1 983.2,1259.6 989.1,1262.1 995.7,1259.4 1002.0,1260.5 1008.2,1264.2 1018.6,1264.6 1022.8,1263.2 1036.3,1263.2 1041.5,1260.0 1046.7,1255.9 1051.9,1254.2 1057.2,1244.4 1066.5,1241.3 1074.9,1236.7 1083.2,1231.9 1088.4,1230.3 1093.6,1232.6 1108.2,1232.6 1115.5,1230.3 1120.7,1231.9 1129.0,1234.0 1145.7,1235.1 1151.9,1238.2 1157.1,1243.4 1162.3,1251.7 1166.5,1266.3 1172.7,1273.6 1177.9,1288.8 1183.1,1288.8 1188.3,1258.0 1193.6,1240.3 1199.8,1240.3 1200.0,1240.3 1206.2,1240.3 1212.5,1245.5 1222.9,1246.5 1231.2,1253.4 1239.6,1258.0 1262.5,1258.6 1270.8,1262.1 1279.1,1263.2 1287.5,1266.7 1304.1,1264.2 1313.5,1256.9 1324.9,1253.8 1343.7,1249.6 1358.3,1248.0 1363.5,1245.5 1381.2,1245.5 1387.4,1252.8 1392.6,1255.9 1418.7,1254.8 1427.0,1253.8 1446.8,1253.8 1454.1,1243.0 1460.3,1241.3 1470.7,1229.8 1477.0,1230.9 1487.4,1234.0 1499.9,1241.3 1511.3,1253.8 1516.5,1255.9 1524.9,1254.8 1531.1,1258.0 1541.5,1268.4 1547.8,1271.5 1553.0,1270.5 1560.3,1253.8 1565.5,1239.2 1570.7,1227.8 1576.9,1231.9 1581.1,1231.9 1587.3,1227.8 1595.7,1227.8 1604.0,1234.0 1611.3,1235.5 1616.5,1241.3 1624.8,1247.1 1633.2,1253.8 1639.4,1262.1 1647.7,1269.4 1655.0,1273.6 1661.3,1288.8 1680.0,1288.8 1682.1,1288.8 1764.3,1288.8 1769.5,1271.5 1776.8,1269.4 1784.1,1270.9 1790.4,1272.5 1798.7,1276.3 1809.1,1276.3 1813.3,1277.1 1820.6,1276.7 1824.7,1288.2 1826.8,1288.8 2010.1,1288.8 2015.3,1271.5 2023.6,1270.5 2031.9,1268.0 2038.2,1269.4 2048.6,1267.3 2053.8,1251.7 2061.1,1241.3 2067.3,1238.2 2073.6,1228.8 2081.9,1226.7 2090.2,1224.2 2100.7,1223.6 2109.0,1219.4 2121.5,1218.4 2129.8,1219.8 2138.1,1222.6 2142.3,1226.7 2144.8,1251.7 2147.5,1288.8" fill="none" stroke="#ff8c1e" stroke-width="2.3" stroke-linejoin="round" clip-path="url(#cr3)"/><polyline points="732.3,1288.8 737.5,1286.1 740.6,1274.6 744.8,1195.5 751.0,1189.2 757.3,1286.1 762.5,1202.8 768.1,1184.0 773.9,1189.2 779.6,1194.4 785.4,1242.3 791.2,1213.2 796.2,1198.6 802.5,1247.5 808.3,1204.9 814.5,1218.4 820.4,1204.9 826.0,1187.2 831.6,1194.4 837.5,1279.8 843.1,1272.5 848.9,1204.9 854.1,1202.8 859.7,1198.6 864.5,1202.8 870.8,1195.5 877.0,1193.4 883.3,1193.8 891.6,1197.6 898.3,1189.2 904.1,1195.5 909.7,1197.6 915.5,1220.5 921.8,1194.4 927.0,1194.4 928.0,1243.4 932.2,1249.6 937.8,1183.0 943.7,1191.3 948.9,1195.5 955.1,1194.4 960.7,1186.1 966.6,1198.6 972.2,1237.1 978.0,1197.6 983.2,1278.8 989.1,1209.0 994.7,1222.6 1000.9,1214.2 1007.2,1185.1 1013.4,1201.7 1018.6,1201.7 1023.2,1260.0 1030.1,1191.3 1036.3,1196.5 1041.5,1191.3 1046.7,1211.1 1051.9,1195.5 1057.8,1194.4 1063.4,1196.5 1069.6,1193.4 1075.9,1208.0 1081.1,1192.4 1087.3,1213.2 1092.6,1227.8 1098.8,1191.3 1104.0,1197.6 1109.8,1190.3 1114.4,1228.8 1120.7,1199.6 1125.9,1198.6 1132.5,1183.0 1138.4,1202.8 1143.6,1186.1 1149.8,1195.5 1155.0,1190.3 1161.3,1277.7 1166.9,1180.9 1172.7,1184.0 1179.0,1287.1 1189.4,1288.8 1195.6,1205.9 1202.1,1189.2 1207.3,1249.6 1212.9,1201.7 1217.7,1197.6 1223.3,1277.7 1229.2,1191.3 1234.4,1188.2 1240.6,1193.4 1246.9,1224.6 1252.1,1266.3 1258.3,1195.5 1263.5,1211.1 1269.3,1189.2 1275.4,1228.8 1280.2,1195.5 1284.3,1201.7 1287.5,1210.1 1292.3,1251.7 1298.5,1235.1 1303.5,1230.9 1310.4,1188.2 1318.7,1194.4 1322.9,1195.5 1328.7,1262.1 1334.7,1187.2 1340.6,1199.6 1345.8,1230.9 1351.0,1235.1 1357.2,1205.9 1362.8,1191.3 1368.3,1192.4 1374.5,1190.3 1379.5,1209.0 1385.3,1191.3 1391.6,1196.5 1396.8,1270.5 1399.5,1271.5 1403.7,1224.6 1409.3,1264.2 1414.5,1226.7 1420.7,1194.4 1427.0,1212.1 1437.4,1190.3 1443.2,1255.9 1448.9,1204.9 1455.1,1189.2 1459.9,1197.6 1470.7,1184.0 1476.6,1189.2 1483.2,1198.6 1489.0,1212.1 1494.7,1191.3 1499.9,1199.6 1506.1,1192.4 1510.7,1253.8 1517.0,1193.4 1523.2,1193.4 1529.0,1199.6 1534.2,1191.3 1540.5,1260.0 1545.7,1194.4 1551.9,1266.3 1558.2,1224.6 1562.8,1265.2 1565.5,1265.2 1569.6,1199.6 1574.8,1199.6 1581.1,1203.8 1586.3,1220.5 1592.5,1258.0 1598.2,1196.5 1604.0,1198.6 1609.8,1196.5 1616.1,1191.3 1621.7,1191.3 1626.9,1196.5 1633.2,1204.9 1639.0,1193.4 1644.6,1260.0 1649.8,1195.5 1655.0,1191.3 1658.1,1220.5 1661.9,1270.5 1667.5,1288.8 1680.0,1288.8 1682.1,1288.8 1771.6,1288.8 1775.8,1286.1 1777.9,1274.6 1782.0,1213.2 1792.5,1188.2 1798.7,1196.5 1803.9,1180.9 1807.0,1178.8 1811.2,1179.9 1817.4,1181.3 1820.6,1181.9 1823.7,1226.7 1825.8,1280.9 1828.9,1287.5 1833.1,1288.8 2013.2,1288.8 2021.5,1286.1 2026.7,1279.8 2031.9,1222.6 2037.1,1199.6 2042.3,1192.4 2048.6,1185.1 2053.8,1184.0 2061.1,1180.9 2066.9,1190.3 2072.5,1188.2 2078.8,1260.0 2084.0,1197.6 2090.2,1247.5 2096.1,1241.3 2101.7,1189.2 2107.3,1212.1 2112.7,1245.5 2119.0,1280.9 2124.6,1190.3 2129.8,1198.6 2135.6,1193.4 2141.3,1186.1 2145.4,1176.7 2147.5,1178.8 2150.6,1258.0 2153.8,1288.8" fill="none" stroke="#22f0f4" stroke-width="2.3" stroke-linejoin="round" clip-path="url(#cr3)"/><polygon points="864.3,1290.1 867.6,1290.1 866.8,1307.1 866.0,1313.1 865.0,1310.1" fill="#7e6cf0"/><polygon points="937.2,1290.1 938.9,1290.1 938.5,1293.6 938.0,1299.6 937.5,1296.6" fill="#7e6cf0"/><polygon points="965.5,1290.1 968.4,1290.1 967.7,1319.6 967.0,1325.6 966.1,1322.6" fill="#7e6cf0"/><polygon points="1067.8,1290.1 1071.5,1290.1 1070.6,1346.7 1069.6,1352.7 1068.5,1349.7" fill="#7e6cf0"/><polygon points="1251.0,1290.1 1255.2,1290.1 1254.1,1316.5 1253.1,1322.5 1251.9,1319.5" fill="#7e6cf0"/><polygon points="1504.0,1290.1 1508.2,1290.1 1507.2,1347.7 1506.1,1353.7 1504.9,1350.7" fill="#7e6cf0"/><polygon points="1533.4,1290.1 1535.9,1290.1 1535.3,1323.8 1534.7,1329.8 1533.9,1326.8" fill="#7e6cf0"/><polygon points="1973.4,1290.1 1975.9,1290.1 1975.3,1319.6 1974.7,1325.6 1973.9,1322.6" fill="#7e6cf0"/><polygon points="2031.5,1290.1 2033.2,1290.1 2032.8,1287.3 2032.4,1293.3 2031.9,1290.3" fill="#7e6cf0"/><polygon points="2041.9,1290.1 2045.7,1290.1 2044.7,1349.8 2043.8,1355.8 2042.7,1352.8" fill="#7e6cf0"/><polygon points="2071.3,1290.1 2073.4,1290.1 2072.9,1295.7 2072.3,1301.7 2071.7,1298.7" fill="#7e6cf0"/><polyline points="732.3,1351.2 741.7,1348.5 746.9,1351.6 751.0,1358.3 756.2,1358.9 762.5,1352.7 825.0,1352.7 832.2,1354.8 837.5,1358.3 862.4,1358.3 866.6,1357.3 962.4,1357.3 970.7,1358.9 977.0,1357.3 1041.5,1357.3 1046.7,1355.8 1058.2,1354.8 1066.5,1352.1 1071.7,1350.6 1075.9,1352.7 1081.1,1356.8 1091.5,1355.8 1151.9,1355.8 1155.0,1352.7 1161.3,1352.7 1166.5,1349.6 1183.1,1349.6 1189.4,1353.7 1195.6,1354.8 1199.8,1354.8 1200.0,1354.1 1208.3,1355.8 1354.1,1355.8 1358.3,1353.7 1366.6,1352.1 1381.2,1352.1 1385.3,1353.7 1488.4,1353.7 1493.6,1352.1 1506.1,1352.1 1510.3,1353.3 1518.6,1353.3 1521.7,1354.8 1539.4,1354.8 1545.7,1351.6 1551.9,1351.2 1557.1,1354.8 1608.2,1354.8 1614.4,1352.7 1622.7,1352.7 1626.9,1354.1 1637.3,1354.1 1644.6,1351.2 1651.9,1350.0 1656.1,1347.9 1680.0,1347.9 1682.1,1347.9 2017.4,1347.9 2034.0,1348.5 2048.6,1347.5 2054.8,1354.8 2065.3,1352.7 2071.5,1354.8 2096.5,1355.8 2102.7,1353.7 2142.3,1353.7 2147.5,1357.9 2152.7,1354.8 2154.4,1351.6" fill="none" stroke="#ff1c1c" stroke-width="2.3" stroke-linejoin="round" clip-path="url(#cr4)"/><polyline points="732.3,1349.6 741.7,1347.5 746.9,1355.8 751.0,1371.0 757.3,1371.0 762.5,1355.8 825.0,1356.2 831.2,1357.9 835.4,1368.3 838.5,1370.4 860.4,1370.4 862.4,1368.7 958.2,1368.7 961.4,1370.4 971.8,1370.4 977.0,1366.6 1002.0,1366.2 1006.1,1364.6 1022.8,1364.6 1025.9,1363.1 1051.9,1363.1 1058.2,1358.9 1066.5,1355.8 1071.7,1354.8 1075.9,1355.8 1081.1,1361.0 1106.1,1361.0 1110.3,1358.9 1161.3,1358.3 1166.5,1347.9 1183.1,1347.9 1189.4,1354.8 1194.6,1358.3 1199.8,1358.3 1200.0,1358.3 1223.9,1358.3 1227.1,1360.0 1234.4,1360.4 1240.6,1364.1 1321.8,1364.1 1329.1,1360.0 1360.3,1360.0 1366.6,1355.8 1381.2,1355.8 1385.3,1360.0 1449.9,1360.0 1453.0,1358.9 1462.4,1358.9 1465.5,1357.3 1469.7,1357.3 1477.0,1361.0 1487.4,1361.0 1494.7,1355.4 1506.1,1355.4 1512.4,1358.3 1520.7,1362.1 1535.3,1362.1 1545.7,1356.8 1553.0,1356.8 1558.2,1364.1 1564.4,1360.0 1570.7,1357.3 1574.8,1357.3 1581.1,1361.0 1608.2,1361.0 1614.4,1356.8 1622.7,1356.8 1627.9,1361.6 1634.2,1361.6 1644.6,1356.2 1648.8,1355.8 1656.1,1349.6 1680.0,1349.6 1682.1,1348.5 2021.5,1348.5 2031.9,1345.4 2048.6,1345.4 2053.8,1363.1 2062.1,1363.1 2067.3,1353.7 2072.5,1361.0 2100.7,1361.0 2106.9,1358.9 2114.2,1357.9 2119.4,1355.8 2140.2,1355.8 2147.5,1373.5 2151.7,1351.6 2154.4,1346.4" fill="none" stroke="#ff8c1e" stroke-width="2.3" stroke-linejoin="round" clip-path="url(#cr4)"/><polyline points="732.3,1355.8 739.6,1345.4 744.8,1351.6 750.0,1353.7 754.2,1351.6 759.4,1341.2 762.5,1339.6 768.7,1350.0 779.6,1360.0 785.4,1353.3 791.2,1364.1 796.8,1361.0 803.1,1353.7 808.3,1365.2 813.5,1351.6 819.8,1362.5 825.0,1361.6 831.6,1366.6 837.5,1355.8 842.7,1352.1 847.9,1354.8 853.1,1346.0 858.3,1353.7 864.5,1346.0 870.8,1356.8 876.0,1357.3 881.6,1348.1 888.5,1356.8 897.8,1358.3 904.1,1361.4 914.5,1361.4 921.8,1358.3 927.0,1359.6 932.8,1352.1 939.5,1357.5 949.9,1359.6 956.2,1361.6 961.4,1363.7 966.6,1352.7 972.2,1351.2 978.0,1358.3 983.2,1351.2 989.5,1356.2 995.3,1344.8 1000.9,1352.1 1007.2,1351.6 1013.4,1353.3 1018.6,1353.3 1024.3,1345.8 1030.1,1353.7 1041.5,1353.7 1046.7,1347.1 1053.0,1354.3 1062.4,1356.8 1070.7,1360.0 1079.0,1360.0 1086.3,1351.2 1092.6,1360.0 1097.8,1357.5 1104.0,1360.0 1109.2,1358.3 1116.5,1361.6 1121.7,1361.0 1126.9,1353.3 1132.1,1360.0 1137.3,1365.2 1143.6,1360.0 1149.8,1365.2 1155.0,1355.8 1161.3,1356.8 1166.5,1366.6 1171.7,1368.7 1177.9,1355.8 1189.4,1355.4 1194.6,1345.0 1199.8,1355.8 1200.0,1355.8 1206.2,1357.5 1217.7,1354.8 1223.3,1344.8 1229.2,1354.8 1240.6,1359.6 1246.2,1351.2 1252.1,1351.2 1258.3,1357.5 1263.5,1350.0 1270.8,1359.6 1282.3,1359.6 1287.0,1350.0 1292.7,1358.3 1298.3,1347.1 1305.2,1355.8 1312.5,1355.2 1322.9,1357.9 1328.7,1349.6 1334.3,1359.6 1339.5,1361.0 1345.4,1352.1 1352.0,1360.4 1358.3,1361.6 1366.6,1360.4 1372.8,1362.5 1379.1,1365.2 1385.3,1365.2 1391.6,1366.6 1397.8,1354.8 1407.8,1349.1 1415.5,1358.3 1420.7,1356.8 1427.0,1347.1 1432.2,1347.5 1437.4,1356.2 1442.6,1348.1 1447.8,1355.2 1454.1,1353.7 1460.3,1345.4 1464.9,1341.9 1470.7,1354.8 1479.1,1358.9 1487.4,1361.0 1494.7,1361.0 1500.9,1363.7 1506.1,1363.7 1511.3,1357.3 1517.6,1366.2 1529.0,1371.0 1535.3,1369.3 1541.1,1362.5 1545.7,1368.7 1551.9,1361.6 1557.1,1358.3 1563.4,1359.6 1569.6,1367.3 1574.8,1368.3 1581.1,1356.8 1587.3,1352.7 1592.5,1351.2 1598.2,1358.3 1604.0,1361.0 1610.2,1356.4 1617.5,1361.6 1624.8,1365.8 1633.2,1371.0 1638.4,1372.5 1643.6,1363.7 1649.8,1373.5 1656.1,1374.5 1661.3,1355.8 1680.0,1355.4 1682.1,1355.4 1769.5,1355.4 1775.8,1345.4 1782.0,1344.8 1788.3,1352.1 1793.5,1352.1 1798.7,1343.3 1803.9,1354.8 1819.5,1362.1 1826.8,1354.8 2015.3,1354.8 2021.5,1344.8 2031.9,1341.6 2038.2,1350.6 2046.5,1351.6 2054.8,1353.3 2061.1,1353.7 2066.9,1359.6 2072.5,1351.6 2078.8,1365.8 2084.0,1358.9 2090.2,1345.4 2096.1,1353.3 2106.9,1336.0 2113.2,1346.0 2117.3,1346.0 2122.5,1343.3 2129.8,1347.1 2135.6,1345.4 2146.5,1354.8 2151.7,1354.8 2154.4,1347.5" fill="none" stroke="#22f0f4" stroke-width="2.3" stroke-linejoin="round" clip-path="url(#cr4)"/><path d="M509.6,780.5H2299.8M509.6,907.0H2299.8M509.6,1034.6H2299.8M509.6,1162.1H2299.8M509.6,1289.5H2299.8M509.6,1416.6H2299.8" stroke="#f4f4f4" stroke-width="1.5" fill="none"/><path d="M510,780.5V1416.6 M730.9,780.5V1416.6 M2154.9,780.5V1416.6 M2299,780.5V1416.6" stroke="#f0f0f0" stroke-width="1.8" fill="none"/><path d="M509.6,1417.5H2299.9" stroke="#fff" stroke-width="2.4" fill="none"/><path d="M1427.3,780.5V1416.6" stroke="#f4f4f4" stroke-width="1.3" fill="none"/><text transform="translate(616.3,794.1) scale(0.905,1)" text-anchor="end" font-size="15.1" fill="#ff1c1c">RPM (rpm)</text><text transform="translate(611.6,824.2) scale(0.935,1)" text-anchor="end" font-size="27.8" fill="#ff1c1c">1,568</text><text transform="translate(727.1,794.1) scale(0.905,1)" text-anchor="end" font-size="15.1" fill="#ffffff">INJ Duty (%)</text><text transform="translate(723.6,824.2) scale(0.935,1)" text-anchor="end" font-size="27.8" fill="#ffffff">9.2</text><text transform="translate(616.3,846.2) scale(0.905,1)" text-anchor="end" font-size="15.1" fill="#2ff03a">Speed (mph)</text><text transform="translate(611.6,876.3) scale(0.935,1)" text-anchor="end" font-size="27.8" fill="#2ff03a">32</text><text transform="translate(616.3,920.6) scale(0.905,1)" text-anchor="end" font-size="15.1" fill="#30c8ec">MAF (lb/min)</text><text transform="translate(727.1,920.6) scale(0.905,1)" text-anchor="end" font-size="15.1" fill="#2ff03a">O2 (mV)</text><text transform="translate(723.6,950.7) scale(0.935,1)" text-anchor="end" font-size="27.8" fill="#2ff03a">550</text><text transform="translate(616.3,972.7) scale(0.905,1)" text-anchor="end" font-size="15.1" fill="#ee22ee">MAP (kPa)</text><text transform="translate(611.6,1002.8) scale(0.935,1)" text-anchor="end" font-size="27.8" fill="#ee22ee">50.3</text><text transform="translate(616.3,1048.2) scale(0.905,1)" text-anchor="end" font-size="15.1" fill="#ff1c1c">KR (°)</text><text transform="translate(727.1,1048.2) scale(0.905,1)" text-anchor="end" font-size="15.1" fill="#2ff03a">TPS (%)</text><text transform="translate(723.6,1078.3) scale(0.935,1)" text-anchor="end" font-size="27.8" fill="#2ff03a">11.0</text><text transform="translate(616.3,1100.3) scale(0.905,1)" text-anchor="end" font-size="15.1" fill="#ffffff">Spark (°)</text><text transform="translate(611.6,1130.4) scale(0.935,1)" text-anchor="end" font-size="27.8" fill="#ffffff">38.0</text><text transform="translate(616.3,1175.7) scale(0.905,1)" text-anchor="end" font-size="15.1" fill="#ff1c1c">INJ B1 (ms)</text><text transform="translate(611.6,1205.8) scale(0.935,1)" text-anchor="end" font-size="27.8" fill="#ff1c1c">6.9</text><text transform="translate(727.1,1175.7) scale(0.905,1)" text-anchor="end" font-size="15.1" fill="#ff8c1e">INJ B2 (ms)</text><text transform="translate(723.6,1205.8) scale(0.935,1)" text-anchor="end" font-size="27.8" fill="#ff8c1e">7.1</text><text transform="translate(616.3,1227.8) scale(0.905,1)" text-anchor="end" font-size="15.1" fill="#7e6cf0">O2 B1S1 (mV)</text><text transform="translate(611.6,1257.9) scale(0.935,1)" text-anchor="end" font-size="27.8" fill="#7e6cf0">794</text><text transform="translate(727.1,1227.8) scale(0.905,1)" text-anchor="end" font-size="15.1" fill="#22f0f4">O2 B2S1 (mV)</text><text transform="translate(723.6,1257.9) scale(0.935,1)" text-anchor="end" font-size="27.8" fill="#22f0f4">307</text><text transform="translate(616.3,1303.1) scale(0.905,1)" text-anchor="end" font-size="15.1" fill="#ff1c1c">LTFT B1 (%)</text><text transform="translate(611.6,1333.2) scale(0.935,1)" text-anchor="end" font-size="27.8" fill="#ff1c1c">-0.4</text><text transform="translate(727.1,1303.1) scale(0.905,1)" text-anchor="end" font-size="15.1" fill="#ff8c1e">LTFT B2 (%)</text><text transform="translate(723.6,1333.2) scale(0.935,1)" text-anchor="end" font-size="27.8" fill="#ff8c1e">-2.4</text><text transform="translate(616.3,1355.2) scale(0.905,1)" text-anchor="end" font-size="15.1" fill="#7e6cf0">STFT B1 (%)</text><text transform="translate(611.6,1385.3) scale(0.935,1)" text-anchor="end" font-size="27.8" fill="#7e6cf0">184.8</text><text transform="translate(727.1,1355.2) scale(0.905,1)" text-anchor="end" font-size="15.1" fill="#22f0f4">STFT B2 (%)</text><text transform="translate(723.6,1385.3) scale(0.935,1)" text-anchor="end" font-size="27.8" fill="#22f0f4">2.2</text><text transform="translate(2158.4,794.2) scale(0.865,1)" font-size="15.2" fill="#ff1c1c">6,000</text><text transform="translate(2158.4,849.0) scale(0.865,1)" font-size="15.2" fill="#ff1c1c">3,000</text><text transform="translate(2158.4,903.4) scale(0.865,1)" font-size="15.2" fill="#ff1c1c">0</text><text transform="translate(2198.3,794.2) scale(0.865,1)" font-size="15.2" fill="#2ff03a">160</text><text transform="translate(2198.3,849.0) scale(0.865,1)" font-size="15.2" fill="#2ff03a">80</text><text transform="translate(2198.3,903.4) scale(0.865,1)" font-size="15.2" fill="#2ff03a">0</text><text transform="translate(2226,794.2) scale(0.865,1)" font-size="15.2" fill="#ffffff">100</text><text transform="translate(2225.4,849.0) scale(0.865,1)" font-size="15.2" fill="#ffffff">50</text><text transform="translate(2226,903.4) scale(0.865,1)" font-size="15.2" fill="#ffffff">0</text><text transform="translate(2158.4,920.7) scale(0.865,1)" font-size="15.2" fill="#30c8ec">60</text><text transform="translate(2158.4,975.5) scale(0.865,1)" font-size="15.2" fill="#30c8ec">30</text><text transform="translate(2158.4,1029.9) scale(0.865,1)" font-size="15.2" fill="#30c8ec">0</text><text transform="translate(2178.6,920.7) scale(0.865,1)" font-size="15.2" fill="#ee22ee">105.0</text><text transform="translate(2178.6,975.5) scale(0.865,1)" font-size="15.2" fill="#ee22ee">52.5</text><text transform="translate(2178.6,1029.9) scale(0.865,1)" font-size="15.2" fill="#ee22ee">0.0</text><text transform="translate(2218,920.7) scale(0.865,1)" font-size="15.2" fill="#2ff03a">1,000</text><text transform="translate(2218,975.5) scale(0.865,1)" font-size="15.2" fill="#2ff03a">500</text><text transform="translate(2218,1029.9) scale(0.865,1)" font-size="15.2" fill="#2ff03a">0</text><text transform="translate(2158.4,1048.3) scale(0.865,1)" font-size="15.2" fill="#ff1c1c">10</text><text transform="translate(2158.4,1103.1) scale(0.865,1)" font-size="15.2" fill="#ff1c1c">5</text><text transform="translate(2158.4,1157.5) scale(0.865,1)" font-size="15.2" fill="#ff1c1c">0</text><text transform="translate(2177.6,1048.3) scale(0.865,1)" font-size="15.2" fill="#ffffff">45.0</text><text transform="translate(2177.6,1103.1) scale(0.865,1)" font-size="15.2" fill="#ffffff">22.5</text><text transform="translate(2177.6,1157.5) scale(0.865,1)" font-size="15.2" fill="#ffffff">0.0</text><text transform="translate(2209.8,1048.3) scale(0.865,1)" font-size="15.2" fill="#2ff03a">100</text><text transform="translate(2209.8,1103.1) scale(0.865,1)" font-size="15.2" fill="#2ff03a">50</text><text transform="translate(2209.8,1157.5) scale(0.865,1)" font-size="15.2" fill="#2ff03a">0</text><text transform="translate(2158,1175.8) scale(0.865,1)" font-size="15.2" fill="#ff1c1c">25.0</text><text transform="translate(2158,1230.6) scale(0.865,1)" font-size="15.2" fill="#ff1c1c">12.5</text><text transform="translate(2158,1285.0) scale(0.865,1)" font-size="15.2" fill="#ff1c1c">0.0</text><text transform="translate(2189.8,1175.8) scale(0.865,1)" font-size="15.2" fill="#7e6cf0">1,000</text><text transform="translate(2189.8,1230.6) scale(0.865,1)" font-size="15.2" fill="#7e6cf0">500</text><text transform="translate(2189.8,1285.0) scale(0.865,1)" font-size="15.2" fill="#7e6cf0">0</text><text transform="translate(2229.4,1175.8) scale(0.865,1)" font-size="15.2" fill="#ff8c1e">25.0</text><text transform="translate(2229.4,1230.6) scale(0.865,1)" font-size="15.2" fill="#ff8c1e">12.5</text><text transform="translate(2229.4,1285.0) scale(0.865,1)" font-size="15.2" fill="#ff8c1e">0.0</text><text transform="translate(2260.7,1175.8) scale(0.865,1)" font-size="15.2" fill="#22f0f4">1,000</text><text transform="translate(2260.7,1230.6) scale(0.865,1)" font-size="15.2" fill="#22f0f4">500</text><text transform="translate(2260.7,1285.0) scale(0.865,1)" font-size="15.2" fill="#22f0f4">0</text><text transform="translate(2158,1303.2) scale(0.865,1)" font-size="15.2" fill="#ff1c1c">25</text><text transform="translate(2158,1358.0) scale(0.865,1)" font-size="15.2" fill="#ff1c1c">0</text><text transform="translate(2158,1412.4) scale(0.865,1)" font-size="15.2" fill="#ff1c1c">-25</text><text transform="translate(2178,1303.2) scale(0.865,1)" font-size="15.2" fill="#7e6cf0">25</text><text transform="translate(2178,1358.0) scale(0.865,1)" font-size="15.2" fill="#7e6cf0">0</text><text transform="translate(2176.5,1412.4) scale(0.865,1)" font-size="15.2" fill="#7e6cf0">-25</text><text transform="translate(2198,1303.2) scale(0.865,1)" font-size="15.2" fill="#ff8c1e">25</text><text transform="translate(2198,1358.0) scale(0.865,1)" font-size="15.2" fill="#ff8c1e">0</text><text transform="translate(2196,1412.4) scale(0.865,1)" font-size="15.2" fill="#ff8c1e">-25</text><text transform="translate(2218.2,1303.2) scale(0.865,1)" font-size="15.2" fill="#22f0f4">25</text><text transform="translate(2218.2,1358.0) scale(0.865,1)" font-size="15.2" fill="#22f0f4">0</text><text transform="translate(2215.5,1412.4) scale(0.865,1)" font-size="15.2" fill="#22f0f4">-25</text></svg>
<div class="abs" style="left:0;top:1430px;width:2305px;height:38px;background:#dcdcdc"></div>
<div class="abs" style="left:959.4px;top:1430.6px;width:113.6px;height:36px;background:#fff;border:2px solid #303030"></div>
<svg width="2305" height="1468"><polyline points="0.0,1465.1 21.7,1465.1 24.1,1462.4 26.7,1464.8 30.1,1463.4 32.7,1464.8 35.1,1461.4 37.4,1463.4 40.8,1453.4 43.4,1451.4 48.4,1459.1 53.4,1456.7 58.5,1452.4 60.8,1450.1 64.1,1460.1 76.8,1458.4 81.8,1460.1 85.2,1458.4 88.5,1461.7 91.9,1460.1 95.2,1449.1 98.5,1456.7 106.2,1444.7 109.6,1455.7 115.2,1452.4 120.9,1449.7 127.6,1449.7 131.0,1458.4 147.0,1458.4 150.3,1459.7 185.4,1459.7 190.4,1457.4 197.1,1457.4 203.8,1459.7 213.8,1460.7 220.5,1459.7 238.9,1459.1 245.5,1449.1 249.9,1460.1 253.9,1458.4 258.9,1449.1 263.2,1456.7 268.9,1452.4 275.6,1452.4 278.3,1461.4 282.3,1457.4 299.0,1457.4 300.7,1456.4 310.7,1457.4 315.7,1460.1 318.0,1455.7 324.0,1460.1 330.7,1453.4 335.7,1455.7 340.7,1455.7 345.7,1450.1 349.1,1460.1 355.8,1457.4 360.8,1457.4 367.5,1460.1 372.5,1458.4 382.5,1461.7 387.5,1459.7 405.9,1459.7 410.9,1465.1 419.2,1465.1 420.9,1466.1 424.3,1465.1 487.7,1465.1 491.1,1466.1 494.4,1465.1 534.5,1465.1 537.8,1466.1 542.8,1465.1 618.0,1465.1 621.3,1461.7 626.4,1457.4 633.0,1463.4 643.1,1459.1 648.1,1458.4 653.1,1455.7 656.4,1457.4 663.1,1452.4 668.1,1454.7 672.1,1452.4 678.1,1455.7 688.2,1459.1 698.2,1458.4 706.5,1449.1 709.9,1456.7 716.6,1450.1 719.9,1459.1 729.9,1457.4 734.9,1457.4 739.9,1458.4 748.3,1456.4 756.6,1458.4 765.0,1460.1 770.0,1458.4 775.0,1455.7 779.4,1460.1 783.4,1461.7 786.7,1452.4 790.0,1455.7 796.1,1440.7 800.1,1453.4 805.1,1450.1 811.8,1447.4 814.1,1454.7 830.1,1454.7 838.5,1457.4 845.2,1458.4 848.5,1457.4 860.2,1460.1 876.9,1459.1 881.9,1465.1 890.3,1465.1 894.3,1459.1 896.9,1448.1 899.6,1456.7 906.3,1445.7 910.3,1455.7 916.3,1452.4 919.7,1457.4 930.3,1455.7 937.0,1454.7 943.7,1455.7 952.1,1454.1 958.7,1457.4 965.4,1450.1 970.4,1450.1 977.1,1454.1 983.8,1457.4 992.1,1451.4 996.5,1457.4 1023.9,1456.7 1033.9,1455.1 1041.3,1458.4 1045.6,1450.1 1053.9,1454.7 1062.3,1460.7 1067.3,1446.7 1073.0,1449.1 1077.3,1445.7 1084.0,1442.4 1086.7,1450.7 1104.1,1449.1 1114.1,1452.4 1124.1,1457.4 1129.1,1460.7 1134.1,1458.4 1137.5,1460.1 1142.5,1457.4 1147.5,1458.4 1150.8,1457.4 1156.8,1458.4 1161.5,1465.1 1211.0,1465.1 1212.6,1466.1 1216.0,1465.1 1259.4,1465.1 1264.4,1452.4 1267.7,1441.4 1270.4,1450.7 1275.1,1438.0 1279.4,1450.1 1291.1,1450.7 1297.8,1449.1 1304.5,1453.4 1312.8,1450.7 1317.9,1454.7 1324.5,1453.4 1332.9,1447.4 1336.2,1454.1 1347.9,1454.7 1357.9,1453.4 1366.3,1452.4 1374.6,1454.1 1383.0,1458.4 1386.3,1457.4 1389.7,1461.7 1394.7,1459.1 1399.7,1460.1 1404.7,1465.1 1451.5,1465.1 1453.1,1466.1 1456.5,1465.1 1535.0,1465.1 1535.0,1465.1 1566.7,1465.1 1570.1,1449.1 1572.7,1441.4 1575.8,1453.4 1581.8,1447.4 1587.8,1439.7 1591.1,1452.4 1596.8,1449.1 1603.5,1445.7 1606.2,1455.1 1615.2,1455.7 1628.5,1458.4 1636.9,1460.1 1642.6,1461.7 1647.9,1447.4 1651.9,1440.0 1655.9,1458.4 1659.3,1460.7 1662.6,1459.1 1666.0,1457.4 1673.6,1451.4 1682.0,1455.7 1688.7,1460.1 1693.7,1458.4 1700.4,1458.4 1705.4,1464.1 1711.4,1464.1 1717.1,1444.0 1720.4,1451.4 1727.1,1433.4 1730.4,1445.7 1738.8,1439.0 1744.8,1435.7 1748.1,1445.7 1762.2,1441.4 1782.2,1440.0 1788.9,1437.4 1792.2,1448.1 1797.2,1445.0 1835.7,1445.0 1849.0,1447.4 1870.7,1447.4 1874.1,1445.7 1878.4,1448.1 1880.7,1455.7 1883.1,1442.4 1895.8,1445.7 1905.8,1448.1 1909.8,1462.4 1915.8,1463.4 1920.8,1460.1 1924.2,1461.7 1927.5,1459.1 1930.9,1460.1 1934.2,1458.4 1938.5,1464.1 1941.9,1463.4 1944.2,1456.7 1949.2,1464.1 1967.6,1464.1 1970.9,1458.4 1974.3,1458.4 1978.6,1436.7 1982.0,1445.7 1986.0,1436.7 1990.0,1448.1 1996.0,1449.1 2001.0,1447.4 2004.4,1457.4 2009.4,1454.1 2027.7,1454.1 2036.1,1454.7 2046.1,1452.4 2056.1,1449.1 2066.2,1452.4 2074.5,1451.7 2086.2,1454.7 2102.9,1456.7 2112.9,1457.4 2122.9,1456.7 2136.3,1454.7 2146.3,1454.1 2151.3,1457.4 2153.7,1449.1 2158.0,1452.4 2164.7,1451.7 2171.4,1448.1 2179.7,1441.4 2183.7,1440.7 2186.4,1451.4 2196.4,1452.4 2206.5,1450.7 2216.5,1452.4 2233.2,1453.4 2238.2,1460.1 2243.2,1461.7 2249.9,1459.1 2258.2,1458.4 2266.6,1455.7 2274.9,1460.1 2278.3,1461.7 2283.3,1459.1 2290.0,1458.4 2293.3,1460.1 2300.0,1463.4 2305.0,1463.4" fill="none" stroke="#f22a2a" stroke-width="1.25" stroke-linejoin="round"/><rect x="1010.8" y="1444" width="1.8" height="7.4" fill="#8a8a8a"/><rect x="1014" y="1444" width="1.8" height="7.4" fill="#8a8a8a"/><rect x="1018.6" y="1444" width="1.8" height="7.4" fill="#8a8a8a"/><rect x="1015.5" y="1435" width="1.5" height="26.4" fill="#18b0e8"/></svg>
</body></html>
